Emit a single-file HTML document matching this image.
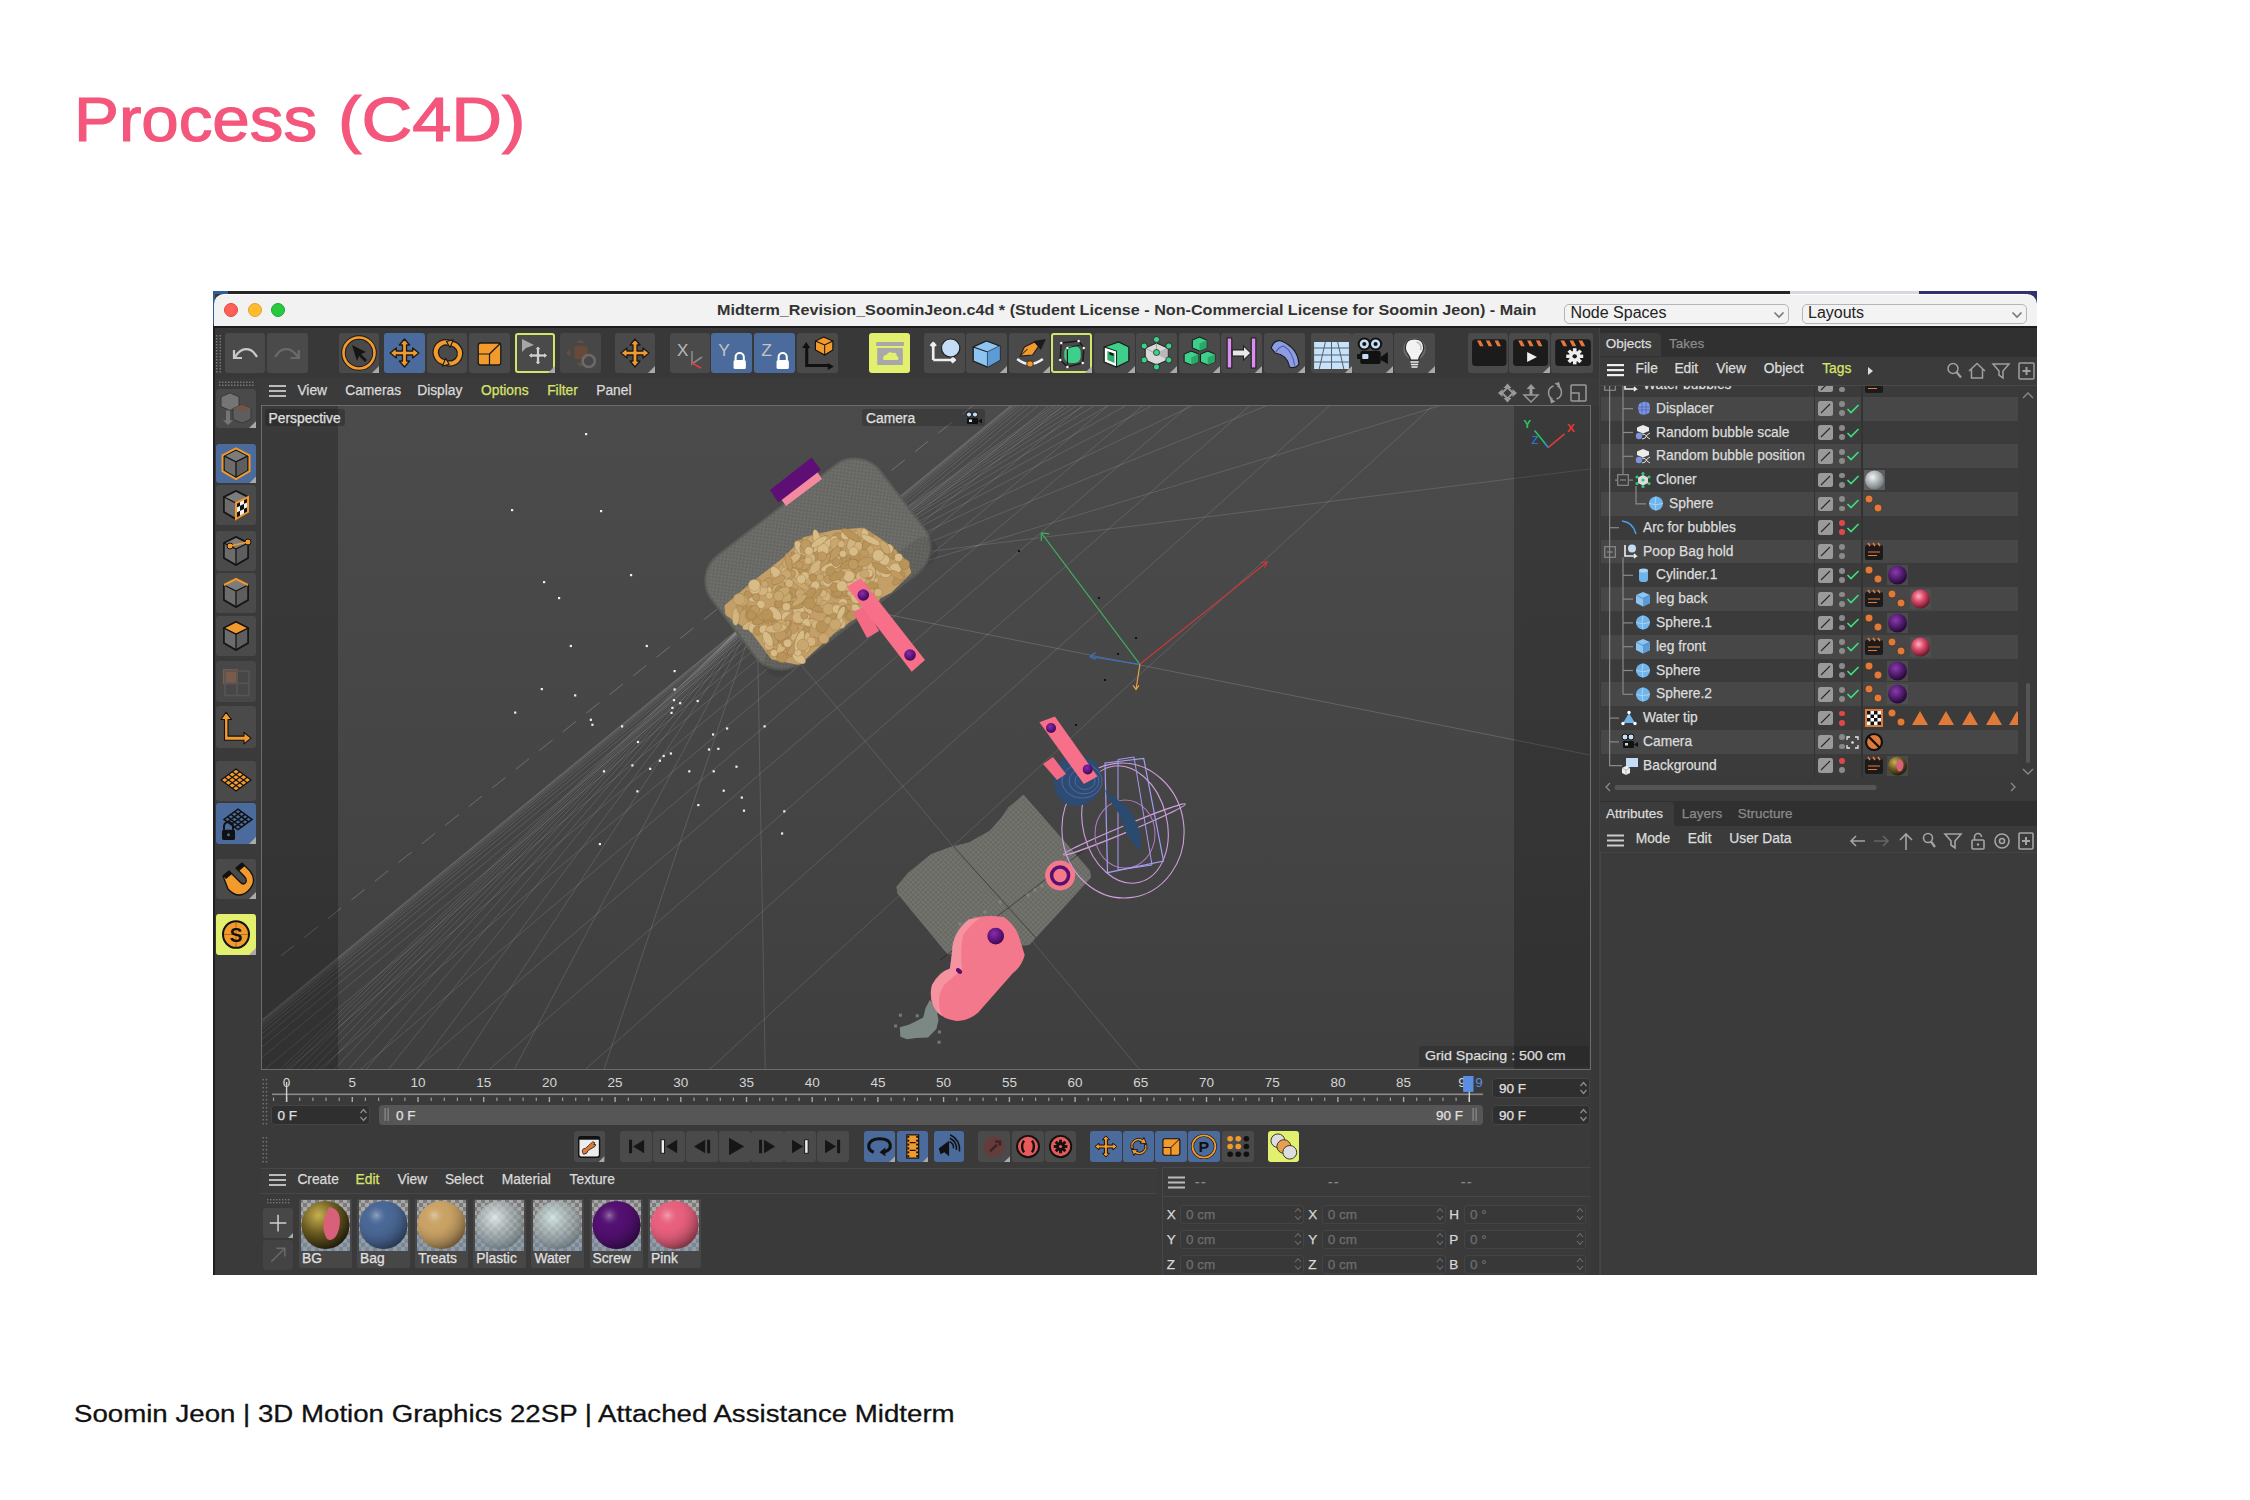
<!DOCTYPE html><html><head><meta charset="utf-8"><style>*{margin:0;padding:0;box-sizing:border-box}
html,body{width:2250px;height:1500px;overflow:hidden;background:#fff;font-family:"Liberation Sans",sans-serif}
.a{position:absolute}
.t{white-space:nowrap;line-height:1;-webkit-font-smoothing:antialiased}
</style></head><body><div class="a t" style="left:74.1px;top:87.5px;font-size:63px;color:#f4567c;transform:scaleX(1.068);transform-origin:0 0;-webkit-text-stroke:1.2px #f4567c">Process</div>
<div class="a t" style="left:338px;top:87.5px;font-size:63px;color:#f4567c;transform:scaleX(1.116);transform-origin:0 0;-webkit-text-stroke:1.2px #f4567c">(C4D)</div>
<div class="a t" style="left:74px;top:1402.2px;font-size:24.7px;color:#111;transform:scaleX(1.12);transform-origin:0 0;-webkit-text-stroke:0.3px #111">Soomin Jeon | 3D Motion Graphics 22SP | Attached Assistance Midterm</div>
<div class="a" style="left:213px;top:291px;width:1824px;height:984px;background:#3a3a3a;"></div>
<div class="a" style="left:213px;top:291px;width:1824px;height:3px;background:#262626;"></div>
<div class="a" style="left:1790px;top:291px;width:129px;height:3px;background:#d5d8de;"></div>
<div class="a" style="left:1919px;top:291px;width:118px;height:3px;background:#2f3170;"></div>
<div class="a" style="left:213px;top:291px;width:2px;height:33px;background:#2f5f96;"></div>
<div class="a" style="left:213px;top:291px;width:15px;height:3px;background:#2f5f96;"></div>
<div class="a" style="left:214px;top:294px;width:1823px;height:32px;background:#f2f2f2;border-radius:10px 10px 0 0;border-top:1px solid #fff"></div>
<div class="a" style="left:2028px;top:291px;width:9px;height:12px;background:#2f3170;"></div>
<div class="a" style="left:2025px;top:294px;width:12px;height:32px;background:#f2f2f2;border-radius:0 10px 0 0"></div>
<div class="a" style="left:213px;top:326px;width:1824px;height:1.5px;background:#1c1c1c;"></div>
<div class="a" style="left:223.8px;top:302.7px;width:14.4px;height:14.4px;border-radius:50%;background:#fe5f57;border:0.6px solid #e2463f"></div>
<div class="a" style="left:247.60000000000002px;top:302.7px;width:14.4px;height:14.4px;border-radius:50%;background:#febc2e;border:0.6px solid #e1a325"></div>
<div class="a" style="left:271.1px;top:302.7px;width:14.4px;height:14.4px;border-radius:50%;background:#28c840;border:0.6px solid #1aab29"></div>
<div class="a t" style="left:716.8px;top:301.6px;font-size:15.3px;color:#333;font-weight:bold;transform:scaleX(1.056);transform-origin:0 0">Midterm_Revision_SoominJeon.c4d * (Student License - Non-Commercial License for Soomin Jeon) - Main</div>
<div class="a" style="left:1564.4px;top:304.4px;width:224.5px;height:20px;border:1.2px solid #b5b5b5;border-radius:5px;background:#f3f3f3"></div>
<div class="a t" style="left:1570.4px;top:304.6px;font-size:16px;color:#222;">Node Spaces</div>
<svg class="a" style="left:1772.9px;top:311px;" width="12" height="8" viewBox="0 0 12 8"><path d="M1.5 1.5 L6 6 L10.5 1.5" stroke="#777" stroke-width="1.6" fill="none"/></svg>
<div class="a" style="left:1802px;top:304.4px;width:224.70000000000005px;height:20px;border:1.2px solid #b5b5b5;border-radius:5px;background:#f3f3f3"></div>
<div class="a t" style="left:1808px;top:304.6px;font-size:16px;color:#222;">Layouts</div>
<svg class="a" style="left:2010.7px;top:311px;" width="12" height="8" viewBox="0 0 12 8"><path d="M1.5 1.5 L6 6 L10.5 1.5" stroke="#777" stroke-width="1.6" fill="none"/></svg>
<div class="a" style="left:213px;top:327.5px;width:1386px;height:50.5px;background:#383838;"></div>
<div class="a" style="left:225px;top:333px;width:40px;height:40px;background:#4a4a4a;border-radius:3px;"></div>
<svg class="a" style="left:225px;top:333px" width="40" height="40" viewBox="0 0 40 40" preserveAspectRatio="none"><path d="M9 17 L9 25 L17 25" stroke="#c8c8c8" stroke-width="2.2" fill="none"/><path d="M10 24 C16 14 26 13 32 24" stroke="#c8c8c8" stroke-width="2.2" fill="none"/></svg>
<div class="a" style="left:267px;top:333px;width:41px;height:40px;background:#4a4a4a;border-radius:3px;"></div>
<svg class="a" style="left:267px;top:333px" width="41" height="40" viewBox="0 0 40 40" preserveAspectRatio="none"><path d="M31 17 L31 25 L23 25" stroke="#6a6a6a" stroke-width="2.2" fill="none"/><path d="M30 24 C24 14 14 13 8 24" stroke="#6a6a6a" stroke-width="2.2" fill="none"/></svg>
<div class="a" style="left:339px;top:333px;width:40px;height:40px;background:#4a4a4a;border-radius:3px;"></div>
<svg class="a" style="left:339px;top:333px" width="40" height="40" viewBox="0 0 40 40" preserveAspectRatio="none"><circle cx="20" cy="20" r="15.5" fill="#4a4a4a" stroke="#1b1b1b" stroke-width="4.5"/><circle cx="20" cy="20" r="15.5" fill="none" stroke="#f39a2d" stroke-width="2.6"/><path d="M13 12 L27 19 L22 21 L28 27 L26 29 L20 23 L18 28 Z" fill="#151515"/><path d="M40 33 L40 40 L33 40 Z" fill="#a9a9a9"/></svg>
<div class="a" style="left:384px;top:333px;width:41px;height:40px;background:#4a6b9b;border-radius:3px;"></div>
<svg class="a" style="left:384px;top:333px" width="41" height="40" viewBox="0 0 40 40" preserveAspectRatio="none"><path d="M20 6 L25 12 L22 12 L22 18 L28 18 L28 15 L34 20 L28 25 L28 22 L22 22 L22 28 L25 28 L20 34 L15 28 L18 28 L18 22 L12 22 L12 25 L6 20 L12 15 L12 18 L18 18 L18 12 L15 12 Z" fill="#f39a2d" stroke="#1b1b1b" stroke-width="1.3" stroke-linejoin="round"/></svg>
<div class="a" style="left:426.5px;top:333px;width:40.5px;height:40px;background:#4a4a4a;border-radius:3px;"></div>
<svg class="a" style="left:426.5px;top:333px" width="40.5" height="40" viewBox="0 0 40 40" preserveAspectRatio="none"><g fill="none"><path d="M22.34 10.05 A10.0 10.0 0 1 0 16.85 29.17" stroke="#1b1b1b" stroke-width="6.4"/><path d="M18.86 29.75 A10.0 10.0 0 1 0 24.35 10.63" stroke="#1b1b1b" stroke-width="6.4"/><path d="M22.34 10.05 A10.0 10.0 0 1 0 16.85 29.17" stroke="#f39a2d" stroke-width="4"/><path d="M18.86 29.75 A10.0 10.0 0 1 0 24.35 10.63" stroke="#f39a2d" stroke-width="4"/></g><path d="M21.95 31.23 L15.28 33.07 L18.43 25.28 Z" fill="#f39a2d" stroke="#1b1b1b" stroke-width="1.1" stroke-linejoin="round"/><path d="M19.25 8.57 L25.92 6.73 L22.77 14.52 Z" fill="#f39a2d" stroke="#1b1b1b" stroke-width="1.1" stroke-linejoin="round"/></svg>
<div class="a" style="left:469px;top:333px;width:41px;height:40px;background:#4a4a4a;border-radius:3px;"></div>
<svg class="a" style="left:469px;top:333px" width="41" height="40" viewBox="0 0 40 40" preserveAspectRatio="none"><rect x="9" y="10" width="22" height="22" rx="2.5" fill="#f39a2d" stroke="#1b1b1b" stroke-width="1.3"/><path d="M9 21 H20 V32 M20 21 L31 10" stroke="#1b1b1b" stroke-width="1.2" fill="none"/></svg>
<div class="a" style="left:515px;top:333px;width:40px;height:40px;background:#4a4a4a;border-radius:3px;box-shadow:inset 0 0 0 2px #d4e36a;"></div>
<svg class="a" style="left:515px;top:333px" width="40" height="40" viewBox="0 0 40 40" preserveAspectRatio="none"><path d="M7 6 L7 19 L11 15 L19 12 Z" fill="#a7a7a7"/><path d="M23 13 L26 16.5 L24.5 16.5 L24.5 21 L29 21 L29 19.5 L32.5 22.5 L29 25.5 L29 24 L24.5 24 L24.5 28.5 L26 28.5 L23 32 L20 28.5 L21.5 28.5 L21.5 24 L17 24 L17 25.5 L13.5 22.5 L17 19.5 L17 21 L21.5 21 L21.5 16.5 L20 16.5 Z" fill="#cfcfcf" stroke="#333" stroke-width="0.6"/><path d="M40 33 L40 40 L33 40 Z" fill="#a9a9a9"/></svg>
<div class="a" style="left:560px;top:333px;width:41px;height:40px;background:#474747;border-radius:3px;"></div>
<svg class="a" style="left:560px;top:333px" width="41" height="40" viewBox="0 0 40 40" preserveAspectRatio="none"><path d="M20 6 L24 10 L16 10 Z M6 20 L10 16 L10 24 Z M20 34 L16 30 L24 30 Z" fill="#6b5040" opacity=".8"/><rect x="14" y="13" width="13" height="13" rx="2" fill="#6e4a35" opacity=".8"/><circle cx="28" cy="28" r="6" fill="none" stroke="#6a6a6a" stroke-width="2.5"/></svg>
<div class="a" style="left:615px;top:333px;width:40px;height:40px;background:#4a4a4a;border-radius:3px;"></div>
<svg class="a" style="left:615px;top:333px" width="40" height="40" viewBox="0 0 40 40" preserveAspectRatio="none"><path d="M20 6 L25 12 L22 12 L22 18 L28 18 L28 15 L34 20 L28 25 L28 22 L22 22 L22 28 L25 28 L20 34 L15 28 L18 28 L18 22 L12 22 L12 25 L6 20 L12 15 L12 18 L18 18 L18 12 L15 12 Z" fill="#f39a2d" stroke="#1b1b1b" stroke-width="1.3" stroke-linejoin="round"/><path d="M40 33 L40 40 L33 40 Z" fill="#a9a9a9"/></svg>
<div class="a" style="left:670px;top:333px;width:40px;height:40px;background:#4a4a4a;border-radius:3px;"></div>
<svg class="a" style="left:670px;top:333px" width="40" height="40" viewBox="0 0 40 40" preserveAspectRatio="none"><text x="7" y="23" font-family="Liberation Sans" font-size="17" fill="#b9b9b9">X</text><path d="M22 18 V31 L32 24" stroke="#8a8a8a" stroke-width="1.6" fill="none"/><path d="M22 30 L31 35" stroke="#e03a3a" stroke-width="1.8"/></svg>
<div class="a" style="left:711px;top:333px;width:41px;height:40px;background:#4a6b9b;border-radius:3px;"></div>
<svg class="a" style="left:711px;top:333px" width="41" height="40" viewBox="0 0 40 40" preserveAspectRatio="none"><text x="7" y="23" font-family="Liberation Sans" font-size="17" fill="#c3c3c3">Y</text><path d="M24 27 V24 A4 4 0 0 1 32 24 V27" stroke="#fff" stroke-width="2" fill="none"/><rect x="22" y="27" width="12" height="9" rx="1.5" fill="#fff"/></svg>
<div class="a" style="left:754px;top:333px;width:41px;height:40px;background:#4a6b9b;border-radius:3px;"></div>
<svg class="a" style="left:754px;top:333px" width="41" height="40" viewBox="0 0 40 40" preserveAspectRatio="none"><text x="7" y="23" font-family="Liberation Sans" font-size="17" fill="#c3c3c3">Z</text><path d="M24 27 V24 A4 4 0 0 1 32 24 V27" stroke="#fff" stroke-width="2" fill="none"/><rect x="22" y="27" width="12" height="9" rx="1.5" fill="#fff"/></svg>
<div class="a" style="left:797px;top:333px;width:41px;height:40px;background:#4a4a4a;border-radius:3px;"></div>
<svg class="a" style="left:797px;top:333px" width="41" height="40" viewBox="0 0 40 40" preserveAspectRatio="none"><path d="M9 9 L5 15 L8 15 L8 34 L30 34 L30 37 L36 33.5 L30 30 L30 31 L11 31 L11 15 L13 15 Z" fill="#111"/><path d="M26 4 L35 8 L35 17 L27 22 L18 17 L18 8 Z" fill="#f39a2d" stroke="#111" stroke-width="1.1"/><path d="M18 8 L27 12 L35 8 M27 12 V22" stroke="#111" stroke-width="1" fill="none"/></svg>
<div class="a" style="left:869px;top:333px;width:41px;height:40px;background:#e3f06f;border-radius:3px;"></div>
<svg class="a" style="left:869px;top:333px" width="41" height="40" viewBox="0 0 40 40" preserveAspectRatio="none"><rect x="7" y="9" width="27" height="4" fill="#a8a8a8"/><rect x="8" y="15" width="25" height="17" fill="#a8a8a8"/><path d="M14 27 Q13 22 17 22 Q19 18 23 20 Q27 19 27 23 Q30 24 28 27 Z" fill="#e3f06f"/></svg>
<div class="a" style="left:923.7px;top:333px;width:41.0px;height:40px;background:#4a4a4a;border-radius:3px;"></div>
<svg class="a" style="left:923.7px;top:333px" width="41.0" height="40" viewBox="0 0 40 40" preserveAspectRatio="none"><path d="M9 27 V10 L6.5 13 M9 10 L11.5 13 M9 27 H30 L27 24.5 M30 27 L27 29.5" stroke="#eee" stroke-width="2.6" fill="none" stroke-linejoin="round"/><circle cx="26" cy="15" r="9" fill="#c4dcf5" stroke="#222" stroke-width="1.2"/></svg>
<div class="a" style="left:966.2px;top:333px;width:41.0px;height:40px;background:#4a4a4a;border-radius:3px;"></div>
<svg class="a" style="left:966.2px;top:333px" width="41.0" height="40" viewBox="0 0 40 40" preserveAspectRatio="none"><path d="M20 8 L33 13 L33 27 L21 34 L7 28 L7 14 Z" fill="#8cc4f2" stroke="#1d1d1d" stroke-width="1.3"/><path d="M7 14 L21 19 L33 13 M21 19 V34" stroke="#1d1d1d" stroke-width="1.1" fill="none"/><path d="M21 19 L33 13 L33 27 L21 34 Z" fill="#5b9bd6"/><path d="M40 33 L40 40 L33 40 Z" fill="#a9a9a9"/></svg>
<div class="a" style="left:1008.7px;top:333px;width:41.0px;height:40px;background:#4a4a4a;border-radius:3px;"></div>
<svg class="a" style="left:1008.7px;top:333px" width="41.0" height="40" viewBox="0 0 40 40" preserveAspectRatio="none"><path d="M8 26 Q20 36 33 26" stroke="#eee" stroke-width="2.4" fill="none"/><circle cx="20.5" cy="31" r="3.2" fill="#f39a2d" stroke="#222" stroke-width="0.8"/><path d="M11 23 L15 14 L25 9 L29 13 L23 22 Z" fill="#f39a2d" stroke="#222" stroke-width="1.1"/><path d="M24 8 L36 6 L31 17 Z" fill="#1b1b1b"/><path d="M11 23 L18 16" stroke="#222" stroke-width="1"/><path d="M40 33 L40 40 L33 40 Z" fill="#a9a9a9"/></svg>
<div class="a" style="left:1051.2px;top:333px;width:41.0px;height:40px;background:#4a4a4a;border-radius:3px;box-shadow:inset 0 0 0 2px #d4e36a;"></div>
<svg class="a" style="left:1051.2px;top:333px" width="41.0" height="40" viewBox="0 0 40 40" preserveAspectRatio="none"><path d="M10 10 L27 8 L32 15 L31 30 L16 34 L9 27 Z" fill="none" stroke="#1b1b1b" stroke-width="1.5"/><rect x="13" y="13" width="16" height="17" rx="6" fill="#3ed08a"/><path d="M15 15 L28 12" stroke="#1b1b1b" stroke-width="1.2"/><path d="M16 15 V32" stroke="#1b1b1b" stroke-width="1.2"/><g fill="#fff" stroke="#222" stroke-width=".5"><circle cx="10" cy="10" r="1.6"/><circle cx="27" cy="8" r="1.6"/><circle cx="32" cy="15" r="1.6"/><circle cx="16" cy="15" r="1.6"/><circle cx="9" cy="27" r="1.6"/><circle cx="31" cy="30" r="1.6"/><circle cx="16" cy="34" r="1.6"/></g><path d="M40 33 L40 40 L33 40 Z" fill="#a9a9a9"/></svg>
<div class="a" style="left:1093.7px;top:333px;width:41.0px;height:40px;background:#4a4a4a;border-radius:3px;"></div>
<svg class="a" style="left:1093.7px;top:333px" width="41.0" height="40" viewBox="0 0 40 40" preserveAspectRatio="none"><path d="M10 14 L24 9 L34 14 L34 28 L22 34 L10 29 Z" fill="#3ed08a" stroke="#1b1b1b" stroke-width="1.2"/><path d="M10 14 L10 29 L22 34 L22 18 Z" fill="#fff" stroke="#1b1b1b" stroke-width="1"/><path d="M13 18 L20 20.5 L20 30 L13 27 Z" fill="#2fae6e"/><path d="M15 19 L19 20.5 L19 23 L15 21.5 Z" fill="#111"/><path d="M40 33 L40 40 L33 40 Z" fill="#a9a9a9"/></svg>
<div class="a" style="left:1136.2px;top:333px;width:41.0px;height:40px;background:#4a4a4a;border-radius:3px;"></div>
<svg class="a" style="left:1136.2px;top:333px" width="41.0" height="40" viewBox="0 0 40 40" preserveAspectRatio="none"><path d="M20 10 L31 15 L31 27 L20 32 L9 27 L9 15 Z" fill="#d8d8d8" stroke="#222" stroke-width="1"/><path d="M20 10 V21 L31 15 M20 21 L9 15" stroke="#999" stroke-width="0.8" fill="none"/><path d="M20 21 L31 27 L31 15 Z" fill="#b8b8b8"/><g fill="#3ed08a" stroke="#1b1b1b" stroke-width=".7"><circle cx="20" cy="6.5" r="3"/><circle cx="8" cy="13" r="3"/><circle cx="32" cy="13" r="3"/><circle cx="20" cy="19.5" r="3"/><circle cx="8" cy="27" r="3"/><circle cx="32" cy="27" r="3"/><circle cx="20" cy="34" r="3"/></g><path d="M40 33 L40 40 L33 40 Z" fill="#a9a9a9"/></svg>
<div class="a" style="left:1178.7px;top:333px;width:41.0px;height:40px;background:#4a4a4a;border-radius:3px;"></div>
<svg class="a" style="left:1178.7px;top:333px" width="41.0" height="40" viewBox="0 0 40 40" preserveAspectRatio="none"><g stroke="#1b1b1b" stroke-width="1" fill="#3ed08a"><path d="M20 4 L27 7 L27 15 L20 18 L13 15 L13 7 Z"/><path d="M12 18 L19 21 L19 29 L12 32 L5 29 L5 21 Z"/><path d="M28 18 L35 21 L35 29 L28 32 L21 29 L21 21 Z"/></g><g fill="#2aa866"><path d="M20 10.5 L27 7 L27 15 L20 18 Z"/><path d="M12 24.5 L19 21 L19 29 L12 32 Z"/><path d="M28 24.5 L35 21 L35 29 L28 32 Z"/></g><path d="M40 33 L40 40 L33 40 Z" fill="#a9a9a9"/></svg>
<div class="a" style="left:1221.2px;top:333px;width:41.0px;height:40px;background:#4a4a4a;border-radius:3px;"></div>
<svg class="a" style="left:1221.2px;top:333px" width="41.0" height="40" viewBox="0 0 40 40" preserveAspectRatio="none"><rect x="6" y="5" width="4.5" height="30" fill="#d98ef0" stroke="#1b1b1b" stroke-width="1"/><rect x="29.5" y="5" width="4.5" height="30" fill="#d98ef0" stroke="#1b1b1b" stroke-width="1"/><path d="M11 17 L22 17 L22 13 L29 20 L22 27 L22 23 L11 23 Z" fill="#e8e8e8" stroke="#1b1b1b" stroke-width="1"/><path d="M40 33 L40 40 L33 40 Z" fill="#a9a9a9"/></svg>
<div class="a" style="left:1263.7px;top:333px;width:41.0px;height:40px;background:#4a4a4a;border-radius:3px;"></div>
<svg class="a" style="left:1263.7px;top:333px" width="41.0" height="40" viewBox="0 0 40 40" preserveAspectRatio="none"><path d="M7 15 Q10 6 17 8 Q33 15 34 31 Q31 36 25 34 Q23 22 11 20 Z" fill="#8d9de3" stroke="#1b1b1b" stroke-width="1.1"/><path d="M11 20 Q14 14 19 13 Q28 18 30 33" stroke="#4f5ea8" stroke-width="1" fill="none"/><path d="M40 33 L40 40 L33 40 Z" fill="#a9a9a9"/></svg>
<div class="a" style="left:1310.7px;top:333px;width:41.0px;height:40px;background:#4a4a4a;border-radius:3px;"></div>
<svg class="a" style="left:1310.7px;top:333px" width="41.0" height="40" viewBox="0 0 40 40" preserveAspectRatio="none"><path d="M3 9 L37 9 L37 36 L3 36 Z" fill="#c7e3fb"/><g stroke="#55606b" stroke-width="1" fill="none"><path d="M3 15 H37 M3 22 H37 M3 29 H37 M14 9 L8 36 M20 9 V36 M26 9 L32 36"/></g><path d="M40 33 L40 40 L33 40 Z" fill="#a9a9a9"/></svg>
<div class="a" style="left:1352.3px;top:333px;width:41.0px;height:40px;background:#4a4a4a;border-radius:3px;"></div>
<svg class="a" style="left:1352.3px;top:333px" width="41.0" height="40" viewBox="0 0 40 40" preserveAspectRatio="none"><circle cx="12" cy="11" r="5.5" fill="#c4dcf5" stroke="#111" stroke-width="2"/><circle cx="23" cy="11" r="5.5" fill="#c4dcf5" stroke="#111" stroke-width="2"/><circle cx="12" cy="11" r="2" fill="#111"/><circle cx="23" cy="11" r="2" fill="#111"/><rect x="8" y="18" width="20" height="13" rx="2" fill="#111"/><path d="M28 24 L35 19 L35 31 L28 27 Z" fill="#111"/><rect x="10" y="21" width="6" height="5" rx="1" fill="#c4dcf5"/><rect x="5" y="21" width="4" height="5" fill="#111"/><path d="M40 33 L40 40 L33 40 Z" fill="#a9a9a9"/></svg>
<div class="a" style="left:1394px;top:333px;width:41px;height:40px;background:#4a4a4a;border-radius:3px;"></div>
<svg class="a" style="left:1394px;top:333px" width="41" height="40" viewBox="0 0 40 40" preserveAspectRatio="none"><circle cx="20" cy="16" r="11" fill="#fff" opacity=".18"/><path d="M20 6 C14 6 11 10 11 15 C11 20 16 22 16 27 L24 27 C24 22 29 20 29 15 C29 10 26 6 20 6 Z" fill="#f2f2f2" stroke="#2a2a2a" stroke-width="1.2"/><path d="M22 9 C26 10 27 14 26 17" stroke="#bbb" stroke-width="1.5" fill="none"/><path d="M16 29 H24 M16.5 31.5 H23.5 M17 34 H23" stroke="#eee" stroke-width="1.6"/><path d="M40 33 L40 40 L33 40 Z" fill="#a9a9a9"/></svg>
<div class="a" style="left:1467.5px;top:333px;width:40.5px;height:40px;background:#4a4a4a;border-radius:3px;"></div>
<svg class="a" style="left:1467.5px;top:333px" width="40.5" height="40" viewBox="0 0 40 40" preserveAspectRatio="none"><rect x="4" y="6.2" width="34" height="26.7" rx="3.5" fill="#1b1b1b"/><path d="M9 7.5 H12.6 L15.4 13.2 H11.8 Z M17.6 7.5 H21.2 L24 13.2 H20.4 Z M26.2 7.5 H29.8 L32.6 13.2 H29 Z" fill="#e8783a"/></svg>
<div class="a" style="left:1509px;top:333px;width:41px;height:40px;background:#4a4a4a;border-radius:3px;"></div>
<svg class="a" style="left:1509px;top:333px" width="41" height="40" viewBox="0 0 40 40" preserveAspectRatio="none"><rect x="4" y="6.2" width="34" height="26.7" rx="3.5" fill="#1b1b1b"/><path d="M9 7.5 H12.6 L15.4 13.2 H11.8 Z M17.6 7.5 H21.2 L24 13.2 H20.4 Z M26.2 7.5 H29.8 L32.6 13.2 H29 Z" fill="#e8783a"/><path d="M17.7 19 L27.3 24 L17.7 29 Z" fill="#eee"/><path d="M40 33 L40 40 L33 40 Z" fill="#a9a9a9"/></svg>
<div class="a" style="left:1551px;top:333px;width:42px;height:40px;background:#4a4a4a;border-radius:3px;"></div>
<svg class="a" style="left:1551px;top:333px" width="42" height="40" viewBox="0 0 40 40" preserveAspectRatio="none"><rect x="4" y="6.2" width="34" height="26.7" rx="3.5" fill="#1b1b1b"/><path d="M9 7.5 H12.6 L15.4 13.2 H11.8 Z M17.6 7.5 H21.2 L24 13.2 H20.4 Z M26.2 7.5 H29.8 L32.6 13.2 H29 Z" fill="#e8783a"/><g transform="translate(22.6,23.3) scale(.85)"><circle r="6.5" fill="#eee"/><g fill="#eee"><rect x="-2" y="-9.5" width="4" height="5" transform="rotate(0)"/><rect x="-2" y="-9.5" width="4" height="5" transform="rotate(45)"/><rect x="-2" y="-9.5" width="4" height="5" transform="rotate(90)"/><rect x="-2" y="-9.5" width="4" height="5" transform="rotate(135)"/><rect x="-2" y="-9.5" width="4" height="5" transform="rotate(180)"/><rect x="-2" y="-9.5" width="4" height="5" transform="rotate(225)"/><rect x="-2" y="-9.5" width="4" height="5" transform="rotate(270)"/><rect x="-2" y="-9.5" width="4" height="5" transform="rotate(315)"/></g><circle r="2.5" fill="#1b1b1b"/></g></svg>
<svg class="a" style="left:215px;top:334px" width="8" height="40"><rect x="1" y="1" width="1.5" height="1.5" fill="#777"/><rect x="1" y="4" width="1.5" height="1.5" fill="#777"/><rect x="1" y="7" width="1.5" height="1.5" fill="#777"/><rect x="1" y="10" width="1.5" height="1.5" fill="#777"/><rect x="1" y="13" width="1.5" height="1.5" fill="#777"/><rect x="1" y="16" width="1.5" height="1.5" fill="#777"/><rect x="1" y="19" width="1.5" height="1.5" fill="#777"/><rect x="1" y="22" width="1.5" height="1.5" fill="#777"/><rect x="1" y="25" width="1.5" height="1.5" fill="#777"/><rect x="1" y="28" width="1.5" height="1.5" fill="#777"/><rect x="1" y="31" width="1.5" height="1.5" fill="#777"/><rect x="1" y="34" width="1.5" height="1.5" fill="#777"/><rect x="1" y="37" width="1.5" height="1.5" fill="#777"/><rect x="4.5" y="1" width="1.5" height="1.5" fill="#777"/><rect x="4.5" y="4" width="1.5" height="1.5" fill="#777"/><rect x="4.5" y="7" width="1.5" height="1.5" fill="#777"/><rect x="4.5" y="10" width="1.5" height="1.5" fill="#777"/><rect x="4.5" y="13" width="1.5" height="1.5" fill="#777"/><rect x="4.5" y="16" width="1.5" height="1.5" fill="#777"/><rect x="4.5" y="19" width="1.5" height="1.5" fill="#777"/><rect x="4.5" y="22" width="1.5" height="1.5" fill="#777"/><rect x="4.5" y="25" width="1.5" height="1.5" fill="#777"/><rect x="4.5" y="28" width="1.5" height="1.5" fill="#777"/><rect x="4.5" y="31" width="1.5" height="1.5" fill="#777"/><rect x="4.5" y="34" width="1.5" height="1.5" fill="#777"/><rect x="4.5" y="37" width="1.5" height="1.5" fill="#777"/></svg>
<svg class="a" style="left:218px;top:381px" width="36" height="6"><rect x="1" y="0.5" width="1.5" height="1.5" fill="#777"/><rect x="1" y="3.5" width="1.5" height="1.5" fill="#777"/><rect x="4" y="0.5" width="1.5" height="1.5" fill="#777"/><rect x="4" y="3.5" width="1.5" height="1.5" fill="#777"/><rect x="7" y="0.5" width="1.5" height="1.5" fill="#777"/><rect x="7" y="3.5" width="1.5" height="1.5" fill="#777"/><rect x="10" y="0.5" width="1.5" height="1.5" fill="#777"/><rect x="10" y="3.5" width="1.5" height="1.5" fill="#777"/><rect x="13" y="0.5" width="1.5" height="1.5" fill="#777"/><rect x="13" y="3.5" width="1.5" height="1.5" fill="#777"/><rect x="16" y="0.5" width="1.5" height="1.5" fill="#777"/><rect x="16" y="3.5" width="1.5" height="1.5" fill="#777"/><rect x="19" y="0.5" width="1.5" height="1.5" fill="#777"/><rect x="19" y="3.5" width="1.5" height="1.5" fill="#777"/><rect x="22" y="0.5" width="1.5" height="1.5" fill="#777"/><rect x="22" y="3.5" width="1.5" height="1.5" fill="#777"/><rect x="25" y="0.5" width="1.5" height="1.5" fill="#777"/><rect x="25" y="3.5" width="1.5" height="1.5" fill="#777"/><rect x="28" y="0.5" width="1.5" height="1.5" fill="#777"/><rect x="28" y="3.5" width="1.5" height="1.5" fill="#777"/><rect x="31" y="0.5" width="1.5" height="1.5" fill="#777"/><rect x="31" y="3.5" width="1.5" height="1.5" fill="#777"/><rect x="34" y="0.5" width="1.5" height="1.5" fill="#777"/><rect x="34" y="3.5" width="1.5" height="1.5" fill="#777"/></svg>
<div class="a" style="left:216px;top:389px;width:40px;height:39px;background:#4a4a4a;border-radius:3px;"></div>
<svg class="a" style="left:216px;top:389px" width="40" height="39" viewBox="0 0 40 40" preserveAspectRatio="none"><g opacity=".45"><path d="M14 4 L23 8 L23 18 L14 22 L5 18 L5 8 Z" fill="#aaa" stroke="#222" stroke-width="1"/><path d="M10 22 V32 L7 32 L12 37 L17 32 L14 32 V22" fill="#aaa"/><path d="M26 16 L35 20 L35 31 L26 35 L17 31 L17 20 Z" fill="#777" stroke="#222" stroke-width="1"/><path d="M17 20 L26 24 L35 20 L26 16 Z" fill="#a0644a"/></g><path d="M40 33 L40 40 L33 40 Z" fill="#a9a9a9"/></svg>
<div class="a" style="left:216px;top:443.5px;width:40px;height:39.5px;background:#4a6b9b;border-radius:3px;"></div>
<svg class="a" style="left:216px;top:443.5px" width="40" height="39.5" viewBox="0 0 40 40" preserveAspectRatio="none"><path d="M20 6 L32 12 L32 27 L20 34 L8 27 L8 12 Z" fill="#707070" stroke="#151515" stroke-width="1.5" stroke-linejoin="round"/><path d="M8 12 L20 18 L32 12 L20 6 Z" fill="#7c7c7c"/><path d="M8 12 L20 18 L20 34 L8 27 Z" fill="#6c6c6c"/><path d="M20 18 L32 12 L32 27 L20 34 Z" fill="#5e5e5e"/><path d="M8 12 L20 18 L32 12 M20 18 V34" stroke="#151515" stroke-width="1.3" fill="none"/><path d="M20 6 L32 12 L32 27 L20 34 L8 27 L8 12 Z" fill="none" stroke="#151515" stroke-width="1.5" stroke-linejoin="round"/><path d="M20 4.5 L33.5 11.5 L33.5 27.5 L20 35.5 L6.5 27.5 L6.5 11.5 Z" fill="none" stroke="#f39a2d" stroke-width="2"/><path d="M40 33 L40 40 L33 40 Z" fill="#a9a9a9"/></svg>
<div class="a" style="left:216px;top:485px;width:40px;height:40px;background:#4a4a4a;border-radius:3px;"></div>
<svg class="a" style="left:216px;top:485px" width="40" height="40" viewBox="0 0 40 40" preserveAspectRatio="none"><path d="M20 6 L32 12 L32 27 L20 34 L8 27 L8 12 Z" fill="#707070" stroke="#151515" stroke-width="1.5" stroke-linejoin="round"/><path d="M8 12 L20 18 L32 12 L20 6 Z" fill="#7c7c7c"/><path d="M8 12 L20 18 L20 34 L8 27 Z" fill="#6c6c6c"/><path d="M20 18 L32 12 L32 27 L20 34 Z" fill="#5e5e5e"/><path d="M8 12 L20 18 L32 12 M20 18 V34" stroke="#151515" stroke-width="1.3" fill="none"/><path d="M20 6 L32 12 L32 27 L20 34 L8 27 L8 12 Z" fill="none" stroke="#151515" stroke-width="1.5" stroke-linejoin="round"/><path d="M20 18 l4 -2 v5 l-4 2 z" fill="#111"/><path d="M20 23 l4 -2 v5 l-4 2 z" fill="#f2f2f2"/><path d="M20 28 l4 -2 v5 l-4 2 z" fill="#111"/><path d="M24 16 l4 -2 v5 l-4 2 z" fill="#f2f2f2"/><path d="M24 21 l4 -2 v5 l-4 2 z" fill="#111"/><path d="M24 26 l4 -2 v5 l-4 2 z" fill="#f2f2f2"/><path d="M28 14 l4 -2 v5 l-4 2 z" fill="#111"/><path d="M28 19 l4 -2 v5 l-4 2 z" fill="#f2f2f2"/><path d="M28 24 l4 -2 v5 l-4 2 z" fill="#111"/><path d="M20 18 L32 12 L32 27 L20 34 Z" fill="none" stroke="#f39a2d" stroke-width="2"/></svg>
<div class="a" style="left:216px;top:531px;width:40px;height:40px;background:#4a4a4a;border-radius:3px;"></div>
<svg class="a" style="left:216px;top:531px" width="40" height="40" viewBox="0 0 40 40" preserveAspectRatio="none"><path d="M20 6 L32 12 L32 27 L20 34 L8 27 L8 12 Z" fill="#707070" stroke="#151515" stroke-width="1.5" stroke-linejoin="round"/><path d="M8 12 L20 18 L32 12 L20 6 Z" fill="#7c7c7c"/><path d="M8 12 L20 18 L20 34 L8 27 Z" fill="#6c6c6c"/><path d="M20 18 L32 12 L32 27 L20 34 Z" fill="#5e5e5e"/><path d="M8 12 L20 18 L32 12 M20 18 V34" stroke="#151515" stroke-width="1.3" fill="none"/><path d="M20 6 L32 12 L32 27 L20 34 L8 27 L8 12 Z" fill="none" stroke="#151515" stroke-width="1.5" stroke-linejoin="round"/><circle cx="14" cy="15" r="3" fill="#f39a2d" stroke="#111" stroke-width="1"/><circle cx="32" cy="11" r="3" fill="#f39a2d" stroke="#111" stroke-width="1"/><path d="M14 15 L32 11" stroke="#f39a2d" stroke-width="1.5"/></svg>
<div class="a" style="left:216px;top:573px;width:40px;height:40px;background:#4a4a4a;border-radius:3px;"></div>
<svg class="a" style="left:216px;top:573px" width="40" height="40" viewBox="0 0 40 40" preserveAspectRatio="none"><path d="M20 6 L32 12 L32 27 L20 34 L8 27 L8 12 Z" fill="#707070" stroke="#151515" stroke-width="1.5" stroke-linejoin="round"/><path d="M8 12 L20 18 L32 12 L20 6 Z" fill="#7c7c7c"/><path d="M8 12 L20 18 L20 34 L8 27 Z" fill="#6c6c6c"/><path d="M20 18 L32 12 L32 27 L20 34 Z" fill="#5e5e5e"/><path d="M8 12 L20 18 L32 12 M20 18 V34" stroke="#151515" stroke-width="1.3" fill="none"/><path d="M20 6 L32 12 L32 27 L20 34 L8 27 L8 12 Z" fill="none" stroke="#151515" stroke-width="1.5" stroke-linejoin="round"/><path d="M8 12 L20 6 L32 12" stroke="#f39a2d" stroke-width="2.2" fill="none"/></svg>
<div class="a" style="left:216px;top:616px;width:40px;height:40px;background:#4a4a4a;border-radius:3px;"></div>
<svg class="a" style="left:216px;top:616px" width="40" height="40" viewBox="0 0 40 40" preserveAspectRatio="none"><path d="M20 6 L32 12 L32 27 L20 34 L8 27 L8 12 Z" fill="#707070" stroke="#151515" stroke-width="1.5" stroke-linejoin="round"/><path d="M8 12 L20 18 L32 12 L20 6 Z" fill="#7c7c7c"/><path d="M8 12 L20 18 L20 34 L8 27 Z" fill="#6c6c6c"/><path d="M20 18 L32 12 L32 27 L20 34 Z" fill="#5e5e5e"/><path d="M8 12 L20 18 L32 12 M20 18 V34" stroke="#151515" stroke-width="1.3" fill="none"/><path d="M20 6 L32 12 L32 27 L20 34 L8 27 L8 12 Z" fill="none" stroke="#151515" stroke-width="1.5" stroke-linejoin="round"/><path d="M8 12 L20 6 L32 12 L20 18 Z" fill="#f39a2d" stroke="#111" stroke-width="1.2"/></svg>
<div class="a" style="left:216px;top:661px;width:40px;height:40.5px;background:#474747;border-radius:3px;"></div>
<svg class="a" style="left:216px;top:661px" width="40" height="40.5" viewBox="0 0 40 40" preserveAspectRatio="none"><rect x="7" y="8" width="15" height="15" fill="#7a5a48"/><rect x="9" y="10" width="24" height="24" fill="none" stroke="#555" stroke-width="1.6"/><path d="M21 10 V34 M9 22 H33" stroke="#555" stroke-width="1.6"/></svg>
<div class="a" style="left:216px;top:706px;width:40px;height:41.5px;background:#4a4a4a;border-radius:3px;"></div>
<svg class="a" style="left:216px;top:706px" width="40" height="41.5" viewBox="0 0 40 40" preserveAspectRatio="none"><path d="M10 6 L5 13 L8.5 13 L8.5 33 L28 33 L28 36.5 L35 31 L28 25.5 L28 29 L12 29 L12 13 L15.5 13 Z" fill="#f39a2d" stroke="#111" stroke-width="1.1" stroke-linejoin="round"/></svg>
<div class="a" style="left:216px;top:761px;width:40px;height:40px;background:#4a4a4a;border-radius:3px;"></div>
<svg class="a" style="left:216px;top:761px" width="40" height="40" viewBox="0 0 40 40" preserveAspectRatio="none"><path d="M20 8 L35 19 L20 30 L5 19 Z" fill="#f39a2d" stroke="#111" stroke-width="1.2"/><g stroke="#111" stroke-width="1.2"><path d="M8.75 16.25 L23.75 27.25 M12.5 13.5 L27.5 24.5 M16.25 10.75 L31.25 21.75 M31.25 16.25 L16.25 27.25 M27.5 13.5 L12.5 24.5 M23.75 10.75 L8.75 21.75"/></g></svg>
<div class="a" style="left:216px;top:803px;width:40px;height:41px;background:#4a6b9b;border-radius:3px;"></div>
<svg class="a" style="left:216px;top:803px" width="40" height="41" viewBox="0 0 40 40" preserveAspectRatio="none"><g fill="none" stroke="#111" stroke-width="1.5"><path d="M22 6 L36 16 L22 26 L8 16 Z"/><path d="M11.5 13.5 L25.5 23.5 M15 11 L29 21 M18.5 8.5 L32.5 18.5 M32.5 13.5 L18.5 23.5 M29 11 L15 21 M25.5 8.5 L11.5 18.5"/></g><path d="M8 26 V23 A4.5 4.5 0 0 1 17 23 V26" stroke="#111" stroke-width="2" fill="none"/><rect x="6" y="26" width="13" height="10" rx="1.5" fill="#111"/><circle cx="12.5" cy="31" r="1.5" fill="#4a6b9b"/><path d="M40 33 L40 40 L33 40 Z" fill="#a9a9a9"/></svg>
<div class="a" style="left:216px;top:859px;width:40px;height:40px;background:#4a4a4a;border-radius:3px;"></div>
<svg class="a" style="left:216px;top:859px" width="40" height="40" viewBox="0 0 40 40" preserveAspectRatio="none"><path d="M6 18 L14 11 L25 23 Q29 27 25 30 Q21 33 17 29 L12 24 Z" fill="none"/><path d="M7 17 L13 12 L24 23 Q28 27 30 23 Q31 20 28 17 L20 9 L26 4 L34 12 Q42 22 32 32 Q22 41 12 30 Z" fill="#f39a2d" stroke="#111" stroke-width="1.3" stroke-linejoin="round"/><path d="M7 17 L13 12 L16 15 L10 20 Z M20 9 L26 4 L29 7 L23 12 Z" fill="#111"/><path d="M40 33 L40 40 L33 40 Z" fill="#a9a9a9"/></svg>
<div class="a" style="left:216px;top:914px;width:40px;height:41px;background:#e3f06f;border-radius:3px;"></div>
<svg class="a" style="left:216px;top:914px" width="40" height="41" viewBox="0 0 40 40" preserveAspectRatio="none"><circle cx="20" cy="20" r="13" fill="#f39a2d" stroke="#111" stroke-width="2"/><text x="20" y="27" text-anchor="middle" font-family="Liberation Sans" font-weight="bold" font-size="19" fill="#111">S</text><path d="M7 20 H33 M20 7 V33" stroke="#111" stroke-width=".6" opacity=".5"/><path d="M40 33 L40 40 L33 40 Z" fill="#a9a9a9"/></svg>
<div class="a" style="left:261px;top:378px;width:1330px;height:27px;background:#3b3b3b;"></div>
<svg class="a" style="left:269px;top:384px" width="18" height="15"><rect x="0" y="1" width="17" height="2" fill="#bbb"/><rect x="0" y="6" width="17" height="2" fill="#bbb"/><rect x="0" y="11" width="17" height="2" fill="#bbb"/></svg>
<div class="a t" style="left:297.4px;top:383.6px;font-size:13.8px;color:#dadada;-webkit-text-stroke:0.25px #dadada;">View</div>
<div class="a t" style="left:345.2px;top:383.6px;font-size:13.8px;color:#dadada;-webkit-text-stroke:0.25px #dadada;">Cameras</div>
<div class="a t" style="left:417.2px;top:383.6px;font-size:13.8px;color:#dadada;-webkit-text-stroke:0.25px #dadada;">Display</div>
<div class="a t" style="left:481px;top:383.6px;font-size:13.8px;color:#d9e36b;-webkit-text-stroke:0.25px #d9e36b;">Options</div>
<div class="a t" style="left:547.2px;top:383.6px;font-size:13.8px;color:#d9e36b;-webkit-text-stroke:0.25px #d9e36b;">Filter</div>
<div class="a t" style="left:596.2px;top:383.6px;font-size:13.8px;color:#dadada;-webkit-text-stroke:0.25px #dadada;">Panel</div>
<svg class="a" style="left:1496px;top:382px" width="92" height="22" viewBox="0 0 92 22"><g fill="#9a9a9a"><path d="M11.5 1.5 L15.5 6 L7.5 6 Z M11.5 20.5 L7.5 16 L15.5 16 Z M2 11 L6.5 7 L6.5 15 Z M21 11 L16.5 7 L16.5 15 Z"/></g><path d="M11.5 5.5 L17 11 L11.5 16.5 L6 11 Z" fill="none" stroke="#9a9a9a" stroke-width="1.8"/><g fill="#9a9a9a"><path d="M35 2 L39.5 7 L36.5 7 L36.5 13 L33.5 13 L33.5 7 L30.5 7 Z"/><path d="M28 13 L42 13 L35 20 Z" fill="none" stroke="#9a9a9a" stroke-width="1.4"/></g><g fill="none" stroke="#9a9a9a" stroke-width="1.5"><path d="M57.5 4 A7 7 0 0 0 56.5 17"/><path d="M60.5 17 A7 7 0 0 0 61.5 4"/></g><path d="M53.5 15.5 L59.5 19.5 L55 21.5 Z M64.5 5.5 L58.5 1.5 L63 0 Z" fill="#9a9a9a"/><g fill="none" stroke="#9a9a9a" stroke-width="1.5"><rect x="75" y="3" width="15" height="16" rx="1"/><path d="M75 11 H83 V19"/></g></svg>
<div class="a" style="left:262px;top:406px;width:1328px;height:663px;background:linear-gradient(180deg,#4b4b4b 0%,#474747 40%,#3f3f3f 100%);"></div>
<svg class="a" style="left:262px;top:406px" width="1328" height="663" viewBox="0 0 1328 663"><defs><pattern id="chk" width="5" height="5" patternUnits="userSpaceOnUse"><rect width="5" height="5" fill="#646461"/><rect width="2.5" height="2.5" fill="#6f6f6b"/><rect x="2.5" y="2.5" width="2.5" height="2.5" fill="#6f6f6b"/></pattern><pattern id="chk2" width="5" height="5" patternUnits="userSpaceOnUse"><rect width="5" height="5" fill="#696964"/><rect width="2.5" height="2.5" fill="#74746e"/><rect x="2.5" y="2.5" width="2.5" height="2.5" fill="#74746e"/></pattern><radialGradient id="pur" cx=".4" cy=".35" r=".7"><stop offset="0" stop-color="#8a2ab0"/><stop offset="1" stop-color="#3a0550"/></radialGradient></defs><line x1="495.0" y1="206.0" x2="2135.8" y2="-937.6" stroke="#ffffff" stroke-opacity="0.13" stroke-width="1" /><line x1="495.0" y1="206.0" x2="2141.7" y2="-929.1" stroke="#ffffff" stroke-opacity="0.13" stroke-width="1" /><line x1="495.0" y1="206.0" x2="2148.3" y2="-919.4" stroke="#ffffff" stroke-opacity="0.13" stroke-width="1" /><line x1="495.0" y1="206.0" x2="2155.9" y2="-908.1" stroke="#ffffff" stroke-opacity="0.13" stroke-width="1" /><line x1="495.0" y1="206.0" x2="2164.7" y2="-894.9" stroke="#ffffff" stroke-opacity="0.13" stroke-width="1" /><line x1="495.0" y1="206.0" x2="2174.9" y2="-879.3" stroke="#ffffff" stroke-opacity="0.13" stroke-width="1" /><line x1="495.0" y1="206.0" x2="2186.9" y2="-860.5" stroke="#ffffff" stroke-opacity="0.13" stroke-width="1" /><line x1="495.0" y1="206.0" x2="2201.3" y2="-837.3" stroke="#ffffff" stroke-opacity="0.13" stroke-width="1" /><line x1="495.0" y1="206.0" x2="2218.7" y2="-808.3" stroke="#ffffff" stroke-opacity="0.13" stroke-width="1" /><line x1="495.0" y1="206.0" x2="2240.3" y2="-770.7" stroke="#ffffff" stroke-opacity="0.13" stroke-width="1" /><line x1="495.0" y1="206.0" x2="2267.5" y2="-720.5" stroke="#ffffff" stroke-opacity="0.13" stroke-width="1" /><line x1="495.0" y1="206.0" x2="2302.6" y2="-649.9" stroke="#ffffff" stroke-opacity="0.13" stroke-width="1" /><line x1="495.0" y1="206.0" x2="2348.9" y2="-544.4" stroke="#ffffff" stroke-opacity="0.13" stroke-width="1" /><line x1="495.0" y1="206.0" x2="2409.6" y2="-372.2" stroke="#ffffff" stroke-opacity="0.13" stroke-width="1" /><line x1="495.0" y1="206.0" x2="1778.2" y2="1740.0" stroke="#ffffff" stroke-opacity="0.13" stroke-width="1" /><line x1="495.0" y1="206.0" x2="531.0" y2="2205.7" stroke="#ffffff" stroke-opacity="0.13" stroke-width="1" /><line x1="495.0" y1="206.0" x2="-139.4" y2="2102.7" stroke="#ffffff" stroke-opacity="0.13" stroke-width="1" /><line x1="495.0" y1="206.0" x2="-442.6" y2="1972.6" stroke="#ffffff" stroke-opacity="0.13" stroke-width="1" /><line x1="495.0" y1="206.0" x2="-601.7" y2="1878.5" stroke="#ffffff" stroke-opacity="0.13" stroke-width="1" /><line x1="495.0" y1="206.0" x2="-697.2" y2="1811.8" stroke="#ffffff" stroke-opacity="0.13" stroke-width="1" /><line x1="495.0" y1="206.0" x2="-760.1" y2="1763.2" stroke="#ffffff" stroke-opacity="0.13" stroke-width="1" /><line x1="495.0" y1="206.0" x2="-804.4" y2="1726.4" stroke="#ffffff" stroke-opacity="0.13" stroke-width="1" /><line x1="495.0" y1="206.0" x2="-837.2" y2="1697.7" stroke="#ffffff" stroke-opacity="0.13" stroke-width="1" /><line x1="495.0" y1="206.0" x2="-862.4" y2="1674.8" stroke="#ffffff" stroke-opacity="0.13" stroke-width="1" /><line x1="495.0" y1="206.0" x2="-882.4" y2="1656.1" stroke="#ffffff" stroke-opacity="0.13" stroke-width="1" /><line x1="495.0" y1="206.0" x2="-898.6" y2="1640.6" stroke="#ffffff" stroke-opacity="0.13" stroke-width="1" /><line x1="495.0" y1="206.0" x2="-912.0" y2="1627.4" stroke="#ffffff" stroke-opacity="0.13" stroke-width="1" /><line x1="495.0" y1="206.0" x2="-923.2" y2="1616.2" stroke="#ffffff" stroke-opacity="0.13" stroke-width="1" /><line x1="495.0" y1="206.0" x2="-932.8" y2="1606.5" stroke="#ffffff" stroke-opacity="0.13" stroke-width="1" /><line x1="495.0" y1="206.0" x2="-941.1" y2="1598.0" stroke="#ffffff" stroke-opacity="0.13" stroke-width="1" /><line x1="495.0" y1="206.0" x2="-948.3" y2="1590.6" stroke="#ffffff" stroke-opacity="0.13" stroke-width="1" /><line x1="2032.1" y1="-1053.4" x2="-2220.1" y2="2435.1" stroke="#ffffff" stroke-opacity="0.13" stroke-width="1" /><line x1="2032.3" y1="-1053.1" x2="-2219.6" y2="2435.6" stroke="#ffffff" stroke-opacity="0.13" stroke-width="1" /><line x1="2032.5" y1="-1052.8" x2="-2219.0" y2="2436.4" stroke="#ffffff" stroke-opacity="0.13" stroke-width="1" /><line x1="2032.8" y1="-1052.4" x2="-2218.1" y2="2437.5" stroke="#ffffff" stroke-opacity="0.13" stroke-width="1" /><line x1="2033.3" y1="-1051.9" x2="-2216.9" y2="2438.9" stroke="#ffffff" stroke-opacity="0.13" stroke-width="1" /><line x1="2033.9" y1="-1051.1" x2="-2215.3" y2="2440.9" stroke="#ffffff" stroke-opacity="0.13" stroke-width="1" /><line x1="2034.8" y1="-1050.0" x2="-2213.1" y2="2443.6" stroke="#ffffff" stroke-opacity="0.13" stroke-width="1" /><line x1="2036.0" y1="-1048.6" x2="-2210.1" y2="2447.2" stroke="#ffffff" stroke-opacity="0.13" stroke-width="1" /><line x1="2037.5" y1="-1046.7" x2="-2206.0" y2="2452.1" stroke="#ffffff" stroke-opacity="0.13" stroke-width="1" /><line x1="2039.7" y1="-1044.1" x2="-2200.5" y2="2458.8" stroke="#ffffff" stroke-opacity="0.13" stroke-width="1" /><line x1="2042.6" y1="-1040.6" x2="-2193.0" y2="2467.9" stroke="#ffffff" stroke-opacity="0.13" stroke-width="1" /><line x1="2046.6" y1="-1035.8" x2="-2182.8" y2="2480.2" stroke="#ffffff" stroke-opacity="0.13" stroke-width="1" /><line x1="2052.0" y1="-1029.3" x2="-2168.9" y2="2496.9" stroke="#ffffff" stroke-opacity="0.13" stroke-width="1" /><line x1="2059.3" y1="-1020.6" x2="-2150.1" y2="2519.4" stroke="#ffffff" stroke-opacity="0.13" stroke-width="1" /><line x1="2069.3" y1="-1008.8" x2="-2124.5" y2="2549.6" stroke="#ffffff" stroke-opacity="0.13" stroke-width="1" /><line x1="2082.7" y1="-993.0" x2="-2089.8" y2="2590.3" stroke="#ffffff" stroke-opacity="0.13" stroke-width="1" /><line x1="2101.0" y1="-971.9" x2="-2042.8" y2="2644.6" stroke="#ffffff" stroke-opacity="0.13" stroke-width="1" /><line x1="2125.7" y1="-943.9" x2="-1979.2" y2="2716.6" stroke="#ffffff" stroke-opacity="0.13" stroke-width="1" /><line x1="2159.1" y1="-907.0" x2="-1893.5" y2="2811.4" stroke="#ffffff" stroke-opacity="0.13" stroke-width="1" /><line x1="588.0" y1="201.0" x2="1328.0" y2="349.0" stroke="#ffffff" stroke-opacity="0.16" stroke-width="1" /><line x1="663.0" y1="146.0" x2="1328.0" y2="63.0" stroke="#ffffff" stroke-opacity="0.13" stroke-width="1" /><line x1="19" y1="550" x2="718" y2="-6" stroke="#fff" stroke-opacity=".22" stroke-width="1" stroke-dasharray="17,13"/><rect x="323" y="27" width="2.2" height="2.2" fill="#f0f0f0"/><rect x="249" y="103" width="2.2" height="2.2" fill="#f0f0f0"/><rect x="338" y="104" width="2.2" height="2.2" fill="#f0f0f0"/><rect x="368" y="168" width="2.2" height="2.2" fill="#f0f0f0"/><rect x="281" y="175" width="2.2" height="2.2" fill="#f0f0f0"/><rect x="296" y="191" width="2.2" height="2.2" fill="#f0f0f0"/><rect x="307.75" y="238.89999999999998" width="2.2" height="2.2" fill="#f0f0f0"/><rect x="383.70000000000005" y="238.89999999999998" width="2.2" height="2.2" fill="#f0f0f0"/><rect x="411.5" y="264" width="2.2" height="2.2" fill="#f0f0f0"/><rect x="278.70000000000005" y="282" width="2.2" height="2.2" fill="#f0f0f0"/><rect x="312.1" y="288.29999999999995" width="2.2" height="2.2" fill="#f0f0f0"/><rect x="411.5" y="282.4" width="2.2" height="2.2" fill="#f0f0f0"/><rect x="252.10000000000002" y="305.5" width="2.2" height="2.2" fill="#f0f0f0"/><rect x="410.9" y="293" width="2.2" height="2.2" fill="#f0f0f0"/><rect x="417.1" y="296.1" width="2.2" height="2.2" fill="#f0f0f0"/><rect x="409.29999999999995" y="300.79999999999995" width="2.2" height="2.2" fill="#f0f0f0"/><rect x="408.4" y="305.79999999999995" width="2.2" height="2.2" fill="#f0f0f0"/><rect x="434.6" y="293.9" width="2.2" height="2.2" fill="#f0f0f0"/><rect x="327.75" y="312.70000000000005" width="2.2" height="2.2" fill="#f0f0f0"/><rect x="329.29999999999995" y="317.70000000000005" width="2.2" height="2.2" fill="#f0f0f0"/><rect x="359" y="319.25" width="2.2" height="2.2" fill="#f0f0f0"/><rect x="464" y="321.4" width="2.2" height="2.2" fill="#f0f0f0"/><rect x="501.5" y="319.25" width="2.2" height="2.2" fill="#f0f0f0"/><rect x="450" y="327.4" width="2.2" height="2.2" fill="#f0f0f0"/><rect x="374.9" y="334.9" width="2.2" height="2.2" fill="#f0f0f0"/><rect x="445.9" y="342.4" width="2.2" height="2.2" fill="#f0f0f0"/><rect x="455.25" y="341.75" width="2.2" height="2.2" fill="#f0f0f0"/><rect x="407.75" y="346.4" width="2.2" height="2.2" fill="#f0f0f0"/><rect x="400.6" y="348.9" width="2.2" height="2.2" fill="#f0f0f0"/><rect x="396.79999999999995" y="353.6" width="2.2" height="2.2" fill="#f0f0f0"/><rect x="369.29999999999995" y="358.29999999999995" width="2.2" height="2.2" fill="#f0f0f0"/><rect x="387.1" y="361.75" width="2.2" height="2.2" fill="#f0f0f0"/><rect x="340.9" y="364.25" width="2.2" height="2.2" fill="#f0f0f0"/><rect x="426.20000000000005" y="364.25" width="2.2" height="2.2" fill="#f0f0f0"/><rect x="450.6" y="364.25" width="2.2" height="2.2" fill="#f0f0f0"/><rect x="473.4" y="359.6" width="2.2" height="2.2" fill="#f0f0f0"/><rect x="374.29999999999995" y="384.25" width="2.2" height="2.2" fill="#f0f0f0"/><rect x="460.6" y="383.6" width="2.2" height="2.2" fill="#f0f0f0"/><rect x="478.70000000000005" y="390.5" width="2.2" height="2.2" fill="#f0f0f0"/><rect x="435.25" y="398" width="2.2" height="2.2" fill="#f0f0f0"/><rect x="480.9" y="403.6" width="2.2" height="2.2" fill="#f0f0f0"/><rect x="521.2" y="404.25" width="2.2" height="2.2" fill="#f0f0f0"/><rect x="519" y="426.4" width="2.2" height="2.2" fill="#f0f0f0"/><rect x="336.79999999999995" y="437" width="2.2" height="2.2" fill="#f0f0f0"/><rect x="756" y="144" width="2" height="2" fill="#111"/><rect x="873" y="231" width="2" height="2" fill="#111"/><rect x="855" y="247" width="2" height="2" fill="#111"/><rect x="842" y="273" width="2" height="2" fill="#111"/><rect x="813" y="318" width="2" height="2" fill="#111"/><rect x="836" y="191" width="2" height="2" fill="#111"/><g transform="translate(556,158) rotate(-37.5)"><rect x="-106" y="-68" width="212" height="136" rx="32" fill="url(#chk)" stroke="#5c5c58" stroke-width="2"/><rect x="-106" y="40" width="212" height="28" rx="14" fill="#000" opacity=".08"/></g><polygon points="465.5,200.7 491.0,179.0 523.0,154.0 543.0,134.0 573.0,127.0 601.0,124.8 623.0,139.0 643.0,157.0 646.0,166.0 628.0,184.0 608.0,194.0 594.7,207.3 569.7,225.7 536.3,255.7 511.3,250.7 491.3,224.0 466.3,207.3" fill="#c4a068" stroke="#c4a068" stroke-width="6" stroke-linejoin="round"/><ellipse cx="548.1" cy="154.3" rx="9.9" ry="3.6" transform="rotate(45 548.1 154.3)" fill="#b99459" stroke="#8c6a3c" stroke-opacity=".45" stroke-width=".7"/><ellipse cx="532.8" cy="228.0" rx="7.5" ry="3.0" transform="rotate(111 532.8 228.0)" fill="#d3b47e" stroke="#8c6a3c" stroke-opacity=".45" stroke-width=".7"/><circle cx="625.3" cy="149.0" r="3.9" fill="#c9a86f" stroke="#8c6a3c" stroke-opacity=".45" stroke-width=".7"/><circle cx="578.1" cy="145.0" r="5.7" fill="#c9a86f" stroke="#8c6a3c" stroke-opacity=".45" stroke-width=".7"/><circle cx="515.4" cy="170.7" r="4.2" fill="#c9a86f" stroke="#8c6a3c" stroke-opacity=".45" stroke-width=".7"/><ellipse cx="521.7" cy="235.9" rx="8.4" ry="3.5" transform="rotate(122 521.7 235.9)" fill="#b99459" stroke="#8c6a3c" stroke-opacity=".45" stroke-width=".7"/><ellipse cx="615.2" cy="187.7" rx="7.7" ry="3.4" transform="rotate(85 615.2 187.7)" fill="#bf9b62" stroke="#8c6a3c" stroke-opacity=".45" stroke-width=".7"/><circle cx="526.7" cy="176.8" r="4.4" fill="#b99459" stroke="#8c6a3c" stroke-opacity=".45" stroke-width=".7"/><circle cx="638.9" cy="168.2" r="4.1" fill="#bf9b62" stroke="#8c6a3c" stroke-opacity=".45" stroke-width=".7"/><circle cx="546.9" cy="203.3" r="3.6" fill="#bf9b62" stroke="#8c6a3c" stroke-opacity=".45" stroke-width=".7"/><ellipse cx="523.4" cy="206.3" rx="9.2" ry="3.5" transform="rotate(166 523.4 206.3)" fill="#c9a86f" stroke="#8c6a3c" stroke-opacity=".45" stroke-width=".7"/><ellipse cx="535.9" cy="152.9" rx="9.6" ry="3.2" transform="rotate(45 535.9 152.9)" fill="#b99459" stroke="#8c6a3c" stroke-opacity=".45" stroke-width=".7"/><ellipse cx="611.9" cy="166.8" rx="10.8" ry="3.9" transform="rotate(132 611.9 166.8)" fill="#c9a86f" stroke="#8c6a3c" stroke-opacity=".45" stroke-width=".7"/><circle cx="609.3" cy="134.2" r="3.6" fill="#d8bc88" stroke="#8c6a3c" stroke-opacity=".45" stroke-width=".7"/><circle cx="538.8" cy="139.2" r="5.9" fill="#b99459" stroke="#8c6a3c" stroke-opacity=".45" stroke-width=".7"/><circle cx="545.1" cy="188.8" r="4.2" fill="#bf9b62" stroke="#8c6a3c" stroke-opacity=".45" stroke-width=".7"/><circle cx="553.9" cy="167.4" r="4.8" fill="#d3b47e" stroke="#8c6a3c" stroke-opacity=".45" stroke-width=".7"/><circle cx="563.2" cy="190.9" r="5.4" fill="#d3b47e" stroke="#8c6a3c" stroke-opacity=".45" stroke-width=".7"/><circle cx="603.9" cy="171.0" r="4.2" fill="#bf9b62" stroke="#8c6a3c" stroke-opacity=".45" stroke-width=".7"/><circle cx="641.7" cy="167.6" r="3.5" fill="#c9a86f" stroke="#8c6a3c" stroke-opacity=".45" stroke-width=".7"/><circle cx="563.0" cy="154.8" r="5.5" fill="#bf9b62" stroke="#8c6a3c" stroke-opacity=".45" stroke-width=".7"/><circle cx="524.8" cy="211.1" r="5.6" fill="#d8bc88" stroke="#8c6a3c" stroke-opacity=".45" stroke-width=".7"/><ellipse cx="557.5" cy="194.7" rx="10.4" ry="3.4" transform="rotate(65 557.5 194.7)" fill="#c9a86f" stroke="#8c6a3c" stroke-opacity=".45" stroke-width=".7"/><circle cx="538.0" cy="207.2" r="5.8" fill="#b99459" stroke="#8c6a3c" stroke-opacity=".45" stroke-width=".7"/><circle cx="516.1" cy="198.1" r="3.6" fill="#bf9b62" stroke="#8c6a3c" stroke-opacity=".45" stroke-width=".7"/><ellipse cx="488.7" cy="182.1" rx="9.5" ry="3.1" transform="rotate(123 488.7 182.1)" fill="#c9a86f" stroke="#8c6a3c" stroke-opacity=".45" stroke-width=".7"/><circle cx="548.5" cy="151.4" r="3.8" fill="#d3b47e" stroke="#8c6a3c" stroke-opacity=".45" stroke-width=".7"/><circle cx="563.3" cy="178.4" r="5.0" fill="#bf9b62" stroke="#8c6a3c" stroke-opacity=".45" stroke-width=".7"/><ellipse cx="571.3" cy="153.0" rx="8.1" ry="3.6" transform="rotate(73 571.3 153.0)" fill="#bf9b62" stroke="#8c6a3c" stroke-opacity=".45" stroke-width=".7"/><circle cx="575.8" cy="132.6" r="5.9" fill="#b99459" stroke="#8c6a3c" stroke-opacity=".45" stroke-width=".7"/><circle cx="514.3" cy="169.3" r="5.5" fill="#c9a86f" stroke="#8c6a3c" stroke-opacity=".45" stroke-width=".7"/><ellipse cx="581.3" cy="171.8" rx="8.9" ry="3.3" transform="rotate(69 581.3 171.8)" fill="#c9a86f" stroke="#8c6a3c" stroke-opacity=".45" stroke-width=".7"/><circle cx="531.3" cy="165.6" r="4.3" fill="#b99459" stroke="#8c6a3c" stroke-opacity=".45" stroke-width=".7"/><circle cx="552.7" cy="187.6" r="5.6" fill="#d8bc88" stroke="#8c6a3c" stroke-opacity=".45" stroke-width=".7"/><circle cx="488.5" cy="203.9" r="4.5" fill="#bf9b62" stroke="#8c6a3c" stroke-opacity=".45" stroke-width=".7"/><ellipse cx="552.4" cy="160.0" rx="10.8" ry="3.4" transform="rotate(119 552.4 160.0)" fill="#d8bc88" stroke="#8c6a3c" stroke-opacity=".45" stroke-width=".7"/><ellipse cx="533.3" cy="187.7" rx="10.1" ry="3.4" transform="rotate(168 533.3 187.7)" fill="#b99459" stroke="#8c6a3c" stroke-opacity=".45" stroke-width=".7"/><circle cx="574.7" cy="186.9" r="5.7" fill="#b99459" stroke="#8c6a3c" stroke-opacity=".45" stroke-width=".7"/><ellipse cx="512.2" cy="220.2" rx="8.9" ry="3.5" transform="rotate(95 512.2 220.2)" fill="#b99459" stroke="#8c6a3c" stroke-opacity=".45" stroke-width=".7"/><circle cx="540.1" cy="201.3" r="5.6" fill="#d8bc88" stroke="#8c6a3c" stroke-opacity=".45" stroke-width=".7"/><circle cx="549.3" cy="216.6" r="4.7" fill="#c9a86f" stroke="#8c6a3c" stroke-opacity=".45" stroke-width=".7"/><circle cx="603.6" cy="162.4" r="4.6" fill="#d3b47e" stroke="#8c6a3c" stroke-opacity=".45" stroke-width=".7"/><ellipse cx="513.0" cy="230.6" rx="9.2" ry="3.7" transform="rotate(86 513.0 230.6)" fill="#bf9b62" stroke="#8c6a3c" stroke-opacity=".45" stroke-width=".7"/><circle cx="500.1" cy="211.3" r="3.8" fill="#d3b47e" stroke="#8c6a3c" stroke-opacity=".45" stroke-width=".7"/><ellipse cx="514.2" cy="250.3" rx="10.2" ry="3.1" transform="rotate(33 514.2 250.3)" fill="#c9a86f" stroke="#8c6a3c" stroke-opacity=".45" stroke-width=".7"/><circle cx="498.9" cy="198.4" r="4.2" fill="#d8bc88" stroke="#8c6a3c" stroke-opacity=".45" stroke-width=".7"/><circle cx="567.7" cy="135.9" r="3.8" fill="#d8bc88" stroke="#8c6a3c" stroke-opacity=".45" stroke-width=".7"/><circle cx="540.9" cy="164.0" r="4.4" fill="#b99459" stroke="#8c6a3c" stroke-opacity=".45" stroke-width=".7"/><circle cx="567.2" cy="215.9" r="4.9" fill="#bf9b62" stroke="#8c6a3c" stroke-opacity=".45" stroke-width=".7"/><ellipse cx="577.2" cy="156.6" rx="8.1" ry="4.5" transform="rotate(150 577.2 156.6)" fill="#b99459" stroke="#8c6a3c" stroke-opacity=".45" stroke-width=".7"/><circle cx="545.0" cy="174.6" r="5.1" fill="#c9a86f" stroke="#8c6a3c" stroke-opacity=".45" stroke-width=".7"/><circle cx="572.0" cy="153.1" r="4.3" fill="#d8bc88" stroke="#8c6a3c" stroke-opacity=".45" stroke-width=".7"/><circle cx="597.2" cy="126.7" r="4.6" fill="#c9a86f" stroke="#8c6a3c" stroke-opacity=".45" stroke-width=".7"/><circle cx="552.4" cy="149.2" r="5.6" fill="#b99459" stroke="#8c6a3c" stroke-opacity=".45" stroke-width=".7"/><circle cx="530.6" cy="222.3" r="5.5" fill="#bf9b62" stroke="#8c6a3c" stroke-opacity=".45" stroke-width=".7"/><ellipse cx="541.2" cy="240.8" rx="7.9" ry="3.3" transform="rotate(179 541.2 240.8)" fill="#b99459" stroke="#8c6a3c" stroke-opacity=".45" stroke-width=".7"/><circle cx="585.0" cy="168.8" r="5.7" fill="#d8bc88" stroke="#8c6a3c" stroke-opacity=".45" stroke-width=".7"/><circle cx="576.9" cy="180.3" r="4.0" fill="#d8bc88" stroke="#8c6a3c" stroke-opacity=".45" stroke-width=".7"/><circle cx="583.4" cy="129.2" r="4.7" fill="#d8bc88" stroke="#8c6a3c" stroke-opacity=".45" stroke-width=".7"/><circle cx="564.0" cy="134.8" r="5.2" fill="#c9a86f" stroke="#8c6a3c" stroke-opacity=".45" stroke-width=".7"/><circle cx="524.1" cy="226.5" r="5.2" fill="#bf9b62" stroke="#8c6a3c" stroke-opacity=".45" stroke-width=".7"/><ellipse cx="587.4" cy="186.5" rx="8.2" ry="4.0" transform="rotate(120 587.4 186.5)" fill="#c9a86f" stroke="#8c6a3c" stroke-opacity=".45" stroke-width=".7"/><circle cx="598.0" cy="142.3" r="4.9" fill="#c9a86f" stroke="#8c6a3c" stroke-opacity=".45" stroke-width=".7"/><circle cx="584.0" cy="207.3" r="4.0" fill="#bf9b62" stroke="#8c6a3c" stroke-opacity=".45" stroke-width=".7"/><circle cx="607.0" cy="144.1" r="5.1" fill="#c9a86f" stroke="#8c6a3c" stroke-opacity=".45" stroke-width=".7"/><ellipse cx="607.6" cy="177.7" rx="10.3" ry="3.8" transform="rotate(150 607.6 177.7)" fill="#d3b47e" stroke="#8c6a3c" stroke-opacity=".45" stroke-width=".7"/><circle cx="503.5" cy="233.9" r="3.6" fill="#d3b47e" stroke="#8c6a3c" stroke-opacity=".45" stroke-width=".7"/><circle cx="507.0" cy="177.3" r="5.7" fill="#bf9b62" stroke="#8c6a3c" stroke-opacity=".45" stroke-width=".7"/><circle cx="542.7" cy="170.1" r="4.4" fill="#d8bc88" stroke="#8c6a3c" stroke-opacity=".45" stroke-width=".7"/><circle cx="633.3" cy="163.0" r="6.0" fill="#d8bc88" stroke="#8c6a3c" stroke-opacity=".45" stroke-width=".7"/><ellipse cx="564.5" cy="138.8" rx="10.3" ry="3.5" transform="rotate(139 564.5 138.8)" fill="#d8bc88" stroke="#8c6a3c" stroke-opacity=".45" stroke-width=".7"/><ellipse cx="540.3" cy="201.5" rx="8.0" ry="4.1" transform="rotate(89 540.3 201.5)" fill="#c9a86f" stroke="#8c6a3c" stroke-opacity=".45" stroke-width=".7"/><ellipse cx="605.7" cy="173.3" rx="10.8" ry="3.2" transform="rotate(51 605.7 173.3)" fill="#b99459" stroke="#8c6a3c" stroke-opacity=".45" stroke-width=".7"/><ellipse cx="519.7" cy="162.8" rx="8.1" ry="3.1" transform="rotate(122 519.7 162.8)" fill="#c9a86f" stroke="#8c6a3c" stroke-opacity=".45" stroke-width=".7"/><ellipse cx="575.5" cy="152.0" rx="8.4" ry="3.2" transform="rotate(36 575.5 152.0)" fill="#d8bc88" stroke="#8c6a3c" stroke-opacity=".45" stroke-width=".7"/><ellipse cx="576.9" cy="142.3" rx="9.5" ry="3.2" transform="rotate(109 576.9 142.3)" fill="#d3b47e" stroke="#8c6a3c" stroke-opacity=".45" stroke-width=".7"/><ellipse cx="604.8" cy="181.1" rx="10.7" ry="3.7" transform="rotate(57 604.8 181.1)" fill="#d8bc88" stroke="#8c6a3c" stroke-opacity=".45" stroke-width=".7"/><circle cx="541.4" cy="182.1" r="5.9" fill="#c9a86f" stroke="#8c6a3c" stroke-opacity=".45" stroke-width=".7"/><circle cx="572.4" cy="133.8" r="4.0" fill="#d8bc88" stroke="#8c6a3c" stroke-opacity=".45" stroke-width=".7"/><circle cx="503.3" cy="219.8" r="4.0" fill="#bf9b62" stroke="#8c6a3c" stroke-opacity=".45" stroke-width=".7"/><circle cx="566.0" cy="170.0" r="5.5" fill="#c9a86f" stroke="#8c6a3c" stroke-opacity=".45" stroke-width=".7"/><circle cx="552.9" cy="168.9" r="4.7" fill="#c9a86f" stroke="#8c6a3c" stroke-opacity=".45" stroke-width=".7"/><circle cx="630.8" cy="147.5" r="4.7" fill="#bf9b62" stroke="#8c6a3c" stroke-opacity=".45" stroke-width=".7"/><circle cx="560.5" cy="132.0" r="3.5" fill="#c9a86f" stroke="#8c6a3c" stroke-opacity=".45" stroke-width=".7"/><circle cx="556.3" cy="202.9" r="3.6" fill="#c9a86f" stroke="#8c6a3c" stroke-opacity=".45" stroke-width=".7"/><circle cx="588.2" cy="206.3" r="4.7" fill="#b99459" stroke="#8c6a3c" stroke-opacity=".45" stroke-width=".7"/><circle cx="593.0" cy="176.1" r="5.2" fill="#b99459" stroke="#8c6a3c" stroke-opacity=".45" stroke-width=".7"/><circle cx="586.7" cy="195.8" r="5.0" fill="#d8bc88" stroke="#8c6a3c" stroke-opacity=".45" stroke-width=".7"/><ellipse cx="588.5" cy="193.7" rx="10.1" ry="3.9" transform="rotate(5 588.5 193.7)" fill="#bf9b62" stroke="#8c6a3c" stroke-opacity=".45" stroke-width=".7"/><circle cx="515.7" cy="169.3" r="4.0" fill="#b99459" stroke="#8c6a3c" stroke-opacity=".45" stroke-width=".7"/><circle cx="562.4" cy="175.3" r="4.4" fill="#d3b47e" stroke="#8c6a3c" stroke-opacity=".45" stroke-width=".7"/><circle cx="602.2" cy="194.6" r="5.0" fill="#c9a86f" stroke="#8c6a3c" stroke-opacity=".45" stroke-width=".7"/><ellipse cx="590.2" cy="198.1" rx="8.2" ry="4.2" transform="rotate(18 590.2 198.1)" fill="#bf9b62" stroke="#8c6a3c" stroke-opacity=".45" stroke-width=".7"/><circle cx="537.3" cy="145.5" r="5.1" fill="#d3b47e" stroke="#8c6a3c" stroke-opacity=".45" stroke-width=".7"/><circle cx="580.9" cy="197.1" r="4.6" fill="#d8bc88" stroke="#8c6a3c" stroke-opacity=".45" stroke-width=".7"/><circle cx="480.2" cy="199.4" r="4.6" fill="#b99459" stroke="#8c6a3c" stroke-opacity=".45" stroke-width=".7"/><ellipse cx="609.1" cy="166.2" rx="10.3" ry="4.4" transform="rotate(87 609.1 166.2)" fill="#d3b47e" stroke="#8c6a3c" stroke-opacity=".45" stroke-width=".7"/><circle cx="519.1" cy="240.6" r="4.1" fill="#d8bc88" stroke="#8c6a3c" stroke-opacity=".45" stroke-width=".7"/><circle cx="549.5" cy="133.4" r="3.8" fill="#c9a86f" stroke="#8c6a3c" stroke-opacity=".45" stroke-width=".7"/><circle cx="522.5" cy="171.6" r="4.6" fill="#d3b47e" stroke="#8c6a3c" stroke-opacity=".45" stroke-width=".7"/><circle cx="520.0" cy="229.1" r="5.8" fill="#c9a86f" stroke="#8c6a3c" stroke-opacity=".45" stroke-width=".7"/><ellipse cx="546.1" cy="216.3" rx="8.9" ry="3.0" transform="rotate(169 546.1 216.3)" fill="#d3b47e" stroke="#8c6a3c" stroke-opacity=".45" stroke-width=".7"/><circle cx="531.2" cy="168.0" r="5.8" fill="#d3b47e" stroke="#8c6a3c" stroke-opacity=".45" stroke-width=".7"/><circle cx="602.2" cy="146.9" r="4.2" fill="#bf9b62" stroke="#8c6a3c" stroke-opacity=".45" stroke-width=".7"/><circle cx="553.8" cy="218.7" r="4.2" fill="#d3b47e" stroke="#8c6a3c" stroke-opacity=".45" stroke-width=".7"/><circle cx="522.7" cy="240.3" r="4.1" fill="#b99459" stroke="#8c6a3c" stroke-opacity=".45" stroke-width=".7"/><circle cx="596.2" cy="139.9" r="4.6" fill="#d3b47e" stroke="#8c6a3c" stroke-opacity=".45" stroke-width=".7"/><circle cx="622.3" cy="154.0" r="5.5" fill="#d8bc88" stroke="#8c6a3c" stroke-opacity=".45" stroke-width=".7"/><circle cx="506.2" cy="184.5" r="3.7" fill="#d8bc88" stroke="#8c6a3c" stroke-opacity=".45" stroke-width=".7"/><ellipse cx="576.7" cy="203.0" rx="8.7" ry="4.3" transform="rotate(139 576.7 203.0)" fill="#c9a86f" stroke="#8c6a3c" stroke-opacity=".45" stroke-width=".7"/><circle cx="538.9" cy="157.7" r="3.5" fill="#d8bc88" stroke="#8c6a3c" stroke-opacity=".45" stroke-width=".7"/><ellipse cx="603.5" cy="130.0" rx="7.6" ry="4.0" transform="rotate(74 603.5 130.0)" fill="#d8bc88" stroke="#8c6a3c" stroke-opacity=".45" stroke-width=".7"/><circle cx="601.5" cy="189.6" r="3.8" fill="#bf9b62" stroke="#8c6a3c" stroke-opacity=".45" stroke-width=".7"/><ellipse cx="493.5" cy="180.3" rx="8.3" ry="3.3" transform="rotate(118 493.5 180.3)" fill="#bf9b62" stroke="#8c6a3c" stroke-opacity=".45" stroke-width=".7"/><ellipse cx="514.4" cy="247.2" rx="9.6" ry="3.6" transform="rotate(20 514.4 247.2)" fill="#b99459" stroke="#8c6a3c" stroke-opacity=".45" stroke-width=".7"/><circle cx="528.8" cy="187.3" r="5.7" fill="#b99459" stroke="#8c6a3c" stroke-opacity=".45" stroke-width=".7"/><ellipse cx="532.0" cy="153.0" rx="8.7" ry="3.8" transform="rotate(139 532.0 153.0)" fill="#d3b47e" stroke="#8c6a3c" stroke-opacity=".45" stroke-width=".7"/><circle cx="515.2" cy="183.4" r="4.4" fill="#d3b47e" stroke="#8c6a3c" stroke-opacity=".45" stroke-width=".7"/><circle cx="559.8" cy="221.0" r="6.0" fill="#b99459" stroke="#8c6a3c" stroke-opacity=".45" stroke-width=".7"/><circle cx="544.2" cy="224.3" r="3.7" fill="#b99459" stroke="#8c6a3c" stroke-opacity=".45" stroke-width=".7"/><circle cx="556.6" cy="235.9" r="3.8" fill="#bf9b62" stroke="#8c6a3c" stroke-opacity=".45" stroke-width=".7"/><circle cx="525.4" cy="189.7" r="4.9" fill="#b99459" stroke="#8c6a3c" stroke-opacity=".45" stroke-width=".7"/><circle cx="529.8" cy="167.7" r="3.9" fill="#bf9b62" stroke="#8c6a3c" stroke-opacity=".45" stroke-width=".7"/><circle cx="592.8" cy="203.7" r="5.6" fill="#d8bc88" stroke="#8c6a3c" stroke-opacity=".45" stroke-width=".7"/><circle cx="572.0" cy="199.9" r="3.5" fill="#bf9b62" stroke="#8c6a3c" stroke-opacity=".45" stroke-width=".7"/><circle cx="575.4" cy="206.5" r="5.2" fill="#c9a86f" stroke="#8c6a3c" stroke-opacity=".45" stroke-width=".7"/><circle cx="595.4" cy="162.4" r="5.3" fill="#b99459" stroke="#8c6a3c" stroke-opacity=".45" stroke-width=".7"/><ellipse cx="602.9" cy="156.0" rx="8.3" ry="4.0" transform="rotate(158 602.9 156.0)" fill="#bf9b62" stroke="#8c6a3c" stroke-opacity=".45" stroke-width=".7"/><circle cx="553.6" cy="173.5" r="4.3" fill="#c9a86f" stroke="#8c6a3c" stroke-opacity=".45" stroke-width=".7"/><circle cx="575.4" cy="184.4" r="3.7" fill="#c9a86f" stroke="#8c6a3c" stroke-opacity=".45" stroke-width=".7"/><ellipse cx="539.6" cy="207.9" rx="9.0" ry="4.0" transform="rotate(25 539.6 207.9)" fill="#d8bc88" stroke="#8c6a3c" stroke-opacity=".45" stroke-width=".7"/><ellipse cx="543.9" cy="201.0" rx="9.0" ry="3.8" transform="rotate(48 543.9 201.0)" fill="#d3b47e" stroke="#8c6a3c" stroke-opacity=".45" stroke-width=".7"/><circle cx="585.2" cy="179.0" r="4.2" fill="#bf9b62" stroke="#8c6a3c" stroke-opacity=".45" stroke-width=".7"/><circle cx="526.7" cy="246.2" r="5.3" fill="#bf9b62" stroke="#8c6a3c" stroke-opacity=".45" stroke-width=".7"/><ellipse cx="590.4" cy="134.8" rx="10.4" ry="3.9" transform="rotate(114 590.4 134.8)" fill="#d3b47e" stroke="#8c6a3c" stroke-opacity=".45" stroke-width=".7"/><ellipse cx="531.8" cy="210.0" rx="10.5" ry="3.5" transform="rotate(154 531.8 210.0)" fill="#bf9b62" stroke="#8c6a3c" stroke-opacity=".45" stroke-width=".7"/><ellipse cx="514.2" cy="167.2" rx="7.7" ry="4.4" transform="rotate(54 514.2 167.2)" fill="#d8bc88" stroke="#8c6a3c" stroke-opacity=".45" stroke-width=".7"/><ellipse cx="555.2" cy="133.9" rx="10.8" ry="3.8" transform="rotate(76 555.2 133.9)" fill="#d8bc88" stroke="#8c6a3c" stroke-opacity=".45" stroke-width=".7"/><circle cx="520.1" cy="170.8" r="3.8" fill="#d3b47e" stroke="#8c6a3c" stroke-opacity=".45" stroke-width=".7"/><ellipse cx="605.6" cy="135.4" rx="9.7" ry="3.6" transform="rotate(118 605.6 135.4)" fill="#b99459" stroke="#8c6a3c" stroke-opacity=".45" stroke-width=".7"/><ellipse cx="545.1" cy="236.4" rx="10.7" ry="3.6" transform="rotate(93 545.1 236.4)" fill="#d3b47e" stroke="#8c6a3c" stroke-opacity=".45" stroke-width=".7"/><ellipse cx="520.5" cy="235.0" rx="10.4" ry="4.0" transform="rotate(55 520.5 235.0)" fill="#b99459" stroke="#8c6a3c" stroke-opacity=".45" stroke-width=".7"/><circle cx="516.8" cy="198.1" r="4.1" fill="#b99459" stroke="#8c6a3c" stroke-opacity=".45" stroke-width=".7"/><circle cx="489.9" cy="208.9" r="5.4" fill="#d8bc88" stroke="#8c6a3c" stroke-opacity=".45" stroke-width=".7"/><circle cx="574.1" cy="138.2" r="5.9" fill="#c9a86f" stroke="#8c6a3c" stroke-opacity=".45" stroke-width=".7"/><ellipse cx="605.7" cy="182.7" rx="7.4" ry="3.7" transform="rotate(30 605.7 182.7)" fill="#c9a86f" stroke="#8c6a3c" stroke-opacity=".45" stroke-width=".7"/><ellipse cx="489.3" cy="218.9" rx="9.5" ry="4.0" transform="rotate(159 489.3 218.9)" fill="#d3b47e" stroke="#8c6a3c" stroke-opacity=".45" stroke-width=".7"/><circle cx="562.2" cy="198.4" r="4.3" fill="#c9a86f" stroke="#8c6a3c" stroke-opacity=".45" stroke-width=".7"/><circle cx="571.6" cy="210.4" r="4.8" fill="#d8bc88" stroke="#8c6a3c" stroke-opacity=".45" stroke-width=".7"/><circle cx="573.9" cy="205.6" r="3.8" fill="#d3b47e" stroke="#8c6a3c" stroke-opacity=".45" stroke-width=".7"/><ellipse cx="538.7" cy="178.3" rx="10.8" ry="3.0" transform="rotate(35 538.7 178.3)" fill="#c9a86f" stroke="#8c6a3c" stroke-opacity=".45" stroke-width=".7"/><circle cx="551.6" cy="141.8" r="4.6" fill="#d8bc88" stroke="#8c6a3c" stroke-opacity=".45" stroke-width=".7"/><ellipse cx="523.3" cy="223.7" rx="10.2" ry="3.0" transform="rotate(124 523.3 223.7)" fill="#b99459" stroke="#8c6a3c" stroke-opacity=".45" stroke-width=".7"/><circle cx="568.8" cy="212.2" r="5.4" fill="#b99459" stroke="#8c6a3c" stroke-opacity=".45" stroke-width=".7"/><circle cx="560.8" cy="187.4" r="3.9" fill="#d3b47e" stroke="#8c6a3c" stroke-opacity=".45" stroke-width=".7"/><circle cx="490.8" cy="191.5" r="4.5" fill="#d8bc88" stroke="#8c6a3c" stroke-opacity=".45" stroke-width=".7"/><circle cx="581.8" cy="151.7" r="4.0" fill="#bf9b62" stroke="#8c6a3c" stroke-opacity=".45" stroke-width=".7"/><ellipse cx="636.8" cy="172.4" rx="8.5" ry="3.9" transform="rotate(132 636.8 172.4)" fill="#b99459" stroke="#8c6a3c" stroke-opacity=".45" stroke-width=".7"/><circle cx="603.5" cy="182.6" r="4.8" fill="#d3b47e" stroke="#8c6a3c" stroke-opacity=".45" stroke-width=".7"/><ellipse cx="547.0" cy="146.1" rx="8.8" ry="4.2" transform="rotate(82 547.0 146.1)" fill="#c9a86f" stroke="#8c6a3c" stroke-opacity=".45" stroke-width=".7"/><circle cx="549.5" cy="193.6" r="5.2" fill="#d3b47e" stroke="#8c6a3c" stroke-opacity=".45" stroke-width=".7"/><circle cx="575.6" cy="185.5" r="5.3" fill="#b99459" stroke="#8c6a3c" stroke-opacity=".45" stroke-width=".7"/><circle cx="515.6" cy="223.2" r="5.4" fill="#d8bc88" stroke="#8c6a3c" stroke-opacity=".45" stroke-width=".7"/><circle cx="642.5" cy="158.2" r="5.2" fill="#b99459" stroke="#8c6a3c" stroke-opacity=".45" stroke-width=".7"/><circle cx="537.9" cy="213.3" r="5.3" fill="#b99459" stroke="#8c6a3c" stroke-opacity=".45" stroke-width=".7"/><circle cx="543.1" cy="146.3" r="5.3" fill="#bf9b62" stroke="#8c6a3c" stroke-opacity=".45" stroke-width=".7"/><circle cx="488.9" cy="209.6" r="5.5" fill="#b99459" stroke="#8c6a3c" stroke-opacity=".45" stroke-width=".7"/><ellipse cx="578.4" cy="145.0" rx="7.4" ry="3.0" transform="rotate(77 578.4 145.0)" fill="#b99459" stroke="#8c6a3c" stroke-opacity=".45" stroke-width=".7"/><circle cx="618.1" cy="165.6" r="4.4" fill="#d3b47e" stroke="#8c6a3c" stroke-opacity=".45" stroke-width=".7"/><circle cx="529.0" cy="245.6" r="4.6" fill="#bf9b62" stroke="#8c6a3c" stroke-opacity=".45" stroke-width=".7"/><circle cx="561.1" cy="143.4" r="5.9" fill="#d8bc88" stroke="#8c6a3c" stroke-opacity=".45" stroke-width=".7"/><circle cx="479.0" cy="192.5" r="3.7" fill="#b99459" stroke="#8c6a3c" stroke-opacity=".45" stroke-width=".7"/><circle cx="583.8" cy="163.9" r="4.5" fill="#d3b47e" stroke="#8c6a3c" stroke-opacity=".45" stroke-width=".7"/><ellipse cx="519.6" cy="241.5" rx="7.5" ry="3.8" transform="rotate(122 519.6 241.5)" fill="#d3b47e" stroke="#8c6a3c" stroke-opacity=".45" stroke-width=".7"/><ellipse cx="473.8" cy="210.6" rx="8.9" ry="3.7" transform="rotate(92 473.8 210.6)" fill="#d3b47e" stroke="#8c6a3c" stroke-opacity=".45" stroke-width=".7"/><circle cx="587.5" cy="153.8" r="5.0" fill="#bf9b62" stroke="#8c6a3c" stroke-opacity=".45" stroke-width=".7"/><ellipse cx="537.4" cy="141.8" rx="7.8" ry="4.0" transform="rotate(62 537.4 141.8)" fill="#d8bc88" stroke="#8c6a3c" stroke-opacity=".45" stroke-width=".7"/><circle cx="623.6" cy="165.9" r="5.8" fill="#d8bc88" stroke="#8c6a3c" stroke-opacity=".45" stroke-width=".7"/><circle cx="517.4" cy="184.8" r="4.8" fill="#b99459" stroke="#8c6a3c" stroke-opacity=".45" stroke-width=".7"/><circle cx="476.0" cy="192.0" r="4.0" fill="#d8bc88" stroke="#8c6a3c" stroke-opacity=".45" stroke-width=".7"/><ellipse cx="609.0" cy="179.2" rx="7.6" ry="3.5" transform="rotate(2 609.0 179.2)" fill="#b99459" stroke="#8c6a3c" stroke-opacity=".45" stroke-width=".7"/><ellipse cx="567.0" cy="203.3" rx="9.5" ry="3.4" transform="rotate(15 567.0 203.3)" fill="#d3b47e" stroke="#8c6a3c" stroke-opacity=".45" stroke-width=".7"/><circle cx="545.7" cy="142.1" r="6.0" fill="#bf9b62" stroke="#8c6a3c" stroke-opacity=".45" stroke-width=".7"/><circle cx="566.3" cy="175.5" r="5.6" fill="#d8bc88" stroke="#8c6a3c" stroke-opacity=".45" stroke-width=".7"/><circle cx="492.1" cy="186.9" r="3.7" fill="#bf9b62" stroke="#8c6a3c" stroke-opacity=".45" stroke-width=".7"/><circle cx="542.0" cy="158.1" r="5.9" fill="#bf9b62" stroke="#8c6a3c" stroke-opacity=".45" stroke-width=".7"/><ellipse cx="532.9" cy="241.5" rx="9.9" ry="3.7" transform="rotate(135 532.9 241.5)" fill="#bf9b62" stroke="#8c6a3c" stroke-opacity=".45" stroke-width=".7"/><ellipse cx="537.0" cy="252.3" rx="7.6" ry="4.4" transform="rotate(35 537.0 252.3)" fill="#d8bc88" stroke="#8c6a3c" stroke-opacity=".45" stroke-width=".7"/><ellipse cx="557.1" cy="135.9" rx="9.6" ry="3.4" transform="rotate(147 557.1 135.9)" fill="#d8bc88" stroke="#8c6a3c" stroke-opacity=".45" stroke-width=".7"/><ellipse cx="553.9" cy="202.1" rx="9.2" ry="3.1" transform="rotate(20 553.9 202.1)" fill="#b99459" stroke="#8c6a3c" stroke-opacity=".45" stroke-width=".7"/><ellipse cx="522.7" cy="168.7" rx="8.1" ry="3.8" transform="rotate(90 522.7 168.7)" fill="#d3b47e" stroke="#8c6a3c" stroke-opacity=".45" stroke-width=".7"/><circle cx="500.4" cy="184.2" r="5.4" fill="#d3b47e" stroke="#8c6a3c" stroke-opacity=".45" stroke-width=".7"/><ellipse cx="635.0" cy="169.2" rx="8.1" ry="3.1" transform="rotate(30 635.0 169.2)" fill="#bf9b62" stroke="#8c6a3c" stroke-opacity=".45" stroke-width=".7"/><circle cx="491.7" cy="221.9" r="5.4" fill="#d8bc88" stroke="#8c6a3c" stroke-opacity=".45" stroke-width=".7"/><circle cx="548.2" cy="152.2" r="5.3" fill="#d3b47e" stroke="#8c6a3c" stroke-opacity=".45" stroke-width=".7"/><circle cx="531.6" cy="201.0" r="5.2" fill="#bf9b62" stroke="#8c6a3c" stroke-opacity=".45" stroke-width=".7"/><circle cx="525.8" cy="157.3" r="5.5" fill="#c9a86f" stroke="#8c6a3c" stroke-opacity=".45" stroke-width=".7"/><ellipse cx="497.4" cy="214.0" rx="7.6" ry="4.1" transform="rotate(151 497.4 214.0)" fill="#b99459" stroke="#8c6a3c" stroke-opacity=".45" stroke-width=".7"/><circle cx="490.5" cy="205.7" r="5.3" fill="#b99459" stroke="#8c6a3c" stroke-opacity=".45" stroke-width=".7"/><circle cx="578.8" cy="217.8" r="5.0" fill="#d3b47e" stroke="#8c6a3c" stroke-opacity=".45" stroke-width=".7"/><circle cx="587.8" cy="210.5" r="4.8" fill="#b99459" stroke="#8c6a3c" stroke-opacity=".45" stroke-width=".7"/><ellipse cx="619.0" cy="162.2" rx="10.1" ry="3.6" transform="rotate(29 619.0 162.2)" fill="#b99459" stroke="#8c6a3c" stroke-opacity=".45" stroke-width=".7"/><circle cx="574.3" cy="167.2" r="4.9" fill="#c9a86f" stroke="#8c6a3c" stroke-opacity=".45" stroke-width=".7"/><ellipse cx="553.7" cy="161.1" rx="8.1" ry="4.2" transform="rotate(129 553.7 161.1)" fill="#d3b47e" stroke="#8c6a3c" stroke-opacity=".45" stroke-width=".7"/><circle cx="509.9" cy="210.5" r="5.1" fill="#bf9b62" stroke="#8c6a3c" stroke-opacity=".45" stroke-width=".7"/><circle cx="512.0" cy="247.0" r="3.7" fill="#d8bc88" stroke="#8c6a3c" stroke-opacity=".45" stroke-width=".7"/><circle cx="536.0" cy="246.5" r="3.7" fill="#d8bc88" stroke="#8c6a3c" stroke-opacity=".45" stroke-width=".7"/><ellipse cx="572.9" cy="147.8" rx="8.5" ry="3.9" transform="rotate(123 572.9 147.8)" fill="#bf9b62" stroke="#8c6a3c" stroke-opacity=".45" stroke-width=".7"/><circle cx="575.9" cy="214.8" r="5.3" fill="#d8bc88" stroke="#8c6a3c" stroke-opacity=".45" stroke-width=".7"/><circle cx="593.2" cy="152.0" r="5.2" fill="#b99459" stroke="#8c6a3c" stroke-opacity=".45" stroke-width=".7"/><circle cx="538.1" cy="187.6" r="4.7" fill="#c9a86f" stroke="#8c6a3c" stroke-opacity=".45" stroke-width=".7"/><ellipse cx="520.2" cy="221.1" rx="9.6" ry="3.8" transform="rotate(140 520.2 221.1)" fill="#c9a86f" stroke="#8c6a3c" stroke-opacity=".45" stroke-width=".7"/><circle cx="486.2" cy="188.6" r="3.9" fill="#b99459" stroke="#8c6a3c" stroke-opacity=".45" stroke-width=".7"/><circle cx="542.7" cy="145.3" r="4.3" fill="#d3b47e" stroke="#8c6a3c" stroke-opacity=".45" stroke-width=".7"/><circle cx="605.8" cy="195.0" r="5.7" fill="#b99459" stroke="#8c6a3c" stroke-opacity=".45" stroke-width=".7"/><ellipse cx="552.8" cy="189.6" rx="9.3" ry="3.0" transform="rotate(139 552.8 189.6)" fill="#b99459" stroke="#8c6a3c" stroke-opacity=".45" stroke-width=".7"/><ellipse cx="563.3" cy="155.2" rx="8.8" ry="3.1" transform="rotate(120 563.3 155.2)" fill="#bf9b62" stroke="#8c6a3c" stroke-opacity=".45" stroke-width=".7"/><circle cx="502.8" cy="178.3" r="3.5" fill="#c9a86f" stroke="#8c6a3c" stroke-opacity=".45" stroke-width=".7"/><circle cx="518.4" cy="228.9" r="6.0" fill="#bf9b62" stroke="#8c6a3c" stroke-opacity=".45" stroke-width=".7"/><ellipse cx="478.0" cy="198.9" rx="8.1" ry="3.2" transform="rotate(94 478.0 198.9)" fill="#bf9b62" stroke="#8c6a3c" stroke-opacity=".45" stroke-width=".7"/><ellipse cx="608.8" cy="134.0" rx="10.7" ry="3.3" transform="rotate(26 608.8 134.0)" fill="#d8bc88" stroke="#8c6a3c" stroke-opacity=".45" stroke-width=".7"/><ellipse cx="540.8" cy="212.1" rx="11.0" ry="4.1" transform="rotate(47 540.8 212.1)" fill="#d8bc88" stroke="#8c6a3c" stroke-opacity=".45" stroke-width=".7"/><circle cx="539.9" cy="193.4" r="5.3" fill="#d8bc88" stroke="#8c6a3c" stroke-opacity=".45" stroke-width=".7"/><circle cx="569.9" cy="210.7" r="4.8" fill="#b99459" stroke="#8c6a3c" stroke-opacity=".45" stroke-width=".7"/><circle cx="558.1" cy="171.4" r="3.6" fill="#c9a86f" stroke="#8c6a3c" stroke-opacity=".45" stroke-width=".7"/><ellipse cx="576.6" cy="178.1" rx="8.3" ry="3.7" transform="rotate(42 576.6 178.1)" fill="#d8bc88" stroke="#8c6a3c" stroke-opacity=".45" stroke-width=".7"/><ellipse cx="569.0" cy="160.7" rx="10.7" ry="4.0" transform="rotate(160 569.0 160.7)" fill="#d8bc88" stroke="#8c6a3c" stroke-opacity=".45" stroke-width=".7"/><circle cx="492.8" cy="182.7" r="5.7" fill="#d8bc88" stroke="#8c6a3c" stroke-opacity=".45" stroke-width=".7"/><circle cx="543.4" cy="142.3" r="5.7" fill="#bf9b62" stroke="#8c6a3c" stroke-opacity=".45" stroke-width=".7"/><circle cx="520.0" cy="251.2" r="5.3" fill="#b99459" stroke="#8c6a3c" stroke-opacity=".45" stroke-width=".7"/><circle cx="524.7" cy="168.3" r="4.5" fill="#c9a86f" stroke="#8c6a3c" stroke-opacity=".45" stroke-width=".7"/><circle cx="536.9" cy="205.4" r="5.9" fill="#d8bc88" stroke="#8c6a3c" stroke-opacity=".45" stroke-width=".7"/><circle cx="495.7" cy="224.7" r="4.7" fill="#b99459" stroke="#8c6a3c" stroke-opacity=".45" stroke-width=".7"/><circle cx="596.7" cy="180.2" r="4.5" fill="#c9a86f" stroke="#8c6a3c" stroke-opacity=".45" stroke-width=".7"/><circle cx="566.2" cy="173.1" r="4.4" fill="#bf9b62" stroke="#8c6a3c" stroke-opacity=".45" stroke-width=".7"/><circle cx="537.2" cy="158.9" r="3.9" fill="#bf9b62" stroke="#8c6a3c" stroke-opacity=".45" stroke-width=".7"/><circle cx="500.4" cy="210.4" r="3.7" fill="#bf9b62" stroke="#8c6a3c" stroke-opacity=".45" stroke-width=".7"/><ellipse cx="510.1" cy="211.1" rx="9.4" ry="3.2" transform="rotate(144 510.1 211.1)" fill="#b99459" stroke="#8c6a3c" stroke-opacity=".45" stroke-width=".7"/><ellipse cx="603.0" cy="192.4" rx="7.1" ry="3.0" transform="rotate(46 603.0 192.4)" fill="#b99459" stroke="#8c6a3c" stroke-opacity=".45" stroke-width=".7"/><circle cx="587.0" cy="170.2" r="5.7" fill="#d8bc88" stroke="#8c6a3c" stroke-opacity=".45" stroke-width=".7"/><circle cx="479.9" cy="194.2" r="6.0" fill="#c9a86f" stroke="#8c6a3c" stroke-opacity=".45" stroke-width=".7"/><circle cx="519.2" cy="218.9" r="5.3" fill="#c9a86f" stroke="#8c6a3c" stroke-opacity=".45" stroke-width=".7"/><ellipse cx="513.2" cy="207.4" rx="8.3" ry="4.5" transform="rotate(48 513.2 207.4)" fill="#d8bc88" stroke="#8c6a3c" stroke-opacity=".45" stroke-width=".7"/><circle cx="584.3" cy="186.4" r="4.1" fill="#b99459" stroke="#8c6a3c" stroke-opacity=".45" stroke-width=".7"/><circle cx="536.2" cy="211.5" r="6.0" fill="#d3b47e" stroke="#8c6a3c" stroke-opacity=".45" stroke-width=".7"/><circle cx="553.3" cy="179.3" r="4.3" fill="#d8bc88" stroke="#8c6a3c" stroke-opacity=".45" stroke-width=".7"/><circle cx="584.1" cy="155.8" r="5.1" fill="#b99459" stroke="#8c6a3c" stroke-opacity=".45" stroke-width=".7"/><ellipse cx="594.3" cy="190.0" rx="10.3" ry="4.1" transform="rotate(23 594.3 190.0)" fill="#d3b47e" stroke="#8c6a3c" stroke-opacity=".45" stroke-width=".7"/><circle cx="604.7" cy="174.4" r="3.7" fill="#c9a86f" stroke="#8c6a3c" stroke-opacity=".45" stroke-width=".7"/><circle cx="477.2" cy="193.3" r="6.0" fill="#c9a86f" stroke="#8c6a3c" stroke-opacity=".45" stroke-width=".7"/><circle cx="501.9" cy="223.5" r="4.7" fill="#d8bc88" stroke="#8c6a3c" stroke-opacity=".45" stroke-width=".7"/><circle cx="551.0" cy="171.6" r="3.5" fill="#b99459" stroke="#8c6a3c" stroke-opacity=".45" stroke-width=".7"/><circle cx="579.1" cy="138.2" r="3.6" fill="#d3b47e" stroke="#8c6a3c" stroke-opacity=".45" stroke-width=".7"/><circle cx="552.1" cy="235.7" r="4.7" fill="#bf9b62" stroke="#8c6a3c" stroke-opacity=".45" stroke-width=".7"/><circle cx="543.8" cy="138.8" r="5.1" fill="#bf9b62" stroke="#8c6a3c" stroke-opacity=".45" stroke-width=".7"/><ellipse cx="589.3" cy="129.1" rx="10.8" ry="3.7" transform="rotate(34 589.3 129.1)" fill="#b99459" stroke="#8c6a3c" stroke-opacity=".45" stroke-width=".7"/><circle cx="602.9" cy="168.4" r="4.0" fill="#c9a86f" stroke="#8c6a3c" stroke-opacity=".45" stroke-width=".7"/><ellipse cx="537.4" cy="234.5" rx="10.8" ry="3.9" transform="rotate(110 537.4 234.5)" fill="#d8bc88" stroke="#8c6a3c" stroke-opacity=".45" stroke-width=".7"/><circle cx="507.4" cy="189.6" r="3.7" fill="#d3b47e" stroke="#8c6a3c" stroke-opacity=".45" stroke-width=".7"/><ellipse cx="625.1" cy="143.9" rx="7.3" ry="3.0" transform="rotate(159 625.1 143.9)" fill="#b99459" stroke="#8c6a3c" stroke-opacity=".45" stroke-width=".7"/><circle cx="616.1" cy="186.7" r="4.1" fill="#d3b47e" stroke="#8c6a3c" stroke-opacity=".45" stroke-width=".7"/><circle cx="566.6" cy="203.2" r="5.9" fill="#c9a86f" stroke="#8c6a3c" stroke-opacity=".45" stroke-width=".7"/><ellipse cx="598.1" cy="174.3" rx="10.7" ry="3.7" transform="rotate(158 598.1 174.3)" fill="#d8bc88" stroke="#8c6a3c" stroke-opacity=".45" stroke-width=".7"/><ellipse cx="625.7" cy="143.9" rx="10.9" ry="3.5" transform="rotate(57 625.7 143.9)" fill="#b99459" stroke="#8c6a3c" stroke-opacity=".45" stroke-width=".7"/><circle cx="591.5" cy="145.4" r="4.7" fill="#d8bc88" stroke="#8c6a3c" stroke-opacity=".45" stroke-width=".7"/><circle cx="599.8" cy="170.7" r="5.9" fill="#d3b47e" stroke="#8c6a3c" stroke-opacity=".45" stroke-width=".7"/><circle cx="636.5" cy="151.5" r="4.1" fill="#d8bc88" stroke="#8c6a3c" stroke-opacity=".45" stroke-width=".7"/><circle cx="580.9" cy="147.8" r="3.6" fill="#d8bc88" stroke="#8c6a3c" stroke-opacity=".45" stroke-width=".7"/><circle cx="568.8" cy="165.3" r="5.0" fill="#b99459" stroke="#8c6a3c" stroke-opacity=".45" stroke-width=".7"/><ellipse cx="546.4" cy="189.9" rx="10.3" ry="3.9" transform="rotate(130 546.4 189.9)" fill="#b99459" stroke="#8c6a3c" stroke-opacity=".45" stroke-width=".7"/><circle cx="616.4" cy="149.4" r="5.9" fill="#d8bc88" stroke="#8c6a3c" stroke-opacity=".45" stroke-width=".7"/><circle cx="523.1" cy="237.2" r="4.0" fill="#b99459" stroke="#8c6a3c" stroke-opacity=".45" stroke-width=".7"/><circle cx="574.1" cy="156.2" r="4.2" fill="#b99459" stroke="#8c6a3c" stroke-opacity=".45" stroke-width=".7"/><circle cx="539.2" cy="173.3" r="4.6" fill="#d8bc88" stroke="#8c6a3c" stroke-opacity=".45" stroke-width=".7"/><circle cx="525.6" cy="237.3" r="4.2" fill="#d8bc88" stroke="#8c6a3c" stroke-opacity=".45" stroke-width=".7"/><circle cx="524.1" cy="191.6" r="5.5" fill="#c9a86f" stroke="#8c6a3c" stroke-opacity=".45" stroke-width=".7"/><circle cx="589.9" cy="209.4" r="5.0" fill="#b99459" stroke="#8c6a3c" stroke-opacity=".45" stroke-width=".7"/><ellipse cx="531.9" cy="199.1" rx="9.6" ry="3.8" transform="rotate(5 531.9 199.1)" fill="#b99459" stroke="#8c6a3c" stroke-opacity=".45" stroke-width=".7"/><circle cx="606.5" cy="168.8" r="4.8" fill="#b99459" stroke="#8c6a3c" stroke-opacity=".45" stroke-width=".7"/><circle cx="565.9" cy="214.4" r="4.0" fill="#c9a86f" stroke="#8c6a3c" stroke-opacity=".45" stroke-width=".7"/><circle cx="492.2" cy="179.3" r="6.0" fill="#d8bc88" stroke="#8c6a3c" stroke-opacity=".45" stroke-width=".7"/><ellipse cx="537.5" cy="194.4" rx="9.4" ry="3.0" transform="rotate(142 537.5 194.4)" fill="#c9a86f" stroke="#8c6a3c" stroke-opacity=".45" stroke-width=".7"/><circle cx="506.9" cy="239.5" r="4.6" fill="#d3b47e" stroke="#8c6a3c" stroke-opacity=".45" stroke-width=".7"/><circle cx="561.8" cy="232.4" r="5.3" fill="#c9a86f" stroke="#8c6a3c" stroke-opacity=".45" stroke-width=".7"/><circle cx="542.4" cy="209.4" r="3.7" fill="#bf9b62" stroke="#8c6a3c" stroke-opacity=".45" stroke-width=".7"/><ellipse cx="589.2" cy="180.2" rx="10.4" ry="4.0" transform="rotate(168 589.2 180.2)" fill="#d8bc88" stroke="#8c6a3c" stroke-opacity=".45" stroke-width=".7"/><circle cx="549.1" cy="235.7" r="4.7" fill="#d3b47e" stroke="#8c6a3c" stroke-opacity=".45" stroke-width=".7"/><ellipse cx="520.5" cy="186.1" rx="8.1" ry="4.4" transform="rotate(152 520.5 186.1)" fill="#c9a86f" stroke="#8c6a3c" stroke-opacity=".45" stroke-width=".7"/><circle cx="574.6" cy="203.0" r="4.5" fill="#d8bc88" stroke="#8c6a3c" stroke-opacity=".45" stroke-width=".7"/><circle cx="547.6" cy="197.4" r="5.7" fill="#b99459" stroke="#8c6a3c" stroke-opacity=".45" stroke-width=".7"/><ellipse cx="505.8" cy="233.0" rx="8.3" ry="4.3" transform="rotate(63 505.8 233.0)" fill="#d8bc88" stroke="#8c6a3c" stroke-opacity=".45" stroke-width=".7"/><circle cx="540.8" cy="239.1" r="5.9" fill="#c9a86f" stroke="#8c6a3c" stroke-opacity=".45" stroke-width=".7"/><circle cx="591.9" cy="156.9" r="4.0" fill="#b99459" stroke="#8c6a3c" stroke-opacity=".45" stroke-width=".7"/><circle cx="586.2" cy="201.6" r="3.5" fill="#bf9b62" stroke="#8c6a3c" stroke-opacity=".45" stroke-width=".7"/><circle cx="606.9" cy="167.2" r="4.1" fill="#d8bc88" stroke="#8c6a3c" stroke-opacity=".45" stroke-width=".7"/><circle cx="516.7" cy="190.1" r="5.1" fill="#c9a86f" stroke="#8c6a3c" stroke-opacity=".45" stroke-width=".7"/><circle cx="594.6" cy="191.6" r="5.9" fill="#d8bc88" stroke="#8c6a3c" stroke-opacity=".45" stroke-width=".7"/><ellipse cx="586.7" cy="158.3" rx="8.7" ry="4.0" transform="rotate(157 586.7 158.3)" fill="#b99459" stroke="#8c6a3c" stroke-opacity=".45" stroke-width=".7"/><circle cx="602.5" cy="167.9" r="4.5" fill="#c9a86f" stroke="#8c6a3c" stroke-opacity=".45" stroke-width=".7"/><circle cx="625.3" cy="143.3" r="3.7" fill="#bf9b62" stroke="#8c6a3c" stroke-opacity=".45" stroke-width=".7"/><circle cx="572.6" cy="181.3" r="4.8" fill="#b99459" stroke="#8c6a3c" stroke-opacity=".45" stroke-width=".7"/><circle cx="527.2" cy="177.3" r="4.2" fill="#d3b47e" stroke="#8c6a3c" stroke-opacity=".45" stroke-width=".7"/><circle cx="626.5" cy="142.8" r="4.8" fill="#d8bc88" stroke="#8c6a3c" stroke-opacity=".45" stroke-width=".7"/><ellipse cx="516.1" cy="174.1" rx="7.7" ry="3.4" transform="rotate(154 516.1 174.1)" fill="#bf9b62" stroke="#8c6a3c" stroke-opacity=".45" stroke-width=".7"/><circle cx="524.4" cy="200.8" r="4.1" fill="#d8bc88" stroke="#8c6a3c" stroke-opacity=".45" stroke-width=".7"/><circle cx="581.3" cy="204.3" r="4.7" fill="#b99459" stroke="#8c6a3c" stroke-opacity=".45" stroke-width=".7"/><circle cx="560.2" cy="150.3" r="4.6" fill="#bf9b62" stroke="#8c6a3c" stroke-opacity=".45" stroke-width=".7"/><circle cx="493.0" cy="203.9" r="4.6" fill="#bf9b62" stroke="#8c6a3c" stroke-opacity=".45" stroke-width=".7"/><ellipse cx="579.1" cy="206.9" rx="7.2" ry="3.0" transform="rotate(116 579.1 206.9)" fill="#d8bc88" stroke="#8c6a3c" stroke-opacity=".45" stroke-width=".7"/><ellipse cx="622.8" cy="141.4" rx="7.7" ry="3.7" transform="rotate(60 622.8 141.4)" fill="#c9a86f" stroke="#8c6a3c" stroke-opacity=".45" stroke-width=".7"/><circle cx="489.4" cy="209.0" r="4.5" fill="#b99459" stroke="#8c6a3c" stroke-opacity=".45" stroke-width=".7"/><circle cx="504.9" cy="208.8" r="5.9" fill="#b99459" stroke="#8c6a3c" stroke-opacity=".45" stroke-width=".7"/><circle cx="546.2" cy="154.6" r="3.9" fill="#d3b47e" stroke="#8c6a3c" stroke-opacity=".45" stroke-width=".7"/><circle cx="573.1" cy="218.6" r="5.7" fill="#c9a86f" stroke="#8c6a3c" stroke-opacity=".45" stroke-width=".7"/><circle cx="579.9" cy="180.1" r="5.4" fill="#d8bc88" stroke="#8c6a3c" stroke-opacity=".45" stroke-width=".7"/><circle cx="546.9" cy="144.8" r="4.4" fill="#d8bc88" stroke="#8c6a3c" stroke-opacity=".45" stroke-width=".7"/><circle cx="591.3" cy="158.3" r="5.0" fill="#bf9b62" stroke="#8c6a3c" stroke-opacity=".45" stroke-width=".7"/><ellipse cx="514.3" cy="222.3" rx="10.9" ry="4.4" transform="rotate(172 514.3 222.3)" fill="#d3b47e" stroke="#8c6a3c" stroke-opacity=".45" stroke-width=".7"/><circle cx="494.0" cy="191.1" r="3.6" fill="#bf9b62" stroke="#8c6a3c" stroke-opacity=".45" stroke-width=".7"/><ellipse cx="526.6" cy="155.9" rx="9.0" ry="3.1" transform="rotate(77 526.6 155.9)" fill="#bf9b62" stroke="#8c6a3c" stroke-opacity=".45" stroke-width=".7"/><circle cx="515.3" cy="220.7" r="4.4" fill="#c9a86f" stroke="#8c6a3c" stroke-opacity=".45" stroke-width=".7"/><ellipse cx="575.2" cy="169.9" rx="8.4" ry="4.0" transform="rotate(156 575.2 169.9)" fill="#b99459" stroke="#8c6a3c" stroke-opacity=".45" stroke-width=".7"/><polygon points="519.0,93.0 555.0,65.5 560.0,73.0 524.0,100.0" fill="#f48aa0"/><polygon points="508.0,84.0 549.7,51.5 558.8,64.0 516.3,96.5" fill="#5e0e74"/><polygon points="591.0,206.0 604.0,200.0 617.0,225.0 605.0,232.0" fill="#f26a84"/><polygon points="584.7,180.7 598.8,172.3 663.0,254.0 649.7,265.7" fill="#f76f89"/><circle cx="601.3" cy="189" r="5.8" fill="url(#pur)"/><circle cx="648" cy="249" r="5.8" fill="url(#pur)"/><line x1="877.9" y1="258.3" x2="779.3" y2="126.9" stroke="#3fae5a" stroke-opacity="1" stroke-width="1.2" /><line x1="877.9" y1="258.3" x2="1005.5" y2="155.8" stroke="#c53a3a" stroke-opacity="1" stroke-width="1.2" /><line x1="877.9" y1="258.3" x2="827.7" y2="250.5" stroke="#3a73c5" stroke-opacity="1" stroke-width="1.2" /><line x1="877.9" y1="258.3" x2="874.0" y2="283.4" stroke="#e8a040" stroke-opacity="1" stroke-width="1.2" /><path d="M779.3,126.89999999999998 l8,1 M779.3,126.89999999999998 l0,8" stroke="#3fae5a" stroke-width="1.2"/><path d="M827.7,250.5 l6,-4 M827.7,250.5 l6,3" stroke="#3a73c5" stroke-width="1.2"/><path d="M871,279.4 l3,4 l3,-4" stroke="#e8a040" stroke-width="1.2" fill="none"/><path d="M998.5,156.79999999999995 l7,-1 l-3,6" stroke="#c53a3a" stroke-width="1.2" fill="none"/><polygon points="761.5,388.5 754.0,395.0 746.4,401.3 739.0,412.0 727.7,424.7 706.7,436.4 688.0,441.0 669.3,448.0 646.0,466.7 634.3,480.7 635.5,487.7 685.7,548.4 767.4,539.0 829.2,471.4 828.0,464.4" fill="url(#chk2)"/><line x1="691.0" y1="440.0" x2="774.0" y2="532.0" stroke="#111" stroke-opacity="0.6" stroke-width="0.8" /><line x1="678.0" y1="554.0" x2="826.0" y2="441.0" stroke="#111" stroke-opacity="0.6" stroke-width="0.8" /><g fill="none" stroke="#d7a3e6" stroke-width="1.1" opacity=".95"><ellipse cx="861" cy="424.5" rx="61" ry="67.5" transform="rotate(-6 861 424.5)"/><ellipse cx="863" cy="418.5" rx="42" ry="59.5" transform="rotate(-14 863 418.5)"/><ellipse cx="862.4000000000001" cy="423.4" rx="66" ry="3.5" transform="rotate(-22.6 862.4000000000001 423.4)"/><ellipse cx="863" cy="428" rx="30" ry="34" stroke="#b27ac0"/></g><polygon points="843.0,357.0 881.7,352.3 901.5,455.0 845.5,466.7" fill="none" stroke="#a59cf0" stroke-width="1.2"/><polygon points="856.0,353.5 872.0,351.0 890.0,459.0 856.0,464.0" fill="none" stroke="#a59cf0" stroke-width="1"/><path d="M792.0,376.0 Q790.0,352.0 814.0,350.0 Q838.0,350.0 840.0,374.0 Q838.0,396.0 816.0,400.0 Q794.0,400.0 792.0,376.0Z" fill="#2d4b73"/><ellipse cx="820" cy="375" rx="20" ry="17.0" fill="none" stroke="#7a8ee0" stroke-width=".7" opacity=".6"/><ellipse cx="822" cy="375" rx="15" ry="12.8" fill="none" stroke="#7a8ee0" stroke-width=".7" opacity=".6"/><ellipse cx="823" cy="375" rx="10" ry="8.5" fill="none" stroke="#7a8ee0" stroke-width=".7" opacity=".6"/><path d="M843.0,384.0 Q850.0,389.0 866.0,402.0 Q884.0,429.0 877.0,444.0 Q862.0,429.0 858.0,409.0 Q846.0,394.0 843.0,384.0Z" fill="#2a4a70"/><polygon points="781.0,358.0 791.0,351.0 804.0,368.0 795.0,374.0" fill="#f26a84"/><polygon points="777.4,316.3 792.9,310.5 835.4,370.4 821.9,378.1" fill="#f76f89"/><circle cx="789" cy="322" r="5" fill="url(#pur)"/><circle cx="825.7" cy="363.4" r="5" fill="url(#pur)"/><circle cx="798.0999999999999" cy="469.5" r="15" fill="#f47a8b"/><circle cx="798.0999999999999" cy="469.5" r="8.5" fill="none" stroke="#58106e" stroke-width="3.5"/><polygon points="637.8,621.2 646.8,618.8 654.0,615.2 661.2,611.6 663.6,602.0 667.8,594.0 672.0,598.0 675.0,606.0 676.5,614.0 674.4,623.0 666.0,631.4 654.0,632.0 645.0,633.2 638.4,630.8" fill="#7b8883"/><rect x="636.9" y="607.7" width="3" height="3" fill="#7d8a86" opacity=".8"/><rect x="653.7" y="608.3" width="3" height="3" fill="#7d8a86" opacity=".8"/><rect x="632.1" y="618.5" width="3" height="3" fill="#7d8a86" opacity=".8"/><rect x="675.9" y="624.5" width="3" height="3" fill="#7d8a86" opacity=".8"/><rect x="675.6" y="634.7" width="3" height="3" fill="#7d8a86" opacity=".8"/><rect x="771.5" y="482.5" width="3" height="3" fill="#7d8a86" opacity=".8"/><rect x="778.5" y="478.5" width="3" height="3" fill="#7d8a86" opacity=".8"/><rect x="764.5" y="487.5" width="3" height="3" fill="#7d8a86" opacity=".8"/><rect x="736.5" y="494.5" width="3" height="3" fill="#7d8a86" opacity=".8"/><rect x="721.5" y="504.5" width="3" height="3" fill="#7d8a86" opacity=".8"/><rect x="711.5" y="510.5" width="3" height="3" fill="#7d8a86" opacity=".8"/><rect x="696.5" y="516.5" width="3" height="3" fill="#7d8a86" opacity=".8"/><path d="M706.7,513.4 Q723.0,508.0 741.7,511.0 Q754.0,519.0 758.0,534.0 L762.7,549.0 Q760.0,560.0 751.0,567.0 L716.0,606.7 Q706.0,615.0 695.0,614.9 Q683.0,614.0 675.0,606.0 Q666.0,594.0 670.0,579.0 Q678.0,566.0 688.0,562.4 Q689.0,554.0 690.3,546.0 Q690.0,529.0 706.7,513.4Z" fill="#f4788b"/><path d="M706.7,513.4 Q690.0,526.0 690.0,546.0 Q689.0,554.0 688.0,562.4 Q676.0,566.0 670.0,579.0 Q666.0,594.0 675.0,606.0 L680.0,610.0 Q673.0,594.0 682.0,579.0 Q693.0,569.0 700.0,564.0 Q698.0,544.0 701.0,529.0 Q708.0,519.0 718.0,512.0 Z" fill="#f59ca8" opacity=".75"/><circle cx="733.7" cy="530.1" r="8.4" fill="url(#pur)"/><ellipse cx="697" cy="565" rx="3.5" ry="2.2" transform="rotate(40 697 565)" fill="#5a1070"/></svg>
<div class="a" style="left:262px;top:406px;width:76.19999999999999px;height:663px;background:rgba(0,0,0,.22);"></div>
<div class="a" style="left:1514.2px;top:406px;width:75.79999999999995px;height:663px;background:rgba(0,0,0,.22);"></div>
<div class="a" style="left:261px;top:405px;width:1330px;height:665px;border:1.3px solid #6c6c6c"></div>
<div class="a" style="left:265.3px;top:409.3px;width:79.5px;height:17.19999999999999px;background:rgba(30,30,30,.35);border-radius:3px"></div>
<div class="a t" style="left:268.6px;top:412.1px;font-size:13.8px;color:#e0e0e0;-webkit-text-stroke:0.25px #e0e0e0;">Perspective</div>
<div class="a" style="left:862px;top:409.3px;width:123px;height:17.19999999999999px;background:rgba(30,30,30,.3);border-radius:3px"></div>
<div class="a t" style="left:866px;top:412.1px;font-size:13.8px;color:#e0e0e0;-webkit-text-stroke:0.25px #e0e0e0;">Camera</div>
<svg class="a" style="left:965px;top:411px" width="18" height="14" viewBox="0 0 18 14"><circle cx="4" cy="3.5" r="2.6" fill="#c4dcf5" stroke="#111" stroke-width="1"/><circle cx="10" cy="3.5" r="2.6" fill="#c4dcf5" stroke="#111" stroke-width="1"/><rect x="2" y="7" width="11" height="6" rx="1" fill="#111"/><path d="M13 10 L17 7.5 L17 12.5 Z" fill="#111"/><rect x="4" y="8.5" width="3" height="2.5" fill="#c4dcf5"/></svg>
<svg class="a" style="left:1515px;top:410px" width="70" height="45" viewBox="0 0 70 45"><path d="M33.4 37.4 L19.6 20.6" stroke="#2bc45f" stroke-width="1.5"/><path d="M33.4 37.4 L29 33" stroke="#2b7fe0" stroke-width="1.5"/><path d="M33.4 37.4 L49.6 23.9" stroke="#e03a3a" stroke-width="1.5"/><text x="8.5" y="18" font-family="Liberation Sans" font-weight="bold" font-size="11.5" fill="#2bc45f">Y</text><text x="52" y="22" font-family="Liberation Sans" font-weight="bold" font-size="11.5" fill="#e33">X</text><text x="16.5" y="33.5" font-family="Liberation Sans" font-size="11.5" fill="#2b7fe0">Z</text></svg>
<div class="a" style="left:1419px;top:1045.5px;width:170px;height:21.5px;background:rgba(30,30,30,.3);border-radius:3px 0 0 0"></div>
<div class="a t" style="left:1424.6px;top:1048.8px;font-size:13.2px;color:#dedede;-webkit-text-stroke:0.25px #dedede;transform:scaleX(1.078);transform-origin:0 0">Grid Spacing : 500 cm</div>
<svg class="a" style="left:262px;top:1079px" width="6" height="46"><rect x="0.5" y="0" width="1.4" height="1.4" fill="#7a7a7a"/><rect x="0.5" y="4" width="1.4" height="1.4" fill="#7a7a7a"/><rect x="0.5" y="8" width="1.4" height="1.4" fill="#7a7a7a"/><rect x="0.5" y="12" width="1.4" height="1.4" fill="#7a7a7a"/><rect x="0.5" y="16" width="1.4" height="1.4" fill="#7a7a7a"/><rect x="0.5" y="20" width="1.4" height="1.4" fill="#7a7a7a"/><rect x="0.5" y="24" width="1.4" height="1.4" fill="#7a7a7a"/><rect x="0.5" y="28" width="1.4" height="1.4" fill="#7a7a7a"/><rect x="0.5" y="32" width="1.4" height="1.4" fill="#7a7a7a"/><rect x="0.5" y="36" width="1.4" height="1.4" fill="#7a7a7a"/><rect x="0.5" y="40" width="1.4" height="1.4" fill="#7a7a7a"/><rect x="0.5" y="44" width="1.4" height="1.4" fill="#7a7a7a"/><rect x="3.8" y="0" width="1.4" height="1.4" fill="#7a7a7a"/><rect x="3.8" y="4" width="1.4" height="1.4" fill="#7a7a7a"/><rect x="3.8" y="8" width="1.4" height="1.4" fill="#7a7a7a"/><rect x="3.8" y="12" width="1.4" height="1.4" fill="#7a7a7a"/><rect x="3.8" y="16" width="1.4" height="1.4" fill="#7a7a7a"/><rect x="3.8" y="20" width="1.4" height="1.4" fill="#7a7a7a"/><rect x="3.8" y="24" width="1.4" height="1.4" fill="#7a7a7a"/><rect x="3.8" y="28" width="1.4" height="1.4" fill="#7a7a7a"/><rect x="3.8" y="32" width="1.4" height="1.4" fill="#7a7a7a"/><rect x="3.8" y="36" width="1.4" height="1.4" fill="#7a7a7a"/><rect x="3.8" y="40" width="1.4" height="1.4" fill="#7a7a7a"/><rect x="3.8" y="44" width="1.4" height="1.4" fill="#7a7a7a"/></svg>
<svg class="a" style="left:262px;top:1137px" width="6" height="28"><rect x="0.5" y="0" width="1.4" height="1.4" fill="#7a7a7a"/><rect x="0.5" y="4" width="1.4" height="1.4" fill="#7a7a7a"/><rect x="0.5" y="8" width="1.4" height="1.4" fill="#7a7a7a"/><rect x="0.5" y="12" width="1.4" height="1.4" fill="#7a7a7a"/><rect x="0.5" y="16" width="1.4" height="1.4" fill="#7a7a7a"/><rect x="0.5" y="20" width="1.4" height="1.4" fill="#7a7a7a"/><rect x="0.5" y="24" width="1.4" height="1.4" fill="#7a7a7a"/><rect x="3.8" y="0" width="1.4" height="1.4" fill="#7a7a7a"/><rect x="3.8" y="4" width="1.4" height="1.4" fill="#7a7a7a"/><rect x="3.8" y="8" width="1.4" height="1.4" fill="#7a7a7a"/><rect x="3.8" y="12" width="1.4" height="1.4" fill="#7a7a7a"/><rect x="3.8" y="16" width="1.4" height="1.4" fill="#7a7a7a"/><rect x="3.8" y="20" width="1.4" height="1.4" fill="#7a7a7a"/><rect x="3.8" y="24" width="1.4" height="1.4" fill="#7a7a7a"/></svg>
<svg class="a" style="left:262px;top:1070px" width="1240" height="36"><text x="24.6" y="16.7" text-anchor="middle" font-family="Liberation Sans" font-size="13.5" fill="#d5d5d5">0</text><text x="90.3" y="16.7" text-anchor="middle" font-family="Liberation Sans" font-size="13.5" fill="#d5d5d5">5</text><text x="156.0" y="16.7" text-anchor="middle" font-family="Liberation Sans" font-size="13.5" fill="#d5d5d5">10</text><text x="221.7" y="16.7" text-anchor="middle" font-family="Liberation Sans" font-size="13.5" fill="#d5d5d5">15</text><text x="287.4" y="16.7" text-anchor="middle" font-family="Liberation Sans" font-size="13.5" fill="#d5d5d5">20</text><text x="353.1" y="16.7" text-anchor="middle" font-family="Liberation Sans" font-size="13.5" fill="#d5d5d5">25</text><text x="418.8" y="16.7" text-anchor="middle" font-family="Liberation Sans" font-size="13.5" fill="#d5d5d5">30</text><text x="484.5" y="16.7" text-anchor="middle" font-family="Liberation Sans" font-size="13.5" fill="#d5d5d5">35</text><text x="550.2" y="16.7" text-anchor="middle" font-family="Liberation Sans" font-size="13.5" fill="#d5d5d5">40</text><text x="615.9" y="16.7" text-anchor="middle" font-family="Liberation Sans" font-size="13.5" fill="#d5d5d5">45</text><text x="681.6" y="16.7" text-anchor="middle" font-family="Liberation Sans" font-size="13.5" fill="#d5d5d5">50</text><text x="747.4" y="16.7" text-anchor="middle" font-family="Liberation Sans" font-size="13.5" fill="#d5d5d5">55</text><text x="813.1" y="16.7" text-anchor="middle" font-family="Liberation Sans" font-size="13.5" fill="#d5d5d5">60</text><text x="878.8" y="16.7" text-anchor="middle" font-family="Liberation Sans" font-size="13.5" fill="#d5d5d5">65</text><text x="944.5" y="16.7" text-anchor="middle" font-family="Liberation Sans" font-size="13.5" fill="#d5d5d5">70</text><text x="1010.2" y="16.7" text-anchor="middle" font-family="Liberation Sans" font-size="13.5" fill="#d5d5d5">75</text><text x="1075.9" y="16.7" text-anchor="middle" font-family="Liberation Sans" font-size="13.5" fill="#d5d5d5">80</text><text x="1141.6" y="16.7" text-anchor="middle" font-family="Liberation Sans" font-size="13.5" fill="#d5d5d5">85</text><rect x="10" y="23.5" width="1211" height="1.6" fill="#8a8a8a"/><rect x="10.9" y="27.5" width="1.2" height="3.5" fill="#9a9a9a"/><rect x="23.9" y="27" width="1.4" height="5" fill="#aaa"/><rect x="37.1" y="27.5" width="1.2" height="3.5" fill="#9a9a9a"/><rect x="50.3" y="27.5" width="1.2" height="3.5" fill="#9a9a9a"/><rect x="63.4" y="27.5" width="1.2" height="3.5" fill="#9a9a9a"/><rect x="76.6" y="27.5" width="1.2" height="3.5" fill="#9a9a9a"/><rect x="89.6" y="27" width="1.4" height="5" fill="#aaa"/><rect x="102.8" y="27.5" width="1.2" height="3.5" fill="#9a9a9a"/><rect x="116.0" y="27.5" width="1.2" height="3.5" fill="#9a9a9a"/><rect x="129.1" y="27.5" width="1.2" height="3.5" fill="#9a9a9a"/><rect x="142.3" y="27.5" width="1.2" height="3.5" fill="#9a9a9a"/><rect x="155.3" y="27" width="1.4" height="5" fill="#aaa"/><rect x="168.6" y="27.5" width="1.2" height="3.5" fill="#9a9a9a"/><rect x="181.7" y="27.5" width="1.2" height="3.5" fill="#9a9a9a"/><rect x="194.8" y="27.5" width="1.2" height="3.5" fill="#9a9a9a"/><rect x="208.0" y="27.5" width="1.2" height="3.5" fill="#9a9a9a"/><rect x="221.0" y="27" width="1.4" height="5" fill="#aaa"/><rect x="234.3" y="27.5" width="1.2" height="3.5" fill="#9a9a9a"/><rect x="247.4" y="27.5" width="1.2" height="3.5" fill="#9a9a9a"/><rect x="260.5" y="27.5" width="1.2" height="3.5" fill="#9a9a9a"/><rect x="273.7" y="27.5" width="1.2" height="3.5" fill="#9a9a9a"/><rect x="286.7" y="27" width="1.4" height="5" fill="#aaa"/><rect x="300.0" y="27.5" width="1.2" height="3.5" fill="#9a9a9a"/><rect x="313.1" y="27.5" width="1.2" height="3.5" fill="#9a9a9a"/><rect x="326.2" y="27.5" width="1.2" height="3.5" fill="#9a9a9a"/><rect x="339.4" y="27.5" width="1.2" height="3.5" fill="#9a9a9a"/><rect x="352.4" y="27" width="1.4" height="5" fill="#aaa"/><rect x="365.7" y="27.5" width="1.2" height="3.5" fill="#9a9a9a"/><rect x="378.8" y="27.5" width="1.2" height="3.5" fill="#9a9a9a"/><rect x="391.9" y="27.5" width="1.2" height="3.5" fill="#9a9a9a"/><rect x="405.1" y="27.5" width="1.2" height="3.5" fill="#9a9a9a"/><rect x="418.1" y="27" width="1.4" height="5" fill="#aaa"/><rect x="431.4" y="27.5" width="1.2" height="3.5" fill="#9a9a9a"/><rect x="444.5" y="27.5" width="1.2" height="3.5" fill="#9a9a9a"/><rect x="457.7" y="27.5" width="1.2" height="3.5" fill="#9a9a9a"/><rect x="470.8" y="27.5" width="1.2" height="3.5" fill="#9a9a9a"/><rect x="483.8" y="27" width="1.4" height="5" fill="#aaa"/><rect x="497.1" y="27.5" width="1.2" height="3.5" fill="#9a9a9a"/><rect x="510.2" y="27.5" width="1.2" height="3.5" fill="#9a9a9a"/><rect x="523.4" y="27.5" width="1.2" height="3.5" fill="#9a9a9a"/><rect x="536.5" y="27.5" width="1.2" height="3.5" fill="#9a9a9a"/><rect x="549.5" y="27" width="1.4" height="5" fill="#aaa"/><rect x="562.8" y="27.5" width="1.2" height="3.5" fill="#9a9a9a"/><rect x="575.9" y="27.5" width="1.2" height="3.5" fill="#9a9a9a"/><rect x="589.1" y="27.5" width="1.2" height="3.5" fill="#9a9a9a"/><rect x="602.2" y="27.5" width="1.2" height="3.5" fill="#9a9a9a"/><rect x="615.2" y="27" width="1.4" height="5" fill="#aaa"/><rect x="628.5" y="27.5" width="1.2" height="3.5" fill="#9a9a9a"/><rect x="641.6" y="27.5" width="1.2" height="3.5" fill="#9a9a9a"/><rect x="654.8" y="27.5" width="1.2" height="3.5" fill="#9a9a9a"/><rect x="667.9" y="27.5" width="1.2" height="3.5" fill="#9a9a9a"/><rect x="680.9" y="27" width="1.4" height="5" fill="#aaa"/><rect x="694.2" y="27.5" width="1.2" height="3.5" fill="#9a9a9a"/><rect x="707.3" y="27.5" width="1.2" height="3.5" fill="#9a9a9a"/><rect x="720.5" y="27.5" width="1.2" height="3.5" fill="#9a9a9a"/><rect x="733.6" y="27.5" width="1.2" height="3.5" fill="#9a9a9a"/><rect x="746.7" y="27" width="1.4" height="5" fill="#aaa"/><rect x="759.9" y="27.5" width="1.2" height="3.5" fill="#9a9a9a"/><rect x="773.0" y="27.5" width="1.2" height="3.5" fill="#9a9a9a"/><rect x="786.2" y="27.5" width="1.2" height="3.5" fill="#9a9a9a"/><rect x="799.3" y="27.5" width="1.2" height="3.5" fill="#9a9a9a"/><rect x="812.4" y="27" width="1.4" height="5" fill="#aaa"/><rect x="825.6" y="27.5" width="1.2" height="3.5" fill="#9a9a9a"/><rect x="838.7" y="27.5" width="1.2" height="3.5" fill="#9a9a9a"/><rect x="851.9" y="27.5" width="1.2" height="3.5" fill="#9a9a9a"/><rect x="865.0" y="27.5" width="1.2" height="3.5" fill="#9a9a9a"/><rect x="878.1" y="27" width="1.4" height="5" fill="#aaa"/><rect x="891.3" y="27.5" width="1.2" height="3.5" fill="#9a9a9a"/><rect x="904.4" y="27.5" width="1.2" height="3.5" fill="#9a9a9a"/><rect x="917.6" y="27.5" width="1.2" height="3.5" fill="#9a9a9a"/><rect x="930.7" y="27.5" width="1.2" height="3.5" fill="#9a9a9a"/><rect x="943.8" y="27" width="1.4" height="5" fill="#aaa"/><rect x="957.0" y="27.5" width="1.2" height="3.5" fill="#9a9a9a"/><rect x="970.2" y="27.5" width="1.2" height="3.5" fill="#9a9a9a"/><rect x="983.3" y="27.5" width="1.2" height="3.5" fill="#9a9a9a"/><rect x="996.4" y="27.5" width="1.2" height="3.5" fill="#9a9a9a"/><rect x="1009.5" y="27" width="1.4" height="5" fill="#aaa"/><rect x="1022.7" y="27.5" width="1.2" height="3.5" fill="#9a9a9a"/><rect x="1035.9" y="27.5" width="1.2" height="3.5" fill="#9a9a9a"/><rect x="1049.0" y="27.5" width="1.2" height="3.5" fill="#9a9a9a"/><rect x="1062.1" y="27.5" width="1.2" height="3.5" fill="#9a9a9a"/><rect x="1075.2" y="27" width="1.4" height="5" fill="#aaa"/><rect x="1088.4" y="27.5" width="1.2" height="3.5" fill="#9a9a9a"/><rect x="1101.6" y="27.5" width="1.2" height="3.5" fill="#9a9a9a"/><rect x="1114.7" y="27.5" width="1.2" height="3.5" fill="#9a9a9a"/><rect x="1127.8" y="27.5" width="1.2" height="3.5" fill="#9a9a9a"/><rect x="1140.9" y="27" width="1.4" height="5" fill="#aaa"/><rect x="1154.1" y="27.5" width="1.2" height="3.5" fill="#9a9a9a"/><rect x="1167.3" y="27.5" width="1.2" height="3.5" fill="#9a9a9a"/><rect x="1180.4" y="27.5" width="1.2" height="3.5" fill="#9a9a9a"/><rect x="1193.5" y="27.5" width="1.2" height="3.5" fill="#9a9a9a"/><rect x="1206.6" y="27" width="1.4" height="5" fill="#aaa"/><rect x="23.9" y="12" width="1.4" height="20" fill="#cfcfcf"/><rect x="1201.3" y="6" width="10" height="15" fill="#5b8ee0"/><rect x="1206.7" y="21" width="1.2" height="11" fill="#ddd"/><text x="1196.3" y="16.700000000000045" font-family="Liberation Sans" font-size="13.5" fill="#d5d5d5">9</text><rect x="1201.3" y="6" width="10" height="16" fill="#5b8ee0"/><text x="1213.3" y="16.700000000000045" font-family="Liberation Sans" font-size="13.5" fill="#5b8ee0">9</text></svg>
<div class="a" style="left:271.4px;top:1105px;width:98.30000000000001px;height:20px;background:#2f2f2f;border-radius:4px;box-shadow:inset 0 0 0 1px #444"></div>
<div class="a t" style="left:277.4px;top:1108.5px;font-size:13.5px;color:#e0e0e0;-webkit-text-stroke:0.25px #e0e0e0;">0 F</div>
<svg class="a" style="left:358.7px;top:1107px" width="9" height="16" viewBox="0 0 9 16"><path d="M1.5 6 L4.5 2.5 L7.5 6 M1.5 10 L4.5 13.5 L7.5 10" stroke="#8e8e8e" stroke-width="1.2" fill="none"/></svg>
<div class="a" style="left:378.6px;top:1105px;width:1104.4px;height:20px;background:#565656;border-radius:4px"></div>
<div class="a t" style="left:396px;top:1108.5px;font-size:13.5px;color:#e0e0e0;-webkit-text-stroke:0.25px #e0e0e0;">0 F</div>
<div class="a t" style="left:1436px;top:1108.5px;font-size:13.5px;color:#e0e0e0;-webkit-text-stroke:0.25px #e0e0e0;">90 F</div>
<svg class="a" style="left:384px;top:1108px" width="6" height="14"><rect x="0.5" y="0" width="1.3" height="13" fill="#888"/><rect x="3.5" y="0" width="1.3" height="13" fill="#888"/></svg>
<svg class="a" style="left:1472px;top:1108px" width="6" height="14"><rect x="0.5" y="0" width="1.3" height="13" fill="#888"/><rect x="3.5" y="0" width="1.3" height="13" fill="#888"/></svg>
<div class="a" style="left:1492px;top:1078px;width:98px;height:20px;background:#2f2f2f;border-radius:4px;box-shadow:inset 0 0 0 1px #444"></div>
<div class="a t" style="left:1499px;top:1081.5px;font-size:13.5px;color:#e0e0e0;-webkit-text-stroke:0.25px #e0e0e0;">90 F</div>
<svg class="a" style="left:1579px;top:1080px" width="9" height="16" viewBox="0 0 9 16"><path d="M1.5 6 L4.5 2.5 L7.5 6 M1.5 10 L4.5 13.5 L7.5 10" stroke="#8e8e8e" stroke-width="1.2" fill="none"/></svg>
<div class="a" style="left:1492px;top:1105px;width:98px;height:20px;background:#2f2f2f;border-radius:4px;box-shadow:inset 0 0 0 1px #444"></div>
<div class="a t" style="left:1499px;top:1108.5px;font-size:13.5px;color:#e0e0e0;-webkit-text-stroke:0.25px #e0e0e0;">90 F</div>
<svg class="a" style="left:1579px;top:1107px" width="9" height="16" viewBox="0 0 9 16"><path d="M1.5 6 L4.5 2.5 L7.5 6 M1.5 10 L4.5 13.5 L7.5 10" stroke="#8e8e8e" stroke-width="1.2" fill="none"/></svg>
<div class="a" style="left:574.4px;top:1131.2px;width:30.300000000000068px;height:31px;background:#4a4a4a;border-radius:3px"></div>
<svg class="a" style="left:574.4px;top:1131.2px" width="30.300000000000068" height="31" viewBox="0 0 32 32" preserveAspectRatio="none"><rect x="5" y="6" width="22" height="21" rx="2.5" fill="#ececec" stroke="#111" stroke-width="1.5"/><rect x="5" y="6" width="22" height="3" fill="#111"/><path d="M9 22 Q8 18 12 18 L20 11 L22 12 L21 14 L23 14 L22 16 L15 20 Q14 24 10 24 Z" fill="#e07a3a" stroke="#111" stroke-width=".8"/><path d="M32 26 L32 32 L26 32 Z" fill="#a9a9a9"/></svg>
<div class="a" style="left:619.8px;top:1131.2px;width:32.200000000000045px;height:31px;background:#4a4a4a;border-radius:3px"></div>
<svg class="a" style="left:619.8px;top:1131.2px" width="32.200000000000045" height="31" viewBox="0 0 32 32" preserveAspectRatio="none"><rect x="9" y="9" width="3" height="14" fill="#161616"/><path d="M24 9 L13 16 L24 23 Z" fill="#161616"/></svg>
<div class="a" style="left:652.7px;top:1131.2px;width:32.19999999999993px;height:31px;background:#4a4a4a;border-radius:3px"></div>
<svg class="a" style="left:652.7px;top:1131.2px" width="32.19999999999993" height="31" viewBox="0 0 32 32" preserveAspectRatio="none"><rect x="8" y="9" width="3.5" height="14" fill="#eee" stroke="#161616" stroke-width="1"/><path d="M24 9 L13 16 L24 23 Z" fill="#161616"/></svg>
<div class="a" style="left:685.6px;top:1131.2px;width:32.19999999999993px;height:31px;background:#4a4a4a;border-radius:3px"></div>
<svg class="a" style="left:685.6px;top:1131.2px" width="32.19999999999993" height="31" viewBox="0 0 32 32" preserveAspectRatio="none"><path d="M19 9 L8 16 L19 23 Z" fill="#161616"/><rect x="21" y="9" width="3" height="14" fill="#161616"/></svg>
<div class="a" style="left:718.5px;top:1131.2px;width:32.200000000000045px;height:31px;background:#4a4a4a;border-radius:3px"></div>
<svg class="a" style="left:718.5px;top:1131.2px" width="32.200000000000045" height="31" viewBox="0 0 32 32" preserveAspectRatio="none"><path d="M10 7 L25 16 L10 25 Z" fill="#161616"/></svg>
<div class="a" style="left:751.4px;top:1131.2px;width:32.200000000000045px;height:31px;background:#4a4a4a;border-radius:3px"></div>
<svg class="a" style="left:751.4px;top:1131.2px" width="32.200000000000045" height="31" viewBox="0 0 32 32" preserveAspectRatio="none"><rect x="8" y="9" width="3" height="14" fill="#161616"/><path d="M13 9 L24 16 L13 23 Z" fill="#161616"/></svg>
<div class="a" style="left:784.3px;top:1131.2px;width:32.200000000000045px;height:31px;background:#4a4a4a;border-radius:3px"></div>
<svg class="a" style="left:784.3px;top:1131.2px" width="32.200000000000045" height="31" viewBox="0 0 32 32" preserveAspectRatio="none"><path d="M8 9 L19 16 L8 23 Z" fill="#161616"/><rect x="20.5" y="9" width="3.5" height="14" fill="#eee" stroke="#161616" stroke-width="1"/></svg>
<div class="a" style="left:817.2px;top:1131.2px;width:32.19999999999993px;height:31px;background:#4a4a4a;border-radius:3px"></div>
<svg class="a" style="left:817.2px;top:1131.2px" width="32.19999999999993" height="31" viewBox="0 0 32 32" preserveAspectRatio="none"><path d="M8 9 L19 16 L8 23 Z" fill="#161616"/><rect x="20" y="9" width="3" height="14" fill="#161616"/></svg>
<div class="a" style="left:864.2px;top:1131.2px;width:31.09999999999991px;height:31px;background:#4a6b9b;border-radius:3px"></div>
<svg class="a" style="left:864.2px;top:1131.2px" width="31.09999999999991" height="31" viewBox="0 0 32 32" preserveAspectRatio="none"><path d="M10 22 Q4 20 5 14 Q7 8 16 8 Q26 8 27 14 Q28 20 20 22" stroke="#111" stroke-width="3.2" fill="none"/><path d="M22 17 L16 22 L22 26 Z" fill="#111"/><path d="M32 26 L32 32 L26 32 Z" fill="#a9a9a9"/></svg>
<div class="a" style="left:896.5px;top:1131.2px;width:31.5px;height:31px;background:#4a6b9b;border-radius:3px"></div>
<svg class="a" style="left:896.5px;top:1131.2px" width="31.5" height="31" viewBox="0 0 32 32" preserveAspectRatio="none"><rect x="10" y="4" width="12" height="24" fill="#f39a2d" stroke="#111" stroke-width="1.2"/><rect x="10.5" y="5" width="2" height="2" fill="#111"/><rect x="19.5" y="5" width="2" height="2" fill="#111"/><rect x="10.5" y="9" width="2" height="2" fill="#111"/><rect x="19.5" y="9" width="2" height="2" fill="#111"/><rect x="10.5" y="13" width="2" height="2" fill="#111"/><rect x="19.5" y="13" width="2" height="2" fill="#111"/><rect x="10.5" y="17" width="2" height="2" fill="#111"/><rect x="19.5" y="17" width="2" height="2" fill="#111"/><rect x="10.5" y="21" width="2" height="2" fill="#111"/><rect x="19.5" y="21" width="2" height="2" fill="#111"/><rect x="10.5" y="25" width="2" height="2" fill="#111"/><rect x="19.5" y="25" width="2" height="2" fill="#111"/><path d="M13 12 H19 M13 20 H19" stroke="#111" stroke-width="1.2"/><path d="M32 26 L32 32 L26 32 Z" fill="#a9a9a9"/></svg>
<div class="a" style="left:933.6px;top:1131.2px;width:30.199999999999932px;height:31px;background:#4a6b9b;border-radius:3px"></div>
<svg class="a" style="left:933.6px;top:1131.2px" width="30.199999999999932" height="31" viewBox="0 0 32 32" preserveAspectRatio="none"><path d="M5 18 L12 13 L16 10 L16 26 L11 22 L7 24 Z" fill="#111"/><path d="M19 12 Q22 16 19 20 M21 9 Q26 16 21 23 M23 6 Q30 16 23 26" stroke="#111" stroke-width="1.6" fill="none" transform="rotate(-30 16 16)"/></svg>
<div class="a" style="left:978.3px;top:1131.2px;width:32.0px;height:31px;background:#4a4a4a;border-radius:3px"></div>
<svg class="a" style="left:978.3px;top:1131.2px" width="32.0" height="31" viewBox="0 0 32 32" preserveAspectRatio="none"><circle cx="16" cy="16" r="10.5" fill="#6a3a3a" opacity=".85"/><path d="M12 21 L19 14 M17 11 L22 11 L22 15" stroke="#3a2525" stroke-width="2.5" fill="none"/><path d="M32 26 L32 32 L26 32 Z" fill="#a9a9a9"/></svg>
<div class="a" style="left:1011.5px;top:1131.2px;width:32.0px;height:31px;background:#4a4a4a;border-radius:3px"></div>
<svg class="a" style="left:1011.5px;top:1131.2px" width="32.0" height="31" viewBox="0 0 32 32" preserveAspectRatio="none"><circle cx="16" cy="16" r="11" fill="#e85a5a" stroke="#111" stroke-width="2"/><path d="M12 10 Q8 16 12 22 M20 10 Q24 16 20 22" stroke="#111" stroke-width="2.4" fill="none"/></svg>
<div class="a" style="left:1044.7px;top:1131.2px;width:31.09999999999991px;height:31px;background:#4a4a4a;border-radius:3px"></div>
<svg class="a" style="left:1044.7px;top:1131.2px" width="31.09999999999991" height="31" viewBox="0 0 32 32" preserveAspectRatio="none"><circle cx="16" cy="16" r="11" fill="#e85a5a" stroke="#111" stroke-width="2"/><g transform="translate(16,16)"><circle r="4.5" fill="#111"/><rect x="-1.5" y="-7" width="3" height="3.5" fill="#111" transform="rotate(0)"/><rect x="-1.5" y="-7" width="3" height="3.5" fill="#111" transform="rotate(45)"/><rect x="-1.5" y="-7" width="3" height="3.5" fill="#111" transform="rotate(90)"/><rect x="-1.5" y="-7" width="3" height="3.5" fill="#111" transform="rotate(135)"/><rect x="-1.5" y="-7" width="3" height="3.5" fill="#111" transform="rotate(180)"/><rect x="-1.5" y="-7" width="3" height="3.5" fill="#111" transform="rotate(225)"/><rect x="-1.5" y="-7" width="3" height="3.5" fill="#111" transform="rotate(270)"/><rect x="-1.5" y="-7" width="3" height="3.5" fill="#111" transform="rotate(315)"/><circle r="1.6" fill="#e85a5a"/></g></svg>
<div class="a" style="left:1090.0px;top:1131.2px;width:31.799999999999955px;height:31px;background:#4a6b9b;border-radius:3px"></div>
<svg class="a" style="left:1090.0px;top:1131.2px" width="31.799999999999955" height="31" viewBox="0 0 32 32" preserveAspectRatio="none"><path d="M16 5 L19.5 9 L17.5 9 L17.5 14.5 L23 14.5 L23 12.5 L27 16 L23 19.5 L23 17.5 L17.5 17.5 L17.5 23 L19.5 23 L16 27 L12.5 23 L14.5 23 L14.5 17.5 L9 17.5 L9 19.5 L5 16 L9 12.5 L9 14.5 L14.5 14.5 L14.5 9 L12.5 9 Z" fill="#f39a2d" stroke="#111" stroke-width="1"/></svg>
<div class="a" style="left:1122.7px;top:1131.2px;width:31.799999999999955px;height:31px;background:#4a6b9b;border-radius:3px"></div>
<svg class="a" style="left:1122.7px;top:1131.2px" width="31.799999999999955" height="31" viewBox="0 0 32 32" preserveAspectRatio="none"><path d="M8 18 A8 8 0 0 1 20 9 L21 6.5 L23.5 13 L17 12.5 L18.5 11 A5.5 5.5 0 0 0 10.5 18 Z M24 14 A8 8 0 0 1 12 23 L11 25.5 L8.5 19 L15 19.5 L13.5 21 A5.5 5.5 0 0 0 21.5 14 Z" fill="#f39a2d" stroke="#111" stroke-width=".9"/></svg>
<div class="a" style="left:1155.4px;top:1131.2px;width:31.799999999999955px;height:31px;background:#4a6b9b;border-radius:3px"></div>
<svg class="a" style="left:1155.4px;top:1131.2px" width="31.799999999999955" height="31" viewBox="0 0 32 32" preserveAspectRatio="none"><rect x="8" y="8" width="17" height="17" rx="2" fill="#f39a2d" stroke="#111" stroke-width="1.1"/><path d="M8 17 H16 V25 M16 17 L25 8" stroke="#111" stroke-width="1" fill="none"/></svg>
<div class="a" style="left:1188.1px;top:1131.2px;width:31.800000000000182px;height:31px;background:#4a6b9b;border-radius:3px"></div>
<svg class="a" style="left:1188.1px;top:1131.2px" width="31.800000000000182" height="31" viewBox="0 0 32 32" preserveAspectRatio="none"><circle cx="16" cy="16" r="11.5" fill="none" stroke="#111" stroke-width="3"/><circle cx="16" cy="16" r="11.5" fill="none" stroke="#f39a2d" stroke-width="1.8"/><text x="16" y="22" text-anchor="middle" font-family="Liberation Sans" font-weight="bold" font-size="16" fill="#111">P</text></svg>
<div class="a" style="left:1221.5px;top:1131.2px;width:32.5px;height:31px;background:#4a4a4a;border-radius:3px"></div>
<svg class="a" style="left:1221.5px;top:1131.2px" width="32.5" height="31" viewBox="0 0 32 32" preserveAspectRatio="none"><circle cx="8" cy="8" r="2.8" fill="#f39a2d"/><circle cx="16" cy="8" r="2.8" fill="#f39a2d"/><circle cx="24" cy="8" r="2.8" fill="#111"/><circle cx="8" cy="16" r="2.8" fill="#f39a2d"/><circle cx="16" cy="16" r="2.8" fill="#f39a2d"/><circle cx="24" cy="16" r="2.8" fill="#111"/><circle cx="8" cy="24" r="2.8" fill="#111"/><circle cx="16" cy="24" r="2.8" fill="#111"/><circle cx="24" cy="24" r="2.8" fill="#111"/></svg>
<div class="a" style="left:1267.7px;top:1131.2px;width:31.700000000000045px;height:31px;background:#e3f06f;border-radius:3px"></div>
<svg class="a" style="left:1267.7px;top:1131.2px" width="31.700000000000045" height="31" viewBox="0 0 32 32" preserveAspectRatio="none"><circle cx="10" cy="10" r="7" fill="#ddd" stroke="#333" stroke-width="1"/><circle cx="16" cy="16" r="7" fill="#e8a050" stroke="#333" stroke-width="1"/><circle cx="22" cy="22" r="7" fill="#ddd" stroke="#333" stroke-width="1"/></svg>
<div class="a" style="left:261px;top:1168px;width:896px;height:107px;background:#3a3a3a;"></div>
<div class="a" style="left:261px;top:1168px;width:896px;height:26px;background:#3b3b3b;border-top:1px solid #474747;border-bottom:1px solid #474747"></div>
<svg class="a" style="left:269px;top:1173px" width="18" height="15"><rect x="0" y="1" width="17" height="2" fill="#bbb"/><rect x="0" y="6" width="17" height="2" fill="#bbb"/><rect x="0" y="11" width="17" height="2" fill="#bbb"/></svg>
<div class="a t" style="left:297.4px;top:1172.8px;font-size:13.8px;color:#dadada;-webkit-text-stroke:0.25px #dadada;">Create</div>
<div class="a t" style="left:355.6px;top:1172.8px;font-size:13.8px;color:#d9e36b;-webkit-text-stroke:0.25px #d9e36b;">Edit</div>
<div class="a t" style="left:397.6px;top:1172.8px;font-size:13.8px;color:#dadada;-webkit-text-stroke:0.25px #dadada;">View</div>
<div class="a t" style="left:444.9px;top:1172.8px;font-size:13.8px;color:#dadada;-webkit-text-stroke:0.25px #dadada;">Select</div>
<div class="a t" style="left:501.8px;top:1172.8px;font-size:13.8px;color:#dadada;-webkit-text-stroke:0.25px #dadada;">Material</div>
<div class="a t" style="left:569.6px;top:1172.8px;font-size:13.8px;color:#dadada;-webkit-text-stroke:0.25px #dadada;">Texture</div>
<svg class="a" style="left:267px;top:1199px" width="24" height="5"><rect x="0" y="0" width="1.4" height="1.4" fill="#777"/><rect x="0" y="3" width="1.4" height="1.4" fill="#777"/><rect x="3" y="0" width="1.4" height="1.4" fill="#777"/><rect x="3" y="3" width="1.4" height="1.4" fill="#777"/><rect x="6" y="0" width="1.4" height="1.4" fill="#777"/><rect x="6" y="3" width="1.4" height="1.4" fill="#777"/><rect x="9" y="0" width="1.4" height="1.4" fill="#777"/><rect x="9" y="3" width="1.4" height="1.4" fill="#777"/><rect x="12" y="0" width="1.4" height="1.4" fill="#777"/><rect x="12" y="3" width="1.4" height="1.4" fill="#777"/><rect x="15" y="0" width="1.4" height="1.4" fill="#777"/><rect x="15" y="3" width="1.4" height="1.4" fill="#777"/><rect x="18" y="0" width="1.4" height="1.4" fill="#777"/><rect x="18" y="3" width="1.4" height="1.4" fill="#777"/><rect x="21" y="0" width="1.4" height="1.4" fill="#777"/><rect x="21" y="3" width="1.4" height="1.4" fill="#777"/></svg>
<div class="a" style="left:263.2px;top:1207.8px;width:30.100000000000023px;height:30.200000000000045px;background:#474747;border-radius:3px;"></div>
<svg class="a" style="left:263.2px;top:1207.8px" width="30.100000000000023" height="30.200000000000045" viewBox="0 0 40 40" preserveAspectRatio="none"><path d="M20 9 V31 M9 20 H31" stroke="#d0d0d0" stroke-width="2"/><path d="M40 33 L40 40 L33 40 Z" fill="#a9a9a9"/></svg>
<div class="a" style="left:263.2px;top:1240px;width:30.100000000000023px;height:30px;background:#434343;border-radius:3px;"></div>
<svg class="a" style="left:263.2px;top:1240px" width="30.100000000000023" height="30" viewBox="0 0 40 40" preserveAspectRatio="none"><path d="M11 29 L29 11 M18 11 H29 V22" stroke="#6a6a6a" stroke-width="2" fill="none"/></svg>
<div class="a" style="left:299px;top:1198.5px;width:53px;height:69.5px;background:#474747;border-radius:2px"></div>
<svg class="a" style="left:299px;top:1198.5px" width="53" height="54"><defs><pattern id="ckBG" width="8" height="8" patternUnits="userSpaceOnUse"><rect width="8" height="8" fill="#a8a8a8"/><rect width="4" height="4" fill="#7c7c7c"/><rect x="4" y="4" width="4" height="4" fill="#7c7c7c"/></pattern></defs><rect x="2" y="1" width="49" height="51" fill="url(#ckBG)"/><rect x="2" y="36" width="49" height="16" fill="#7790a8" opacity=".5"/><radialGradient id="gBG" cx=".35" cy=".3" r=".75"><stop offset="0" stop-color="#c8b050"/><stop offset=".5" stop-color="#6a5a20"/><stop offset="1" stop-color="#1e1a0a"/></radialGradient><circle cx="26.5" cy="26" r="24" fill="url(#gBG)"/><path d="M30 8 Q44 10 40 30 Q36 44 28 40 Q22 30 26 18 Z" fill="#d9607a"/></svg>
<div class="a t" style="left:302px;top:1252.1px;font-size:13.8px;color:#e0e0e0;-webkit-text-stroke:0.25px #e0e0e0;">BG</div>
<div class="a" style="left:357px;top:1198.5px;width:53px;height:69.5px;background:#474747;border-radius:2px"></div>
<svg class="a" style="left:357px;top:1198.5px" width="53" height="54"><defs><pattern id="ckBag" width="8" height="8" patternUnits="userSpaceOnUse"><rect width="8" height="8" fill="#a8a8a8"/><rect width="4" height="4" fill="#7c7c7c"/><rect x="4" y="4" width="4" height="4" fill="#7c7c7c"/></pattern></defs><rect x="2" y="1" width="49" height="51" fill="url(#ckBag)"/><rect x="2" y="36" width="49" height="16" fill="#7790a8" opacity=".5"/><radialGradient id="gBag" cx=".35" cy=".3" r=".8"><stop offset="0" stop-color="#fff" stop-opacity=".4"/><stop offset=".3" stop-color="#4a6896" stop-opacity="0"/><stop offset="1" stop-color="#000" stop-opacity=".6"/></radialGradient><circle cx="26.5" cy="26" r="24" fill="#4a6896"/><circle cx="26.5" cy="26" r="24" fill="url(#gBag)"/></svg>
<div class="a t" style="left:360px;top:1252.1px;font-size:13.8px;color:#e0e0e0;-webkit-text-stroke:0.25px #e0e0e0;">Bag</div>
<div class="a" style="left:415.3px;top:1198.5px;width:53.0px;height:69.5px;background:#474747;border-radius:2px"></div>
<svg class="a" style="left:415.3px;top:1198.5px" width="53" height="54"><defs><pattern id="ckTreats" width="8" height="8" patternUnits="userSpaceOnUse"><rect width="8" height="8" fill="#a8a8a8"/><rect width="4" height="4" fill="#7c7c7c"/><rect x="4" y="4" width="4" height="4" fill="#7c7c7c"/></pattern></defs><rect x="2" y="1" width="49" height="51" fill="url(#ckTreats)"/><rect x="2" y="36" width="49" height="16" fill="#7790a8" opacity=".5"/><radialGradient id="gTreats" cx=".35" cy=".3" r=".8"><stop offset="0" stop-color="#fff" stop-opacity=".4"/><stop offset=".3" stop-color="#c9a265" stop-opacity="0"/><stop offset="1" stop-color="#000" stop-opacity=".6"/></radialGradient><circle cx="26.5" cy="26" r="24" fill="#c9a265"/><circle cx="26.5" cy="26" r="24" fill="url(#gTreats)"/></svg>
<div class="a t" style="left:418.3px;top:1252.1px;font-size:13.8px;color:#e0e0e0;-webkit-text-stroke:0.25px #e0e0e0;">Treats</div>
<div class="a" style="left:473.2px;top:1198.5px;width:53.00000000000006px;height:69.5px;background:#474747;border-radius:2px"></div>
<svg class="a" style="left:473.2px;top:1198.5px" width="53" height="54"><defs><pattern id="ckPlastic" width="8" height="8" patternUnits="userSpaceOnUse"><rect width="8" height="8" fill="#a8a8a8"/><rect width="4" height="4" fill="#7c7c7c"/><rect x="4" y="4" width="4" height="4" fill="#7c7c7c"/></pattern></defs><rect x="2" y="1" width="49" height="51" fill="url(#ckPlastic)"/><rect x="2" y="36" width="49" height="16" fill="#7790a8" opacity=".5"/><radialGradient id="gPlastic" cx=".4" cy=".35" r=".75"><stop offset="0" stop-color="#e8eef0" stop-opacity=".9"/><stop offset=".6" stop-color="#9aa6a8" stop-opacity=".6"/><stop offset="1" stop-color="#505a5c" stop-opacity=".8"/></radialGradient><circle cx="26.5" cy="26" r="24" fill="url(#gPlastic)"/></svg>
<div class="a t" style="left:476.2px;top:1252.1px;font-size:13.8px;color:#e0e0e0;-webkit-text-stroke:0.25px #e0e0e0;">Plastic</div>
<div class="a" style="left:531.4px;top:1198.5px;width:53.0px;height:69.5px;background:#474747;border-radius:2px"></div>
<svg class="a" style="left:531.4px;top:1198.5px" width="53" height="54"><defs><pattern id="ckWater" width="8" height="8" patternUnits="userSpaceOnUse"><rect width="8" height="8" fill="#a8a8a8"/><rect width="4" height="4" fill="#7c7c7c"/><rect x="4" y="4" width="4" height="4" fill="#7c7c7c"/></pattern></defs><rect x="2" y="1" width="49" height="51" fill="url(#ckWater)"/><rect x="2" y="36" width="49" height="16" fill="#7790a8" opacity=".5"/><radialGradient id="gWater" cx=".4" cy=".35" r=".75"><stop offset="0" stop-color="#d8ecea" stop-opacity=".9"/><stop offset=".6" stop-color="#9aa6a8" stop-opacity=".6"/><stop offset="1" stop-color="#505a5c" stop-opacity=".8"/></radialGradient><circle cx="26.5" cy="26" r="24" fill="url(#gWater)"/></svg>
<div class="a t" style="left:534.4px;top:1252.1px;font-size:13.8px;color:#e0e0e0;-webkit-text-stroke:0.25px #e0e0e0;">Water</div>
<div class="a" style="left:589.5px;top:1198.5px;width:53.0px;height:69.5px;background:#474747;border-radius:2px"></div>
<svg class="a" style="left:589.5px;top:1198.5px" width="53" height="54"><defs><pattern id="ckScrew" width="8" height="8" patternUnits="userSpaceOnUse"><rect width="8" height="8" fill="#a8a8a8"/><rect width="4" height="4" fill="#7c7c7c"/><rect x="4" y="4" width="4" height="4" fill="#7c7c7c"/></pattern></defs><rect x="2" y="1" width="49" height="51" fill="url(#ckScrew)"/><rect x="2" y="36" width="49" height="16" fill="#7790a8" opacity=".5"/><radialGradient id="gScrew" cx=".35" cy=".3" r=".8"><stop offset="0" stop-color="#fff" stop-opacity=".4"/><stop offset=".3" stop-color="#521070" stop-opacity="0"/><stop offset="1" stop-color="#000" stop-opacity=".6"/></radialGradient><circle cx="26.5" cy="26" r="24" fill="#521070"/><circle cx="26.5" cy="26" r="24" fill="url(#gScrew)"/></svg>
<div class="a t" style="left:592.5px;top:1252.1px;font-size:13.8px;color:#e0e0e0;-webkit-text-stroke:0.25px #e0e0e0;">Screw</div>
<div class="a" style="left:648px;top:1198.5px;width:53px;height:69.5px;background:#474747;border-radius:2px"></div>
<svg class="a" style="left:648px;top:1198.5px" width="53" height="54"><defs><pattern id="ckPink" width="8" height="8" patternUnits="userSpaceOnUse"><rect width="8" height="8" fill="#a8a8a8"/><rect width="4" height="4" fill="#7c7c7c"/><rect x="4" y="4" width="4" height="4" fill="#7c7c7c"/></pattern></defs><rect x="2" y="1" width="49" height="51" fill="url(#ckPink)"/><rect x="2" y="36" width="49" height="16" fill="#7790a8" opacity=".5"/><radialGradient id="gPink" cx=".35" cy=".3" r=".8"><stop offset="0" stop-color="#fff" stop-opacity=".4"/><stop offset=".3" stop-color="#e8607e" stop-opacity="0"/><stop offset="1" stop-color="#000" stop-opacity=".6"/></radialGradient><circle cx="26.5" cy="26" r="24" fill="#e8607e"/><circle cx="26.5" cy="26" r="24" fill="url(#gPink)"/></svg>
<div class="a t" style="left:651px;top:1252.1px;font-size:13.8px;color:#e0e0e0;-webkit-text-stroke:0.25px #e0e0e0;">Pink</div>
<div class="a" style="left:1161.7px;top:1167.3px;width:429.29999999999995px;height:107.70000000000005px;background:#3a3a3a;border-left:1px solid #474747;border-top:1px solid #474747"></div>
<svg class="a" style="left:1168px;top:1176px" width="18" height="14"><rect x="0" y="0.5" width="17" height="2" fill="#bbb"/><rect x="0" y="5.5" width="17" height="2" fill="#bbb"/><rect x="0" y="10.5" width="17" height="2" fill="#bbb"/></svg>
<div class="a t" style="left:1195px;top:1174.8px;font-size:13.5px;color:#8a8a8a;-webkit-text-stroke:0.25px #8a8a8a;letter-spacing:1.5px">--</div>
<div class="a t" style="left:1328px;top:1174.8px;font-size:13.5px;color:#8a8a8a;-webkit-text-stroke:0.25px #8a8a8a;letter-spacing:1.5px">--</div>
<div class="a t" style="left:1461px;top:1174.8px;font-size:13.5px;color:#8a8a8a;-webkit-text-stroke:0.25px #8a8a8a;letter-spacing:1.5px">--</div>
<div class="a" style="left:1162px;top:1196px;width:429px;height:1px;background:#474747;"></div>
<div class="a t" style="left:1166.7px;top:1207.5px;font-size:13.5px;color:#d8d8d8;-webkit-text-stroke:0.25px #d8d8d8;">X</div>
<div class="a" style="left:1180px;top:1204.5px;width:124px;height:19px;background:#383838;border-radius:3px;box-shadow:inset 0 0 0 1px #444"></div>
<div class="a t" style="left:1186px;top:1207.5px;font-size:13.5px;color:#6e6e6e;-webkit-text-stroke:0.25px #6e6e6e;">0 cm</div>
<svg class="a" style="left:1294px;top:1206px" width="8" height="16" viewBox="0 0 8 16"><path d="M1 6 L4 2.5 L7 6 M1 10 L4 13.5 L7 10" stroke="#6e6e6e" stroke-width="1.1" fill="none"/></svg>
<div class="a t" style="left:1308.3px;top:1207.5px;font-size:13.5px;color:#d8d8d8;-webkit-text-stroke:0.25px #d8d8d8;">X</div>
<div class="a" style="left:1321.7px;top:1204.5px;width:124.0px;height:19px;background:#383838;border-radius:3px;box-shadow:inset 0 0 0 1px #444"></div>
<div class="a t" style="left:1327.7px;top:1207.5px;font-size:13.5px;color:#6e6e6e;-webkit-text-stroke:0.25px #6e6e6e;">0 cm</div>
<svg class="a" style="left:1435.7px;top:1206px" width="8" height="16" viewBox="0 0 8 16"><path d="M1 6 L4 2.5 L7 6 M1 10 L4 13.5 L7 10" stroke="#6e6e6e" stroke-width="1.1" fill="none"/></svg>
<div class="a t" style="left:1449.3px;top:1207.5px;font-size:13.5px;color:#d8d8d8;-webkit-text-stroke:0.25px #d8d8d8;">H</div>
<div class="a" style="left:1464px;top:1204.5px;width:122px;height:19px;background:#383838;border-radius:3px;box-shadow:inset 0 0 0 1px #444"></div>
<div class="a t" style="left:1470px;top:1207.5px;font-size:13.5px;color:#6e6e6e;-webkit-text-stroke:0.25px #6e6e6e;">0 °</div>
<svg class="a" style="left:1576px;top:1206px" width="8" height="16" viewBox="0 0 8 16"><path d="M1 6 L4 2.5 L7 6 M1 10 L4 13.5 L7 10" stroke="#6e6e6e" stroke-width="1.1" fill="none"/></svg>
<div class="a t" style="left:1166.7px;top:1232.5px;font-size:13.5px;color:#d8d8d8;-webkit-text-stroke:0.25px #d8d8d8;">Y</div>
<div class="a" style="left:1180px;top:1229.5px;width:124px;height:19px;background:#383838;border-radius:3px;box-shadow:inset 0 0 0 1px #444"></div>
<div class="a t" style="left:1186px;top:1232.5px;font-size:13.5px;color:#6e6e6e;-webkit-text-stroke:0.25px #6e6e6e;">0 cm</div>
<svg class="a" style="left:1294px;top:1231px" width="8" height="16" viewBox="0 0 8 16"><path d="M1 6 L4 2.5 L7 6 M1 10 L4 13.5 L7 10" stroke="#6e6e6e" stroke-width="1.1" fill="none"/></svg>
<div class="a t" style="left:1308.3px;top:1232.5px;font-size:13.5px;color:#d8d8d8;-webkit-text-stroke:0.25px #d8d8d8;">Y</div>
<div class="a" style="left:1321.7px;top:1229.5px;width:124.0px;height:19px;background:#383838;border-radius:3px;box-shadow:inset 0 0 0 1px #444"></div>
<div class="a t" style="left:1327.7px;top:1232.5px;font-size:13.5px;color:#6e6e6e;-webkit-text-stroke:0.25px #6e6e6e;">0 cm</div>
<svg class="a" style="left:1435.7px;top:1231px" width="8" height="16" viewBox="0 0 8 16"><path d="M1 6 L4 2.5 L7 6 M1 10 L4 13.5 L7 10" stroke="#6e6e6e" stroke-width="1.1" fill="none"/></svg>
<div class="a t" style="left:1449.3px;top:1232.5px;font-size:13.5px;color:#d8d8d8;-webkit-text-stroke:0.25px #d8d8d8;">P</div>
<div class="a" style="left:1464px;top:1229.5px;width:122px;height:19px;background:#383838;border-radius:3px;box-shadow:inset 0 0 0 1px #444"></div>
<div class="a t" style="left:1470px;top:1232.5px;font-size:13.5px;color:#6e6e6e;-webkit-text-stroke:0.25px #6e6e6e;">0 °</div>
<svg class="a" style="left:1576px;top:1231px" width="8" height="16" viewBox="0 0 8 16"><path d="M1 6 L4 2.5 L7 6 M1 10 L4 13.5 L7 10" stroke="#6e6e6e" stroke-width="1.1" fill="none"/></svg>
<div class="a t" style="left:1166.7px;top:1257.5px;font-size:13.5px;color:#d8d8d8;-webkit-text-stroke:0.25px #d8d8d8;">Z</div>
<div class="a" style="left:1180px;top:1254.5px;width:124px;height:19px;background:#383838;border-radius:3px;box-shadow:inset 0 0 0 1px #444"></div>
<div class="a t" style="left:1186px;top:1257.5px;font-size:13.5px;color:#6e6e6e;-webkit-text-stroke:0.25px #6e6e6e;">0 cm</div>
<svg class="a" style="left:1294px;top:1256px" width="8" height="16" viewBox="0 0 8 16"><path d="M1 6 L4 2.5 L7 6 M1 10 L4 13.5 L7 10" stroke="#6e6e6e" stroke-width="1.1" fill="none"/></svg>
<div class="a t" style="left:1308.3px;top:1257.5px;font-size:13.5px;color:#d8d8d8;-webkit-text-stroke:0.25px #d8d8d8;">Z</div>
<div class="a" style="left:1321.7px;top:1254.5px;width:124.0px;height:19px;background:#383838;border-radius:3px;box-shadow:inset 0 0 0 1px #444"></div>
<div class="a t" style="left:1327.7px;top:1257.5px;font-size:13.5px;color:#6e6e6e;-webkit-text-stroke:0.25px #6e6e6e;">0 cm</div>
<svg class="a" style="left:1435.7px;top:1256px" width="8" height="16" viewBox="0 0 8 16"><path d="M1 6 L4 2.5 L7 6 M1 10 L4 13.5 L7 10" stroke="#6e6e6e" stroke-width="1.1" fill="none"/></svg>
<div class="a t" style="left:1449.3px;top:1257.5px;font-size:13.5px;color:#d8d8d8;-webkit-text-stroke:0.25px #d8d8d8;">B</div>
<div class="a" style="left:1464px;top:1254.5px;width:122px;height:19px;background:#383838;border-radius:3px;box-shadow:inset 0 0 0 1px #444"></div>
<div class="a t" style="left:1470px;top:1257.5px;font-size:13.5px;color:#6e6e6e;-webkit-text-stroke:0.25px #6e6e6e;">0 °</div>
<svg class="a" style="left:1576px;top:1256px" width="8" height="16" viewBox="0 0 8 16"><path d="M1 6 L4 2.5 L7 6 M1 10 L4 13.5 L7 10" stroke="#6e6e6e" stroke-width="1.1" fill="none"/></svg>
<div class="a" style="left:1599px;top:327.5px;width:438px;height:473.5px;background:#3a3a3a;"></div>
<div class="a" style="left:1599px;top:327.5px;width:438px;height:29.0px;background:#303030;"></div>
<div class="a" style="left:1599.4px;top:333.3px;width:62.09999999999991px;height:23.19999999999999px;background:#3c3c3c;border-radius:4px 4px 0 0"></div>
<div class="a t" style="left:1605.8px;top:337.0px;font-size:13.5px;color:#dcdcdc;-webkit-text-stroke:0.25px #dcdcdc;">Objects</div>
<div class="a t" style="left:1668.9px;top:337.0px;font-size:13.5px;color:#8a8a8a;-webkit-text-stroke:0.25px #8a8a8a;">Takes</div>
<div class="a" style="left:1599px;top:356.5px;width:438px;height:28.0px;background:#3b3b3b;"></div>
<div class="a" style="left:1599px;top:384.5px;width:438px;height:1.5px;background:#484848;"></div>
<svg class="a" style="left:1606.7px;top:364.4px" width="18" height="13"><rect x="0" y="0" width="17" height="2.2" fill="#eee"/><rect x="0" y="5" width="17" height="2.2" fill="#eee"/><rect x="0" y="10" width="17" height="2.2" fill="#eee"/></svg>
<div class="a t" style="left:1635.6px;top:362.1px;font-size:13.8px;color:#dcdcdc;-webkit-text-stroke:0.25px #dcdcdc;">File</div>
<div class="a t" style="left:1674.4px;top:362.1px;font-size:13.8px;color:#dcdcdc;-webkit-text-stroke:0.25px #dcdcdc;">Edit</div>
<div class="a t" style="left:1716.2px;top:362.1px;font-size:13.8px;color:#dcdcdc;-webkit-text-stroke:0.25px #dcdcdc;">View</div>
<div class="a t" style="left:1763.8px;top:362.1px;font-size:13.8px;color:#dcdcdc;-webkit-text-stroke:0.25px #dcdcdc;">Object</div>
<div class="a t" style="left:1822.2px;top:362.1px;font-size:13.8px;color:#d9e36b;-webkit-text-stroke:0.25px #d9e36b;">Tags</div>
<svg class="a" style="left:1867px;top:366px" width="8" height="10"><path d="M1 1 L6 5 L1 9 Z" fill="#ddd"/></svg>
<svg class="a" style="left:1945px;top:361px" width="92" height="20" viewBox="0 0 92 20"><g fill="none" stroke="#a0a0a0" stroke-width="1.5"><circle cx="8" cy="7.5" r="5"/><path d="M11.5 11 L16 16.5" stroke-width="2.2"/><path d="M24 10 L32 2.5 L40 10 M26.5 8 V17 H37.5 V8"/><path d="M48 3 H64 L58 10 V17 L54 14 V10 Z"/><rect x="74" y="2" width="15" height="16" rx="1"/></g><path d="M81.5 6 V14 M77.5 10 H85.5" stroke="#a0a0a0" stroke-width="2"/></svg>
<div class="a" style="left:1601px;top:386px;width:417px;height:10.800000000000011px;background:#3b3b3b;"></div>
<div class="a" style="left:1814px;top:386px;width:1px;height:10.800000000000011px;background:#333;"></div>
<div class="a" style="left:1861px;top:386px;width:1.5px;height:10.800000000000011px;background:#333;"></div>
<div class="a t" style="left:1643px;top:377.9px;font-size:13.8px;color:#dcdcdc;-webkit-text-stroke:0.25px #dcdcdc;">Water bubbles</div>
<svg class="a" style="left:1622px;top:376.4px" width="18" height="18" viewBox="0 0 18 18"><path d="M3 2 V13 H14 L12 11 M14 13 L12 15" stroke="#eee" stroke-width="1.6" fill="none"/><circle cx="10" cy="5.5" r="4" fill="#c4dcf5"/></svg>
<div class="a" style="left:1818px;top:377.6px;width:14.5px;height:14.5px;background:#9a9a9a;border-radius:2.5px"></div>
<svg class="a" style="left:1818px;top:377.6px" width="15" height="15"><path d="M3 12 L12 3" stroke="#2a2a2a" stroke-width="1.1"/></svg>
<div class="a" style="left:1838.8px;top:377.4px;width:5.8px;height:5.8px;border-radius:50%;background:#8a8a8a"></div>
<div class="a" style="left:1838.8px;top:386.6px;width:5.8px;height:5.8px;border-radius:50%;background:#8a8a8a"></div>
<svg class="a" style="left:1864.2px;top:374.9px" width="21" height="20" viewBox="0 0 21 20"><rect x="1" y="3" width="18" height="15" rx="2" fill="#1b1b1b"/><path d="M4 1 L6 4 M9 1 L11 4 M14 1 L16 4" stroke="#e8783a" stroke-width="1.6"/><path d="M4 10 H16 M4 13.5 H13" stroke="#e8783a" stroke-width="1.2"/></svg>
<svg class="a" style="left:1604px;top:378.9px" width="12" height="12"><rect x="0.7" y="0.7" width="10.6" height="10.6" fill="none" stroke="#8a8a8a" stroke-width="1.2"/><path d="M3 6 H9" stroke="#8a8a8a" stroke-width="1.2"/></svg>
<div class="a" style="left:1601px;top:396.8px;width:417px;height:23.80000000000001px;background:#474747;"></div>
<div class="a" style="left:1814px;top:396.8px;width:1px;height:23.80000000000001px;background:#333;"></div>
<div class="a" style="left:1861px;top:396.8px;width:1.5px;height:23.80000000000001px;background:#333;"></div>
<div class="a t" style="left:1656px;top:401.7px;font-size:13.8px;color:#dcdcdc;-webkit-text-stroke:0.25px #dcdcdc;">Displacer</div>
<svg class="a" style="left:1636px;top:400.2px" width="18" height="18" viewBox="0 0 18 18"><path d="M3 4 Q8 0 13 3 Q15 8 13 13 Q8 16 4 14 Q1 9 3 4 Z" fill="#7e95e0"/><path d="M3 7 H14 M3 10 H14 M6 2 V15 M10 2 V15" stroke="#4a5cb0" stroke-width=".7"/></svg>
<div class="a" style="left:1818px;top:401.4px;width:14.5px;height:14.5px;background:#9a9a9a;border-radius:2.5px"></div>
<svg class="a" style="left:1818px;top:401.4px" width="15" height="15"><path d="M3 12 L12 3" stroke="#2a2a2a" stroke-width="1.1"/></svg>
<div class="a" style="left:1838.8px;top:401.2px;width:5.8px;height:5.8px;border-radius:50%;background:#8a8a8a"></div>
<div class="a" style="left:1838.8px;top:410.4px;width:5.8px;height:5.8px;border-radius:50%;background:#8a8a8a"></div>
<svg class="a" style="left:1846px;top:402.7px" width="14" height="12"><path d="M1.5 6 L5 9.5 L12.5 2" stroke="#3ee07f" stroke-width="1.6" fill="none"/></svg>
<div class="a" style="left:1601px;top:420.6px;width:417px;height:23.799999999999955px;background:#3b3b3b;"></div>
<div class="a" style="left:1814px;top:420.6px;width:1px;height:23.799999999999955px;background:#333;"></div>
<div class="a" style="left:1861px;top:420.6px;width:1.5px;height:23.799999999999955px;background:#333;"></div>
<div class="a t" style="left:1656px;top:425.5px;font-size:13.8px;color:#dcdcdc;-webkit-text-stroke:0.25px #dcdcdc;">Random bubble scale</div>
<svg class="a" style="left:1635px;top:424.0px" width="18" height="18" viewBox="0 0 18 18"><path d="M8 1 L14 3.5 L14 7 L8 9.5 L2 7 L2 3.5 Z" fill="#ececec"/><circle cx="4" cy="12" r="3.2" fill="#7e95e0"/><path d="M7 10 Q11 10 12 13 L15 15 M7 15 Q11 15 12 11 L15 9" stroke="#ddd" stroke-width="1" fill="none"/></svg>
<div class="a" style="left:1818px;top:425.2px;width:14.5px;height:14.5px;background:#9a9a9a;border-radius:2.5px"></div>
<svg class="a" style="left:1818px;top:425.2px" width="15" height="15"><path d="M3 12 L12 3" stroke="#2a2a2a" stroke-width="1.1"/></svg>
<div class="a" style="left:1838.8px;top:425.0px;width:5.8px;height:5.8px;border-radius:50%;background:#8a8a8a"></div>
<div class="a" style="left:1838.8px;top:434.2px;width:5.8px;height:5.8px;border-radius:50%;background:#8a8a8a"></div>
<svg class="a" style="left:1846px;top:426.5px" width="14" height="12"><path d="M1.5 6 L5 9.5 L12.5 2" stroke="#3ee07f" stroke-width="1.6" fill="none"/></svg>
<div class="a" style="left:1601px;top:444.4px;width:417px;height:23.80000000000001px;background:#474747;"></div>
<div class="a" style="left:1814px;top:444.4px;width:1px;height:23.80000000000001px;background:#333;"></div>
<div class="a" style="left:1861px;top:444.4px;width:1.5px;height:23.80000000000001px;background:#333;"></div>
<div class="a t" style="left:1656px;top:449.3px;font-size:13.8px;color:#dcdcdc;-webkit-text-stroke:0.25px #dcdcdc;">Random bubble position</div>
<svg class="a" style="left:1635px;top:447.8px" width="18" height="18" viewBox="0 0 18 18"><path d="M8 1 L14 3.5 L14 7 L8 9.5 L2 7 L2 3.5 Z" fill="#ececec"/><circle cx="4" cy="12" r="3.2" fill="#7e95e0"/><path d="M7 10 Q11 10 12 13 L15 15 M7 15 Q11 15 12 11 L15 9" stroke="#ddd" stroke-width="1" fill="none"/></svg>
<div class="a" style="left:1818px;top:449.0px;width:14.5px;height:14.5px;background:#9a9a9a;border-radius:2.5px"></div>
<svg class="a" style="left:1818px;top:449.0px" width="15" height="15"><path d="M3 12 L12 3" stroke="#2a2a2a" stroke-width="1.1"/></svg>
<div class="a" style="left:1838.8px;top:448.8px;width:5.8px;height:5.8px;border-radius:50%;background:#8a8a8a"></div>
<div class="a" style="left:1838.8px;top:458.0px;width:5.8px;height:5.8px;border-radius:50%;background:#8a8a8a"></div>
<svg class="a" style="left:1846px;top:450.3px" width="14" height="12"><path d="M1.5 6 L5 9.5 L12.5 2" stroke="#3ee07f" stroke-width="1.6" fill="none"/></svg>
<div class="a" style="left:1601px;top:468.2px;width:417px;height:23.80000000000001px;background:#3b3b3b;"></div>
<div class="a" style="left:1814px;top:468.2px;width:1px;height:23.80000000000001px;background:#333;"></div>
<div class="a" style="left:1861px;top:468.2px;width:1.5px;height:23.80000000000001px;background:#333;"></div>
<div class="a t" style="left:1656px;top:473.1px;font-size:13.8px;color:#dcdcdc;-webkit-text-stroke:0.25px #dcdcdc;">Cloner</div>
<svg class="a" style="left:1635px;top:471.6px" width="18" height="18" viewBox="0 0 18 18"><path d="M8 3 L13 5.5 L13 11 L8 13.5 L3 11 L3 5.5 Z" fill="#dcdcdc"/><g fill="#2ecc71"><circle cx="8" cy="1.6" r="1.6"/><circle cx="2" cy="5" r="1.6"/><circle cx="14" cy="5" r="1.6"/><circle cx="8" cy="8" r="1.6"/><circle cx="2" cy="11.5" r="1.6"/><circle cx="14" cy="11.5" r="1.6"/><circle cx="8" cy="14.5" r="1.6"/></g></svg>
<div class="a" style="left:1818px;top:472.8px;width:14.5px;height:14.5px;background:#9a9a9a;border-radius:2.5px"></div>
<svg class="a" style="left:1818px;top:472.8px" width="15" height="15"><path d="M3 12 L12 3" stroke="#2a2a2a" stroke-width="1.1"/></svg>
<div class="a" style="left:1838.8px;top:472.6px;width:5.8px;height:5.8px;border-radius:50%;background:#8a8a8a"></div>
<div class="a" style="left:1838.8px;top:481.8px;width:5.8px;height:5.8px;border-radius:50%;background:#8a8a8a"></div>
<svg class="a" style="left:1846px;top:474.1px" width="14" height="12"><path d="M1.5 6 L5 9.5 L12.5 2" stroke="#3ee07f" stroke-width="1.6" fill="none"/></svg>
<svg class="a" style="left:1864.2px;top:470.1px" width="21" height="20" viewBox="0 0 21 20"><rect x="0" y="0" width="21" height="20" fill="#777" opacity=".6"/><radialGradient id="tg" cx=".4" cy=".35" r=".7"><stop offset="0" stop-color="#f0f4f4"/><stop offset="1" stop-color="#6a7476"/></radialGradient><circle cx="10.5" cy="10" r="9.5" fill="url(#tg)"/></svg>
<svg class="a" style="left:1617px;top:474.1px" width="12" height="12"><rect x="0.7" y="0.7" width="10.6" height="10.6" fill="none" stroke="#8a8a8a" stroke-width="1.2"/><path d="M3 6 H9" stroke="#8a8a8a" stroke-width="1.2"/></svg>
<div class="a" style="left:1601px;top:492.0px;width:417px;height:23.799999999999955px;background:#474747;"></div>
<div class="a" style="left:1814px;top:492.0px;width:1px;height:23.799999999999955px;background:#333;"></div>
<div class="a" style="left:1861px;top:492.0px;width:1.5px;height:23.799999999999955px;background:#333;"></div>
<div class="a t" style="left:1669px;top:496.9px;font-size:13.8px;color:#dcdcdc;-webkit-text-stroke:0.25px #dcdcdc;">Sphere</div>
<svg class="a" style="left:1648px;top:495.4px" width="18" height="18" viewBox="0 0 18 18"><circle cx="8" cy="8.5" r="7" fill="#6fb4ea"/><path d="M1 8.5 Q8 11 15 8.5 M8 1.5 Q6 8.5 8 15.5" stroke="#a9d4f5" stroke-width="1" fill="none"/></svg>
<div class="a" style="left:1818px;top:496.6px;width:14.5px;height:14.5px;background:#9a9a9a;border-radius:2.5px"></div>
<svg class="a" style="left:1818px;top:496.6px" width="15" height="15"><path d="M3 12 L12 3" stroke="#2a2a2a" stroke-width="1.1"/></svg>
<div class="a" style="left:1838.8px;top:496.4px;width:5.8px;height:5.8px;border-radius:50%;background:#8a8a8a"></div>
<div class="a" style="left:1838.8px;top:505.6px;width:5.8px;height:5.8px;border-radius:50%;background:#8a8a8a"></div>
<svg class="a" style="left:1846px;top:497.9px" width="14" height="12"><path d="M1.5 6 L5 9.5 L12.5 2" stroke="#3ee07f" stroke-width="1.6" fill="none"/></svg>
<svg class="a" style="left:1864.2px;top:493.9px" width="21" height="20" viewBox="0 0 21 20"><circle cx="5" cy="5" r="4" fill="#e07a38" stroke="#222" stroke-width=".6"/><circle cx="14" cy="14" r="4" fill="#e07a38" stroke="#222" stroke-width=".6"/></svg>
<div class="a" style="left:1601px;top:515.8px;width:417px;height:23.800000000000068px;background:#3b3b3b;"></div>
<div class="a" style="left:1814px;top:515.8px;width:1px;height:23.800000000000068px;background:#333;"></div>
<div class="a" style="left:1861px;top:515.8px;width:1.5px;height:23.800000000000068px;background:#333;"></div>
<div class="a t" style="left:1643px;top:520.7px;font-size:13.8px;color:#dcdcdc;-webkit-text-stroke:0.25px #dcdcdc;">Arc for bubbles</div>
<svg class="a" style="left:1621px;top:519.2px" width="18" height="18" viewBox="0 0 18 18"><path d="M1 2 Q12 3 15 15" stroke="#4a9ee8" stroke-width="1.5" fill="none"/></svg>
<div class="a" style="left:1818px;top:520.4px;width:14.5px;height:14.5px;background:#9a9a9a;border-radius:2.5px"></div>
<svg class="a" style="left:1818px;top:520.4px" width="15" height="15"><path d="M3 12 L12 3" stroke="#2a2a2a" stroke-width="1.1"/></svg>
<div class="a" style="left:1838.8px;top:520.2px;width:5.8px;height:5.8px;border-radius:50%;background:#e04848"></div>
<div class="a" style="left:1838.8px;top:529.4px;width:5.8px;height:5.8px;border-radius:50%;background:#e04848"></div>
<svg class="a" style="left:1846px;top:521.7px" width="14" height="12"><path d="M1.5 6 L5 9.5 L12.5 2" stroke="#3ee07f" stroke-width="1.6" fill="none"/></svg>
<div class="a" style="left:1601px;top:539.6px;width:417px;height:23.799999999999955px;background:#474747;"></div>
<div class="a" style="left:1814px;top:539.6px;width:1px;height:23.799999999999955px;background:#333;"></div>
<div class="a" style="left:1861px;top:539.6px;width:1.5px;height:23.799999999999955px;background:#333;"></div>
<div class="a t" style="left:1643px;top:544.5px;font-size:13.8px;color:#dcdcdc;-webkit-text-stroke:0.25px #dcdcdc;">Poop Bag hold</div>
<svg class="a" style="left:1622px;top:543.0px" width="18" height="18" viewBox="0 0 18 18"><path d="M3 2 V13 H14 L12 11 M14 13 L12 15" stroke="#eee" stroke-width="1.6" fill="none"/><circle cx="10" cy="5.5" r="4" fill="#c4dcf5"/></svg>
<div class="a" style="left:1818px;top:544.2px;width:14.5px;height:14.5px;background:#9a9a9a;border-radius:2.5px"></div>
<svg class="a" style="left:1818px;top:544.2px" width="15" height="15"><path d="M3 12 L12 3" stroke="#2a2a2a" stroke-width="1.1"/></svg>
<div class="a" style="left:1838.8px;top:544.0px;width:5.8px;height:5.8px;border-radius:50%;background:#8a8a8a"></div>
<div class="a" style="left:1838.8px;top:553.2px;width:5.8px;height:5.8px;border-radius:50%;background:#8a8a8a"></div>
<svg class="a" style="left:1864.2px;top:541.5px" width="21" height="20" viewBox="0 0 21 20"><rect x="1" y="3" width="18" height="15" rx="2" fill="#1b1b1b"/><path d="M4 1 L6 4 M9 1 L11 4 M14 1 L16 4" stroke="#e8783a" stroke-width="1.6"/><path d="M4 10 H16 M4 13.5 H13" stroke="#e8783a" stroke-width="1.2"/></svg>
<svg class="a" style="left:1604px;top:545.5px" width="12" height="12"><rect x="0.7" y="0.7" width="10.6" height="10.6" fill="none" stroke="#8a8a8a" stroke-width="1.2"/><path d="M3 6 H9" stroke="#8a8a8a" stroke-width="1.2"/></svg>
<div class="a" style="left:1601px;top:563.4px;width:417px;height:23.800000000000068px;background:#3b3b3b;"></div>
<div class="a" style="left:1814px;top:563.4px;width:1px;height:23.800000000000068px;background:#333;"></div>
<div class="a" style="left:1861px;top:563.4px;width:1.5px;height:23.800000000000068px;background:#333;"></div>
<div class="a t" style="left:1656px;top:568.3px;font-size:13.8px;color:#dcdcdc;-webkit-text-stroke:0.25px #dcdcdc;">Cylinder.1</div>
<svg class="a" style="left:1635px;top:566.8px" width="18" height="18" viewBox="0 0 18 18"><rect x="4" y="2" width="9" height="13" rx="3" fill="#6fb4ea"/><ellipse cx="8.5" cy="3.5" rx="4.5" ry="2" fill="#a9d4f5"/></svg>
<div class="a" style="left:1818px;top:568.0px;width:14.5px;height:14.5px;background:#9a9a9a;border-radius:2.5px"></div>
<svg class="a" style="left:1818px;top:568.0px" width="15" height="15"><path d="M3 12 L12 3" stroke="#2a2a2a" stroke-width="1.1"/></svg>
<div class="a" style="left:1838.8px;top:567.8px;width:5.8px;height:5.8px;border-radius:50%;background:#8a8a8a"></div>
<div class="a" style="left:1838.8px;top:577.0px;width:5.8px;height:5.8px;border-radius:50%;background:#8a8a8a"></div>
<svg class="a" style="left:1846px;top:569.3px" width="14" height="12"><path d="M1.5 6 L5 9.5 L12.5 2" stroke="#3ee07f" stroke-width="1.6" fill="none"/></svg>
<svg class="a" style="left:1864.2px;top:565.3px" width="21" height="20" viewBox="0 0 21 20"><circle cx="5" cy="5" r="4" fill="#e07a38" stroke="#222" stroke-width=".6"/><circle cx="14" cy="14" r="4" fill="#e07a38" stroke="#222" stroke-width=".6"/></svg>
<svg class="a" style="left:1886.6px;top:565.3px" width="21" height="20" viewBox="0 0 21 20"><rect x="0" y="0" width="21" height="20" fill="#555" opacity=".6"/><radialGradient id="tp" cx=".4" cy=".35" r=".7"><stop offset="0" stop-color="#8a3ab0"/><stop offset="1" stop-color="#1e0230"/></radialGradient><circle cx="10.5" cy="10" r="9.5" fill="url(#tp)"/></svg>
<div class="a" style="left:1601px;top:587.2px;width:417px;height:23.799999999999955px;background:#474747;"></div>
<div class="a" style="left:1814px;top:587.2px;width:1px;height:23.799999999999955px;background:#333;"></div>
<div class="a" style="left:1861px;top:587.2px;width:1.5px;height:23.799999999999955px;background:#333;"></div>
<div class="a t" style="left:1656px;top:592.1px;font-size:13.8px;color:#dcdcdc;-webkit-text-stroke:0.25px #dcdcdc;">leg back</div>
<svg class="a" style="left:1635px;top:590.6px" width="18" height="18" viewBox="0 0 18 18"><path d="M8 1 L15 4 L15 12 L8 15.5 L1 12 L1 4 Z" fill="#8cc4f2"/><path d="M8 7.5 L15 4 L15 12 L8 15.5 Z" fill="#5b9bd6"/><path d="M1 4 L8 7.5 L15 4" stroke="#3a6ea0" stroke-width=".6" fill="none"/></svg>
<div class="a" style="left:1818px;top:591.8px;width:14.5px;height:14.5px;background:#9a9a9a;border-radius:2.5px"></div>
<svg class="a" style="left:1818px;top:591.8px" width="15" height="15"><path d="M3 12 L12 3" stroke="#2a2a2a" stroke-width="1.1"/></svg>
<div class="a" style="left:1838.8px;top:591.6px;width:5.8px;height:5.8px;border-radius:50%;background:#8a8a8a"></div>
<div class="a" style="left:1838.8px;top:600.8px;width:5.8px;height:5.8px;border-radius:50%;background:#8a8a8a"></div>
<svg class="a" style="left:1846px;top:593.1px" width="14" height="12"><path d="M1.5 6 L5 9.5 L12.5 2" stroke="#3ee07f" stroke-width="1.6" fill="none"/></svg>
<svg class="a" style="left:1864.2px;top:589.1px" width="21" height="20" viewBox="0 0 21 20"><rect x="1" y="3" width="18" height="15" rx="2" fill="#1b1b1b"/><path d="M4 1 L6 4 M9 1 L11 4 M14 1 L16 4" stroke="#e8783a" stroke-width="1.6"/><path d="M4 10 H16 M4 13.5 H13" stroke="#e8783a" stroke-width="1.2"/></svg>
<svg class="a" style="left:1886.6px;top:589.1px" width="21" height="20" viewBox="0 0 21 20"><circle cx="5" cy="5" r="4" fill="#e07a38" stroke="#222" stroke-width=".6"/><circle cx="14" cy="14" r="4" fill="#e07a38" stroke="#222" stroke-width=".6"/></svg>
<svg class="a" style="left:1910px;top:589.1px" width="21" height="20" viewBox="0 0 21 20"><rect x="0" y="0" width="21" height="20" fill="#555" opacity=".6"/><radialGradient id="tk" cx=".4" cy=".35" r=".7"><stop offset="0" stop-color="#ffb0c0"/><stop offset=".4" stop-color="#e05070"/><stop offset="1" stop-color="#5a1020"/></radialGradient><circle cx="10.5" cy="10" r="9.5" fill="url(#tk)"/></svg>
<div class="a" style="left:1601px;top:611.0px;width:417px;height:23.799999999999955px;background:#3b3b3b;"></div>
<div class="a" style="left:1814px;top:611.0px;width:1px;height:23.799999999999955px;background:#333;"></div>
<div class="a" style="left:1861px;top:611.0px;width:1.5px;height:23.799999999999955px;background:#333;"></div>
<div class="a t" style="left:1656px;top:615.9px;font-size:13.8px;color:#dcdcdc;-webkit-text-stroke:0.25px #dcdcdc;">Sphere.1</div>
<svg class="a" style="left:1635px;top:614.4px" width="18" height="18" viewBox="0 0 18 18"><circle cx="8" cy="8.5" r="7" fill="#6fb4ea"/><path d="M1 8.5 Q8 11 15 8.5 M8 1.5 Q6 8.5 8 15.5" stroke="#a9d4f5" stroke-width="1" fill="none"/></svg>
<div class="a" style="left:1818px;top:615.6px;width:14.5px;height:14.5px;background:#9a9a9a;border-radius:2.5px"></div>
<svg class="a" style="left:1818px;top:615.6px" width="15" height="15"><path d="M3 12 L12 3" stroke="#2a2a2a" stroke-width="1.1"/></svg>
<div class="a" style="left:1838.8px;top:615.4px;width:5.8px;height:5.8px;border-radius:50%;background:#8a8a8a"></div>
<div class="a" style="left:1838.8px;top:624.6px;width:5.8px;height:5.8px;border-radius:50%;background:#8a8a8a"></div>
<svg class="a" style="left:1846px;top:616.9px" width="14" height="12"><path d="M1.5 6 L5 9.5 L12.5 2" stroke="#3ee07f" stroke-width="1.6" fill="none"/></svg>
<svg class="a" style="left:1864.2px;top:612.9px" width="21" height="20" viewBox="0 0 21 20"><circle cx="5" cy="5" r="4" fill="#e07a38" stroke="#222" stroke-width=".6"/><circle cx="14" cy="14" r="4" fill="#e07a38" stroke="#222" stroke-width=".6"/></svg>
<svg class="a" style="left:1886.6px;top:612.9px" width="21" height="20" viewBox="0 0 21 20"><rect x="0" y="0" width="21" height="20" fill="#555" opacity=".6"/><radialGradient id="tp" cx=".4" cy=".35" r=".7"><stop offset="0" stop-color="#8a3ab0"/><stop offset="1" stop-color="#1e0230"/></radialGradient><circle cx="10.5" cy="10" r="9.5" fill="url(#tp)"/></svg>
<div class="a" style="left:1601px;top:634.8px;width:417px;height:23.800000000000068px;background:#474747;"></div>
<div class="a" style="left:1814px;top:634.8px;width:1px;height:23.800000000000068px;background:#333;"></div>
<div class="a" style="left:1861px;top:634.8px;width:1.5px;height:23.800000000000068px;background:#333;"></div>
<div class="a t" style="left:1656px;top:639.7px;font-size:13.8px;color:#dcdcdc;-webkit-text-stroke:0.25px #dcdcdc;">leg front</div>
<svg class="a" style="left:1635px;top:638.2px" width="18" height="18" viewBox="0 0 18 18"><path d="M8 1 L15 4 L15 12 L8 15.5 L1 12 L1 4 Z" fill="#8cc4f2"/><path d="M8 7.5 L15 4 L15 12 L8 15.5 Z" fill="#5b9bd6"/><path d="M1 4 L8 7.5 L15 4" stroke="#3a6ea0" stroke-width=".6" fill="none"/></svg>
<div class="a" style="left:1818px;top:639.4px;width:14.5px;height:14.5px;background:#9a9a9a;border-radius:2.5px"></div>
<svg class="a" style="left:1818px;top:639.4px" width="15" height="15"><path d="M3 12 L12 3" stroke="#2a2a2a" stroke-width="1.1"/></svg>
<div class="a" style="left:1838.8px;top:639.2px;width:5.8px;height:5.8px;border-radius:50%;background:#8a8a8a"></div>
<div class="a" style="left:1838.8px;top:648.4px;width:5.8px;height:5.8px;border-radius:50%;background:#8a8a8a"></div>
<svg class="a" style="left:1846px;top:640.7px" width="14" height="12"><path d="M1.5 6 L5 9.5 L12.5 2" stroke="#3ee07f" stroke-width="1.6" fill="none"/></svg>
<svg class="a" style="left:1864.2px;top:636.7px" width="21" height="20" viewBox="0 0 21 20"><rect x="1" y="3" width="18" height="15" rx="2" fill="#1b1b1b"/><path d="M4 1 L6 4 M9 1 L11 4 M14 1 L16 4" stroke="#e8783a" stroke-width="1.6"/><path d="M4 10 H16 M4 13.5 H13" stroke="#e8783a" stroke-width="1.2"/></svg>
<svg class="a" style="left:1886.6px;top:636.7px" width="21" height="20" viewBox="0 0 21 20"><circle cx="5" cy="5" r="4" fill="#e07a38" stroke="#222" stroke-width=".6"/><circle cx="14" cy="14" r="4" fill="#e07a38" stroke="#222" stroke-width=".6"/></svg>
<svg class="a" style="left:1910px;top:636.7px" width="21" height="20" viewBox="0 0 21 20"><rect x="0" y="0" width="21" height="20" fill="#555" opacity=".6"/><radialGradient id="tk" cx=".4" cy=".35" r=".7"><stop offset="0" stop-color="#ffb0c0"/><stop offset=".4" stop-color="#e05070"/><stop offset="1" stop-color="#5a1020"/></radialGradient><circle cx="10.5" cy="10" r="9.5" fill="url(#tk)"/></svg>
<div class="a" style="left:1601px;top:658.6px;width:417px;height:23.799999999999955px;background:#3b3b3b;"></div>
<div class="a" style="left:1814px;top:658.6px;width:1px;height:23.799999999999955px;background:#333;"></div>
<div class="a" style="left:1861px;top:658.6px;width:1.5px;height:23.799999999999955px;background:#333;"></div>
<div class="a t" style="left:1656px;top:663.5px;font-size:13.8px;color:#dcdcdc;-webkit-text-stroke:0.25px #dcdcdc;">Sphere</div>
<svg class="a" style="left:1635px;top:662.0px" width="18" height="18" viewBox="0 0 18 18"><circle cx="8" cy="8.5" r="7" fill="#6fb4ea"/><path d="M1 8.5 Q8 11 15 8.5 M8 1.5 Q6 8.5 8 15.5" stroke="#a9d4f5" stroke-width="1" fill="none"/></svg>
<div class="a" style="left:1818px;top:663.2px;width:14.5px;height:14.5px;background:#9a9a9a;border-radius:2.5px"></div>
<svg class="a" style="left:1818px;top:663.2px" width="15" height="15"><path d="M3 12 L12 3" stroke="#2a2a2a" stroke-width="1.1"/></svg>
<div class="a" style="left:1838.8px;top:663.0px;width:5.8px;height:5.8px;border-radius:50%;background:#8a8a8a"></div>
<div class="a" style="left:1838.8px;top:672.2px;width:5.8px;height:5.8px;border-radius:50%;background:#8a8a8a"></div>
<svg class="a" style="left:1846px;top:664.5px" width="14" height="12"><path d="M1.5 6 L5 9.5 L12.5 2" stroke="#3ee07f" stroke-width="1.6" fill="none"/></svg>
<svg class="a" style="left:1864.2px;top:660.5px" width="21" height="20" viewBox="0 0 21 20"><circle cx="5" cy="5" r="4" fill="#e07a38" stroke="#222" stroke-width=".6"/><circle cx="14" cy="14" r="4" fill="#e07a38" stroke="#222" stroke-width=".6"/></svg>
<svg class="a" style="left:1886.6px;top:660.5px" width="21" height="20" viewBox="0 0 21 20"><rect x="0" y="0" width="21" height="20" fill="#555" opacity=".6"/><radialGradient id="tp" cx=".4" cy=".35" r=".7"><stop offset="0" stop-color="#8a3ab0"/><stop offset="1" stop-color="#1e0230"/></radialGradient><circle cx="10.5" cy="10" r="9.5" fill="url(#tp)"/></svg>
<div class="a" style="left:1601px;top:682.4px;width:417px;height:23.800000000000068px;background:#474747;"></div>
<div class="a" style="left:1814px;top:682.4px;width:1px;height:23.800000000000068px;background:#333;"></div>
<div class="a" style="left:1861px;top:682.4px;width:1.5px;height:23.800000000000068px;background:#333;"></div>
<div class="a t" style="left:1656px;top:687.3px;font-size:13.8px;color:#dcdcdc;-webkit-text-stroke:0.25px #dcdcdc;">Sphere.2</div>
<svg class="a" style="left:1635px;top:685.8px" width="18" height="18" viewBox="0 0 18 18"><circle cx="8" cy="8.5" r="7" fill="#6fb4ea"/><path d="M1 8.5 Q8 11 15 8.5 M8 1.5 Q6 8.5 8 15.5" stroke="#a9d4f5" stroke-width="1" fill="none"/></svg>
<div class="a" style="left:1818px;top:687.0px;width:14.5px;height:14.5px;background:#9a9a9a;border-radius:2.5px"></div>
<svg class="a" style="left:1818px;top:687.0px" width="15" height="15"><path d="M3 12 L12 3" stroke="#2a2a2a" stroke-width="1.1"/></svg>
<div class="a" style="left:1838.8px;top:686.8px;width:5.8px;height:5.8px;border-radius:50%;background:#8a8a8a"></div>
<div class="a" style="left:1838.8px;top:696.0px;width:5.8px;height:5.8px;border-radius:50%;background:#8a8a8a"></div>
<svg class="a" style="left:1846px;top:688.3px" width="14" height="12"><path d="M1.5 6 L5 9.5 L12.5 2" stroke="#3ee07f" stroke-width="1.6" fill="none"/></svg>
<svg class="a" style="left:1864.2px;top:684.3px" width="21" height="20" viewBox="0 0 21 20"><circle cx="5" cy="5" r="4" fill="#e07a38" stroke="#222" stroke-width=".6"/><circle cx="14" cy="14" r="4" fill="#e07a38" stroke="#222" stroke-width=".6"/></svg>
<svg class="a" style="left:1886.6px;top:684.3px" width="21" height="20" viewBox="0 0 21 20"><rect x="0" y="0" width="21" height="20" fill="#555" opacity=".6"/><radialGradient id="tp" cx=".4" cy=".35" r=".7"><stop offset="0" stop-color="#8a3ab0"/><stop offset="1" stop-color="#1e0230"/></radialGradient><circle cx="10.5" cy="10" r="9.5" fill="url(#tp)"/></svg>
<div class="a" style="left:1601px;top:706.2px;width:417px;height:23.799999999999955px;background:#3b3b3b;"></div>
<div class="a" style="left:1814px;top:706.2px;width:1px;height:23.799999999999955px;background:#333;"></div>
<div class="a" style="left:1861px;top:706.2px;width:1.5px;height:23.799999999999955px;background:#333;"></div>
<div class="a t" style="left:1643px;top:711.1px;font-size:13.8px;color:#dcdcdc;-webkit-text-stroke:0.25px #dcdcdc;">Water tip</div>
<svg class="a" style="left:1621px;top:709.6px" width="18" height="18" viewBox="0 0 18 18"><path d="M8 3 L14 13 H2 Z" fill="#6fb4ea"/><circle cx="8" cy="2.5" r="1.7" fill="#fff"/><circle cx="2" cy="13.5" r="1.7" fill="#fff"/><circle cx="14" cy="13.5" r="1.7" fill="#fff"/></svg>
<div class="a" style="left:1818px;top:710.8px;width:14.5px;height:14.5px;background:#9a9a9a;border-radius:2.5px"></div>
<svg class="a" style="left:1818px;top:710.8px" width="15" height="15"><path d="M3 12 L12 3" stroke="#2a2a2a" stroke-width="1.1"/></svg>
<div class="a" style="left:1838.8px;top:710.6px;width:5.8px;height:5.8px;border-radius:50%;background:#e04848"></div>
<div class="a" style="left:1838.8px;top:719.8px;width:5.8px;height:5.8px;border-radius:50%;background:#e04848"></div>
<svg class="a" style="left:1864.2px;top:708.1px" width="21" height="20" viewBox="0 0 21 20"><rect x="1" y="1" width="18" height="18" fill="#e07a38"/><rect x="3" y="3" width="14" height="14" fill="#fff"/><rect x="3.0" y="3.0" width="3.5" height="3.5" fill="#111"/><rect x="3.0" y="10.0" width="3.5" height="3.5" fill="#111"/><rect x="6.5" y="6.5" width="3.5" height="3.5" fill="#111"/><rect x="6.5" y="13.5" width="3.5" height="3.5" fill="#111"/><rect x="10.0" y="3.0" width="3.5" height="3.5" fill="#111"/><rect x="10.0" y="10.0" width="3.5" height="3.5" fill="#111"/><rect x="13.5" y="6.5" width="3.5" height="3.5" fill="#111"/><rect x="13.5" y="13.5" width="3.5" height="3.5" fill="#111"/></svg>
<svg class="a" style="left:1886.6px;top:708.1px" width="21" height="20" viewBox="0 0 21 20"><circle cx="5" cy="5" r="4" fill="#e07a38" stroke="#222" stroke-width=".6"/><circle cx="14" cy="14" r="4" fill="#e07a38" stroke="#222" stroke-width=".6"/></svg>
<svg class="a" style="left:1910px;top:708.1px" width="21" height="20" viewBox="0 0 21 20"><path d="M10 3 L18 17 H2 Z" fill="#e07a38"/></svg>
<svg class="a" style="left:1935.5px;top:708.1px" width="21" height="20" viewBox="0 0 21 20"><path d="M10 3 L18 17 H2 Z" fill="#e07a38"/></svg>
<svg class="a" style="left:1959.5px;top:708.1px" width="21" height="20" viewBox="0 0 21 20"><path d="M10 3 L18 17 H2 Z" fill="#e07a38"/></svg>
<svg class="a" style="left:1983.5px;top:708.1px" width="21" height="20" viewBox="0 0 21 20"><path d="M10 3 L18 17 H2 Z" fill="#e07a38"/></svg>
<svg class="a" style="left:2007px;top:708.1px" width="21" height="20" viewBox="0 0 21 20"><path d="M10 3 L18 17 H2 Z" fill="#e07a38"/></svg>
<div class="a" style="left:1601px;top:730.0px;width:417px;height:23.799999999999955px;background:#474747;"></div>
<div class="a" style="left:1814px;top:730.0px;width:1px;height:23.799999999999955px;background:#333;"></div>
<div class="a" style="left:1861px;top:730.0px;width:1.5px;height:23.799999999999955px;background:#333;"></div>
<div class="a t" style="left:1643px;top:734.9px;font-size:13.8px;color:#dcdcdc;-webkit-text-stroke:0.25px #dcdcdc;">Camera</div>
<svg class="a" style="left:1621px;top:733.4px" width="18" height="18" viewBox="0 0 18 18"><circle cx="4" cy="4" r="3" fill="#c4dcf5" stroke="#111" stroke-width="1"/><circle cx="10" cy="4" r="3" fill="#c4dcf5" stroke="#111" stroke-width="1"/><rect x="2" y="8" width="11" height="7" rx="1" fill="#111"/><path d="M13 11.5 L17 9 L17 14 Z" fill="#111"/><rect x="4" y="10" width="3" height="2.5" fill="#c4dcf5"/></svg>
<div class="a" style="left:1818px;top:734.6px;width:14.5px;height:14.5px;background:#9a9a9a;border-radius:2.5px"></div>
<svg class="a" style="left:1818px;top:734.6px" width="15" height="15"><path d="M3 12 L12 3" stroke="#2a2a2a" stroke-width="1.1"/></svg>
<div class="a" style="left:1838.8px;top:734.4px;width:5.8px;height:5.8px;border-radius:50%;background:#8a8a8a"></div>
<div class="a" style="left:1838.8px;top:743.6px;width:5.8px;height:5.8px;border-radius:50%;background:#8a8a8a"></div>
<svg class="a" style="left:1846px;top:735.9px" width="13" height="13"><path d="M1 4 V1 H4 M9 1 H12 V4 M12 9 V12 H9 M4 12 H1 V9" stroke="#e8e8e8" stroke-width="1.3" fill="none"/><circle cx="6.5" cy="6.5" r="1.3" fill="#e8e8e8"/></svg>
<svg class="a" style="left:1864.2px;top:731.9px" width="21" height="20" viewBox="0 0 21 20"><circle cx="10" cy="10" r="8" fill="#e07a38" stroke="#111" stroke-width="2.2"/><path d="M4.5 4.5 L15.5 15.5" stroke="#111" stroke-width="2.4"/></svg>
<div class="a" style="left:1601px;top:753.8px;width:417px;height:23.800000000000068px;background:#3b3b3b;"></div>
<div class="a" style="left:1814px;top:753.8px;width:1px;height:23.800000000000068px;background:#333;"></div>
<div class="a" style="left:1861px;top:753.8px;width:1.5px;height:23.800000000000068px;background:#333;"></div>
<div class="a t" style="left:1643px;top:758.7px;font-size:13.8px;color:#dcdcdc;-webkit-text-stroke:0.25px #dcdcdc;">Background</div>
<svg class="a" style="left:1621px;top:757.2px" width="18" height="18" viewBox="0 0 18 18"><rect x="5" y="1" width="12" height="9" fill="#c4dcf5"/><path d="M5 9 L9 11 L9 16 L5 18 L1 16 L1 11 Z" fill="#eee"/><path d="M1 11 L5 13 L9 11 M5 13 V18" stroke="#999" stroke-width=".6" fill="none"/></svg>
<div class="a" style="left:1818px;top:758.4px;width:14.5px;height:14.5px;background:#9a9a9a;border-radius:2.5px"></div>
<svg class="a" style="left:1818px;top:758.4px" width="15" height="15"><path d="M3 12 L12 3" stroke="#2a2a2a" stroke-width="1.1"/></svg>
<div class="a" style="left:1838.8px;top:758.2px;width:5.8px;height:5.8px;border-radius:50%;background:#e04848"></div>
<div class="a" style="left:1838.8px;top:767.4px;width:5.8px;height:5.8px;border-radius:50%;background:#8a8a8a"></div>
<svg class="a" style="left:1864.2px;top:755.7px" width="21" height="20" viewBox="0 0 21 20"><rect x="1" y="3" width="18" height="15" rx="2" fill="#1b1b1b"/><path d="M4 1 L6 4 M9 1 L11 4 M14 1 L16 4" stroke="#e8783a" stroke-width="1.6"/><path d="M4 10 H16 M4 13.5 H13" stroke="#e8783a" stroke-width="1.2"/></svg>
<svg class="a" style="left:1886.6px;top:755.7px" width="21" height="20" viewBox="0 0 21 20"><rect x="0" y="0" width="21" height="20" fill="#555" opacity=".6"/><radialGradient id="tb" cx=".35" cy=".3" r=".75"><stop offset="0" stop-color="#c8b050"/><stop offset=".5" stop-color="#6a5a20"/><stop offset="1" stop-color="#1e1a0a"/></radialGradient><circle cx="10.5" cy="10" r="9.5" fill="url(#tb)"/><path d="M12 3 Q18 5 16 12 Q14 17 11 15 Q8 11 10 6 Z" fill="#d9607a"/></svg>
<div class="a" style="left:1599px;top:356.5px;width:438px;height:28.0px;background:#3b3b3b;"></div>
<div class="a" style="left:1599px;top:384.5px;width:438px;height:1.5px;background:#484848;"></div>
<svg class="a" style="left:1606.7px;top:364.4px" width="18" height="13"><rect x="0" y="0" width="17" height="2.2" fill="#eee"/><rect x="0" y="5" width="17" height="2.2" fill="#eee"/><rect x="0" y="10" width="17" height="2.2" fill="#eee"/></svg>
<div class="a t" style="left:1635.6px;top:362.1px;font-size:13.8px;color:#dcdcdc;-webkit-text-stroke:0.25px #dcdcdc;">File</div>
<div class="a t" style="left:1674.4px;top:362.1px;font-size:13.8px;color:#dcdcdc;-webkit-text-stroke:0.25px #dcdcdc;">Edit</div>
<div class="a t" style="left:1716.2px;top:362.1px;font-size:13.8px;color:#dcdcdc;-webkit-text-stroke:0.25px #dcdcdc;">View</div>
<div class="a t" style="left:1763.8px;top:362.1px;font-size:13.8px;color:#dcdcdc;-webkit-text-stroke:0.25px #dcdcdc;">Object</div>
<div class="a t" style="left:1822.2px;top:362.1px;font-size:13.8px;color:#d9e36b;-webkit-text-stroke:0.25px #d9e36b;">Tags</div>
<svg class="a" style="left:1867px;top:366px" width="8" height="10"><path d="M1 1 L6 5 L1 9 Z" fill="#ddd"/></svg>
<svg class="a" style="left:1945px;top:361px" width="92" height="20" viewBox="0 0 92 20"><g fill="none" stroke="#a0a0a0" stroke-width="1.5"><circle cx="8" cy="7.5" r="5"/><path d="M11.5 11 L16 16.5" stroke-width="2.2"/><path d="M24 10 L32 2.5 L40 10 M26.5 8 V17 H37.5 V8"/><path d="M48 3 H64 L58 10 V17 L54 14 V10 Z"/><rect x="74" y="2" width="15" height="16" rx="1"/></g><path d="M81.5 6 V14 M77.5 10 H85.5" stroke="#a0a0a0" stroke-width="2"/></svg>
<svg class="a" style="left:1599px;top:386px" width="60" height="400"><g stroke="#8a8a8a" stroke-width="1.2" fill="none"><path d="M10.599999999999909 0 V379.69999999999993 H23"/><path d="M10.599999999999909 141.69999999999993 H20"/><path d="M10.599999999999909 332.1 H20"/><path d="M10.599999999999909 355.9 H20"/><path d="M24 0 V88.10000000000002"/><path d="M24 22.69999999999999 H34"/><path d="M24 46.5 H34"/><path d="M24 70.30000000000001 H34"/><path d="M37 100.10000000000002 V117.89999999999998 H47"/><path d="M24 171.5 V308.30000000000007"/><path d="M24 189.29999999999995 H34"/><path d="M24 213.10000000000002 H34"/><path d="M24 236.89999999999998 H34"/><path d="M24 260.69999999999993 H34"/><path d="M24 284.5 H34"/><path d="M24 308.30000000000007 H34"/><path d="M16 94.10000000000002 H18"/><path d="M30 94.10000000000002 H34"/></g></svg>
<div class="a" style="left:2018px;top:386px;width:19px;height:394px;background:#3a3a3a;"></div>
<svg class="a" style="left:2021px;top:386px" width="14" height="395"><path d="M2 12 L7 7 L12 12" stroke="#8a8a8a" stroke-width="1.3" fill="none"/><path d="M2 383 L7 388 L12 383" stroke="#8a8a8a" stroke-width="1.3" fill="none"/><rect x="5" y="297" width="4" height="80" rx="2" fill="#555"/></svg>
<div class="a" style="left:1601px;top:778px;width:417px;height:23px;background:#3a3a3a;"></div>
<svg class="a" style="left:1601px;top:779px" width="420" height="18"><path d="M9 4 L5 8 L9 12" stroke="#8a8a8a" stroke-width="1.3" fill="none"/><path d="M410 4 L414 8 L410 12" stroke="#8a8a8a" stroke-width="1.3" fill="none"/><rect x="13.5" y="6" width="262" height="5" rx="2.5" fill="#555"/></svg>
<div class="a" style="left:1599px;top:801px;width:438px;height:474px;background:#3b3b3b;"></div>
<div class="a" style="left:1599px;top:801px;width:438px;height:25px;background:#303030;"></div>
<div class="a" style="left:1599.3px;top:802px;width:74.70000000000005px;height:24px;background:#3c3c3c;border-radius:4px 4px 0 0"></div>
<div class="a t" style="left:1606px;top:806.8px;font-size:13.5px;color:#dcdcdc;-webkit-text-stroke:0.25px #dcdcdc;">Attributes</div>
<div class="a t" style="left:1681.7px;top:806.8px;font-size:13.5px;color:#8a8a8a;-webkit-text-stroke:0.25px #8a8a8a;">Layers</div>
<div class="a t" style="left:1737.7px;top:806.8px;font-size:13.5px;color:#8a8a8a;-webkit-text-stroke:0.25px #8a8a8a;">Structure</div>
<div class="a" style="left:1599px;top:826px;width:438px;height:27px;background:#3b3b3b;border-bottom:1px solid #444"></div>
<svg class="a" style="left:1606.7px;top:834px" width="18" height="14"><rect x="0" y="0.5" width="17" height="2" fill="#ccc"/><rect x="0" y="5.5" width="17" height="2" fill="#ccc"/><rect x="0" y="10.5" width="17" height="2" fill="#ccc"/></svg>
<div class="a t" style="left:1635.7px;top:831.6px;font-size:13.8px;color:#dcdcdc;-webkit-text-stroke:0.25px #dcdcdc;">Mode</div>
<div class="a t" style="left:1687.7px;top:831.6px;font-size:13.8px;color:#dcdcdc;-webkit-text-stroke:0.25px #dcdcdc;">Edit</div>
<div class="a t" style="left:1729.3px;top:831.6px;font-size:13.8px;color:#dcdcdc;-webkit-text-stroke:0.25px #dcdcdc;">User Data</div>
<svg class="a" style="left:1848px;top:830px" width="190" height="22" viewBox="0 0 190 22"><g fill="none" stroke="#a5a5a5" stroke-width="1.6"><path d="M3 11 H17 M8 6 L3 11 L8 16"/></g><g fill="none" stroke="#666" stroke-width="1.6"><path d="M26 11 H40 M35 6 L40 11 L35 16"/></g><g fill="none" stroke="#a5a5a5" stroke-width="1.6"><path d="M58 4 V20 M52 10 L58 4 L64 10"/><circle cx="80" cy="8" r="4.5"/><path d="M83 11.5 L87 17" stroke-width="2.2"/><path d="M97 4 H113 L107 11 V18 L103 15 V11 Z"/><rect x="124" y="10" width="12" height="9" rx="1"/><path d="M126.5 10 V7 A3.5 3.5 0 0 1 133.5 7"/><circle cx="154" cy="11" r="7"/><circle cx="154" cy="11" r="2.5"/><rect x="171" y="3" width="14" height="16" rx="1"/></g><path d="M178 7 V15 M174 11 H182" stroke="#a5a5a5" stroke-width="2"/><circle cx="130" cy="14.5" r="1.2" fill="#a5a5a5"/></svg>
<div class="a" style="left:1599px;top:853px;width:1.5px;height:422px;background:#454545;"></div>
<div class="a" style="left:1590.5px;top:406px;width:8.5px;height:869px;background:#383838;"></div>
<div class="a" style="left:1599px;top:327.5px;width:1px;height:947.5px;background:#444;"></div>
<div class="a" style="left:213px;top:327.5px;width:1.5px;height:947.5px;background:#1e1e1e;"></div></body></html>
